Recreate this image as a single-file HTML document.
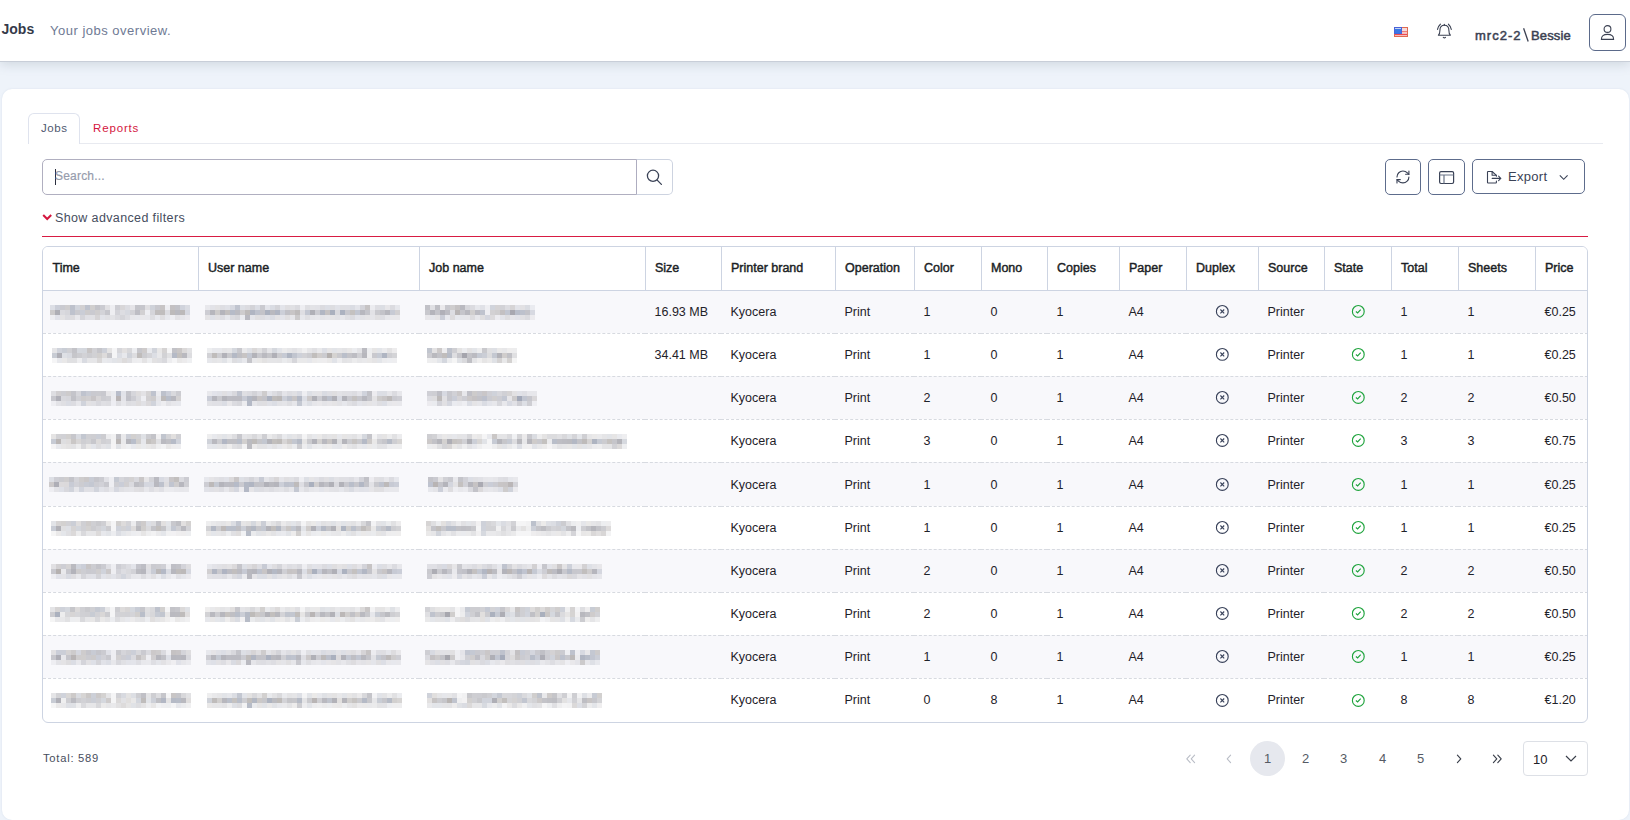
<!DOCTYPE html>
<html><head><meta charset="utf-8">
<style>
*{box-sizing:border-box;margin:0;padding:0}
html,body{width:1630px;height:820px;overflow:hidden}
body{background:#eef3fa;font-family:"Liberation Sans",sans-serif;color:#212529;position:relative}
.hdr{position:absolute;left:0;top:0;width:1630px;height:62px;background:#fff;border-bottom:1px solid #c8ced8;box-shadow:0 3px 10px rgba(110,128,140,.22)}
.abs{position:absolute;white-space:nowrap}
.card{position:absolute;left:2px;top:89px;width:1627px;height:731px;background:#fff;border-radius:10px;box-shadow:0 0 2px rgba(150,170,200,.25)}
.tabline{position:absolute;left:28px;top:143px;width:1575px;height:1px;background:#e8eaf0}
.tab{position:absolute;left:28px;top:113px;width:52px;height:31px;border:1px solid #dfe3ee;border-bottom:none;border-radius:6px 6px 0 0;background:#fff}
.search{position:absolute;left:42px;top:159px;width:595px;height:36px;border:1px solid #b0afc0;border-radius:5px 0 0 5px}
.sbtn{position:absolute;left:636px;top:159px;width:37px;height:36px;border:1px solid #cdd3e0;border-left:1px solid #aeadc0;border-radius:0 5px 5px 0}
.btn{position:absolute;top:159px;height:36px;border:1px solid #5d6c8c;border-radius:5px}
.redline{position:absolute;left:42px;top:236px;width:1546px;height:1px;background:#d81b43}
.tbl{position:absolute;left:42px;top:246px;width:1546px;height:477px;border:1px solid #cdd4e2;border-radius:6px;overflow:hidden}
table{border-collapse:collapse;table-layout:fixed;width:1544px}
th{height:43px;text-align:left;font-weight:normal;-webkit-text-stroke:.45px #1c1f26;font-size:12.5px;color:#1c1f26;padding:0 0 1px 9.5px;border-right:1px solid #cdd4e2;border-bottom:1px solid #cdd4e2;background:#fff}
th:last-child{border-right:none}
td{height:43px;font-size:12.5px;color:#1f2229;padding:1px 0 0 9.5px;border-bottom:1px dashed #d7dae0}
tr:last-child td{border-bottom:none}
tr.odd td{background:#f8f8fb}
tr.tall td{height:44px}
td.ic{padding-left:0;text-align:center}
td.ic svg{display:inline-block;vertical-align:middle;transform:translate(.3px,-.6px)}
.mz{position:absolute;filter:blur(.6px)}
.pg{position:absolute;top:741px;width:35px;height:35px;line-height:35px;text-align:center;font-size:13px;color:#555a64}
</style></head><body>
<div class="hdr">
  <div class="abs" style="left:1.5px;top:21px;font-size:14px;font-weight:bold;color:#353a4a">Jobs</div>
  <div class="abs" style="left:50px;top:23px;font-size:13px;letter-spacing:.5px;color:#6f7a94">Your jobs overview.</div>
  <svg class="abs" style="left:1394px;top:27px" width="14" height="10" viewBox="0 0 14 10">
    <rect x="0" y="0" width="14" height="10" fill="#df6a50"/>
    <rect x="1" y="1" width="12" height="8" fill="#f6dada"/>
    <rect x="1" y="4" width="12" height="1.2" fill="#f07a7a"/><rect x="1" y="6.8" width="12" height="1.4" fill="#ee4a52"/>
    <rect x="0" y="0" width="8" height="7" fill="#4a63d8"/>
    <rect x="1" y="1.5" width="6" height="4.8" fill="#3a78e6"/>
    <rect x="1" y="1" width="6" height="1" fill="#c8d4f2"/>
  </svg>
  <svg class="abs" style="left:1436px;top:23px" width="17" height="17" viewBox="0 0 17 17" fill="none" stroke="#3b4152" stroke-width="1.1" stroke-linecap="round" stroke-linejoin="round">
    <path d="M2.4 12.2C3.8 11 3.9 10 3.9 7.4C3.9 4.3 5.8 2.2 8.4 2.2C11 2.2 12.9 4.3 12.9 7.4C12.9 10 13 11 14.4 12.2Z"/>
    <path d="M8.4 1.2V2.2"/>
    <path d="M7.3 14.4Q8.4 15.4 9.5 14.4"/>
    <path d="M1.5 6.4Q2.2 3 4.4 1.2M15.3 6.4Q14.6 3 12.4 1.2"/>
  </svg>
  <div class="abs" style="left:1475px;top:28px;font-size:13px;-webkit-text-stroke:.5px #3b4152;letter-spacing:1px;color:#3b4152">mrc2-2</div>
  <svg class="abs" style="left:1522px;top:27px" width="8" height="16" viewBox="0 0 8 16"><path d="M1.6 1.3L6.2 14.5" stroke="#3b4152" stroke-width="1.3"/></svg>
  <div class="abs" style="left:1531px;top:28px;font-size:13px;-webkit-text-stroke:.5px #3b4152;letter-spacing:.15px;color:#3b4152">Bessie</div>
  <div class="abs" style="left:1589px;top:14px;width:37px;height:37px;border:1px solid #5b6a8a;border-radius:6px"></div>
  <svg class="abs" style="left:1600px;top:24px" width="16" height="17" viewBox="0 0 16 17" fill="none" stroke="#3b4152" stroke-width="1.1">
    <circle cx="7.5" cy="5" r="3.4"/>
    <path d="M1.4 15.4q0-5 6.1-5t6.1 5z"/>
  </svg>
</div>
<div class="card"></div>
<div class="tabline"></div>
<div class="tab"></div>
<div class="abs" style="left:41px;top:122px;font-size:11.5px;letter-spacing:.6px;color:#4f5870">Jobs</div>
<div class="abs" style="left:93px;top:122px;font-size:11.5px;letter-spacing:.85px;color:#d4163e">Reports</div>

<div class="search"></div>
<div class="abs" style="left:55px;top:169px;width:1px;height:16px;background:#2b2f3f"></div>
<div class="abs" style="left:55px;top:169px;font-size:12px;letter-spacing:.2px;-webkit-text-stroke:.2px #9aa0b0;color:#959bab">Search...</div>
<div class="sbtn"></div>
<svg class="abs" style="left:645px;top:168px" width="18" height="18" viewBox="0 0 18 18" fill="none" stroke="#3a4256" stroke-width="1.3" stroke-linecap="round">
  <circle cx="8" cy="7.8" r="5.6"/><path d="M12.2 12.1L16.4 16.4"/>
</svg>

<div class="btn" style="left:1385px;width:36px"></div>
<svg class="abs" style="left:1395.3px;top:169px" width="15.9" height="15.9" viewBox="0 0 24 24" fill="none" stroke="#3a4256" stroke-width="1.7" stroke-linecap="round" stroke-linejoin="round">
  <path d="M3 12a9 9 0 0 1 9-9 9.75 9.75 0 0 1 6.74 2.74L21 8"/><path d="M21 3v5h-5"/><path d="M21 12a9 9 0 0 1-9 9 9.75 9.75 0 0 1-6.74-2.74L3 16"/><path d="M8 16H3v5"/>
</svg>
<div class="btn" style="left:1428px;width:37px"></div>
<svg class="abs" style="left:1438px;top:170px" width="17" height="16" viewBox="0 0 17 16" fill="none" stroke="#3a4256" stroke-width="1.2">
  <rect x="1.6" y="1.7" width="14" height="11.8" rx="1.4"/><path d="M1.6 5H15.6M6 5V13.5" stroke="#6b7588"/>
</svg>
<div class="btn" style="left:1472px;width:113px;height:35px"></div>
<svg class="abs" style="left:1486px;top:170px" width="16" height="16" viewBox="0 0 16 16" fill="none" stroke="#3a4256" stroke-width="1.1" stroke-linejoin="round" stroke-linecap="round">
  <path d="M10.4 11V12.4Q10.4 13 9.8 13H2.1Q1.5 13 1.5 12.4V2.1Q1.5 1.5 2.1 1.5H6.1L10.4 5.3V6.2"/><path d="M6.1 1.5V5.3H10.4"/><path d="M6.2 8.4H14.8M12.6 6.2L14.8 8.4L12.6 10.6"/>
</svg>
<div class="abs" style="left:1508px;top:169px;font-size:13px;letter-spacing:.3px;color:#3a4256">Export</div>
<svg class="abs" style="left:1558px;top:173px" width="11" height="9" viewBox="0 0 11 9" fill="none" stroke="#3a4256" stroke-width="1.1">
  <path d="M1.8 2.3L5.7 6.3L9.6 2.3"/>
</svg>

<svg class="abs" style="left:42px;top:213px" width="11" height="9" viewBox="0 0 11 9" fill="none" stroke="#d4163e" stroke-width="2">
  <path d="M1.2 2L5.2 6L9.2 2"/>
</svg>
<div class="abs" style="left:55px;top:211px;font-size:12.5px;letter-spacing:.37px;color:#464d5e">Show advanced filters</div>
<div class="redline"></div>

<div class="tbl">
<table>
<thead><tr><th style="width:155px">Time</th><th style="width:221px">User name</th><th style="width:226px">Job name</th><th style="width:76px">Size</th><th style="width:114px">Printer brand</th><th style="width:79px">Operation</th><th style="width:67px">Color</th><th style="width:66px">Mono</th><th style="width:72px">Copies</th><th style="width:67px">Paper</th><th style="width:72px">Duplex</th><th style="width:66px">Source</th><th style="width:67px">State</th><th style="width:67px">Total</th><th style="width:77px">Sheets</th><th style="width:53px">Price</th></tr></thead>
<tbody>
<tr class="odd"><td></td><td></td><td></td><td>16.93 MB</td><td>Kyocera</td><td>Print</td><td>1</td><td>0</td><td>1</td><td>A4</td><td class="ic"><svg width="14" height="14" viewBox="0 0 14 14"><circle cx="7" cy="7" r="5.9" fill="none" stroke="#39425a" stroke-width="1.15"/><path d="M5.1 5.1L8.9 8.9M8.9 5.1L5.1 8.9" stroke="#39425a" stroke-width="1.1"/></svg></td><td>Printer</td><td class="ic"><svg width="14" height="14" viewBox="0 0 14 14"><circle cx="7" cy="7" r="5.9" fill="none" stroke="#1ea33c" stroke-width="1.15"/><path d="M4.6 7.1L6.3 8.5L9.4 5.2" fill="none" stroke="#1ea33c" stroke-width="1.15"/></svg></td><td>1</td><td>1</td><td>€0.25</td></tr>
<tr class=""><td></td><td></td><td></td><td>34.41 MB</td><td>Kyocera</td><td>Print</td><td>1</td><td>0</td><td>1</td><td>A4</td><td class="ic"><svg width="14" height="14" viewBox="0 0 14 14"><circle cx="7" cy="7" r="5.9" fill="none" stroke="#39425a" stroke-width="1.15"/><path d="M5.1 5.1L8.9 8.9M8.9 5.1L5.1 8.9" stroke="#39425a" stroke-width="1.1"/></svg></td><td>Printer</td><td class="ic"><svg width="14" height="14" viewBox="0 0 14 14"><circle cx="7" cy="7" r="5.9" fill="none" stroke="#1ea33c" stroke-width="1.15"/><path d="M4.6 7.1L6.3 8.5L9.4 5.2" fill="none" stroke="#1ea33c" stroke-width="1.15"/></svg></td><td>1</td><td>1</td><td>€0.25</td></tr>
<tr class="odd"><td></td><td></td><td></td><td></td><td>Kyocera</td><td>Print</td><td>2</td><td>0</td><td>1</td><td>A4</td><td class="ic"><svg width="14" height="14" viewBox="0 0 14 14"><circle cx="7" cy="7" r="5.9" fill="none" stroke="#39425a" stroke-width="1.15"/><path d="M5.1 5.1L8.9 8.9M8.9 5.1L5.1 8.9" stroke="#39425a" stroke-width="1.1"/></svg></td><td>Printer</td><td class="ic"><svg width="14" height="14" viewBox="0 0 14 14"><circle cx="7" cy="7" r="5.9" fill="none" stroke="#1ea33c" stroke-width="1.15"/><path d="M4.6 7.1L6.3 8.5L9.4 5.2" fill="none" stroke="#1ea33c" stroke-width="1.15"/></svg></td><td>2</td><td>2</td><td>€0.50</td></tr>
<tr class=""><td></td><td></td><td></td><td></td><td>Kyocera</td><td>Print</td><td>3</td><td>0</td><td>1</td><td>A4</td><td class="ic"><svg width="14" height="14" viewBox="0 0 14 14"><circle cx="7" cy="7" r="5.9" fill="none" stroke="#39425a" stroke-width="1.15"/><path d="M5.1 5.1L8.9 8.9M8.9 5.1L5.1 8.9" stroke="#39425a" stroke-width="1.1"/></svg></td><td>Printer</td><td class="ic"><svg width="14" height="14" viewBox="0 0 14 14"><circle cx="7" cy="7" r="5.9" fill="none" stroke="#1ea33c" stroke-width="1.15"/><path d="M4.6 7.1L6.3 8.5L9.4 5.2" fill="none" stroke="#1ea33c" stroke-width="1.15"/></svg></td><td>3</td><td>3</td><td>€0.75</td></tr>
<tr class="odd tall"><td></td><td></td><td></td><td></td><td>Kyocera</td><td>Print</td><td>1</td><td>0</td><td>1</td><td>A4</td><td class="ic"><svg width="14" height="14" viewBox="0 0 14 14"><circle cx="7" cy="7" r="5.9" fill="none" stroke="#39425a" stroke-width="1.15"/><path d="M5.1 5.1L8.9 8.9M8.9 5.1L5.1 8.9" stroke="#39425a" stroke-width="1.1"/></svg></td><td>Printer</td><td class="ic"><svg width="14" height="14" viewBox="0 0 14 14"><circle cx="7" cy="7" r="5.9" fill="none" stroke="#1ea33c" stroke-width="1.15"/><path d="M4.6 7.1L6.3 8.5L9.4 5.2" fill="none" stroke="#1ea33c" stroke-width="1.15"/></svg></td><td>1</td><td>1</td><td>€0.25</td></tr>
<tr class=""><td></td><td></td><td></td><td></td><td>Kyocera</td><td>Print</td><td>1</td><td>0</td><td>1</td><td>A4</td><td class="ic"><svg width="14" height="14" viewBox="0 0 14 14"><circle cx="7" cy="7" r="5.9" fill="none" stroke="#39425a" stroke-width="1.15"/><path d="M5.1 5.1L8.9 8.9M8.9 5.1L5.1 8.9" stroke="#39425a" stroke-width="1.1"/></svg></td><td>Printer</td><td class="ic"><svg width="14" height="14" viewBox="0 0 14 14"><circle cx="7" cy="7" r="5.9" fill="none" stroke="#1ea33c" stroke-width="1.15"/><path d="M4.6 7.1L6.3 8.5L9.4 5.2" fill="none" stroke="#1ea33c" stroke-width="1.15"/></svg></td><td>1</td><td>1</td><td>€0.25</td></tr>
<tr class="odd"><td></td><td></td><td></td><td></td><td>Kyocera</td><td>Print</td><td>2</td><td>0</td><td>1</td><td>A4</td><td class="ic"><svg width="14" height="14" viewBox="0 0 14 14"><circle cx="7" cy="7" r="5.9" fill="none" stroke="#39425a" stroke-width="1.15"/><path d="M5.1 5.1L8.9 8.9M8.9 5.1L5.1 8.9" stroke="#39425a" stroke-width="1.1"/></svg></td><td>Printer</td><td class="ic"><svg width="14" height="14" viewBox="0 0 14 14"><circle cx="7" cy="7" r="5.9" fill="none" stroke="#1ea33c" stroke-width="1.15"/><path d="M4.6 7.1L6.3 8.5L9.4 5.2" fill="none" stroke="#1ea33c" stroke-width="1.15"/></svg></td><td>2</td><td>2</td><td>€0.50</td></tr>
<tr class=""><td></td><td></td><td></td><td></td><td>Kyocera</td><td>Print</td><td>2</td><td>0</td><td>1</td><td>A4</td><td class="ic"><svg width="14" height="14" viewBox="0 0 14 14"><circle cx="7" cy="7" r="5.9" fill="none" stroke="#39425a" stroke-width="1.15"/><path d="M5.1 5.1L8.9 8.9M8.9 5.1L5.1 8.9" stroke="#39425a" stroke-width="1.1"/></svg></td><td>Printer</td><td class="ic"><svg width="14" height="14" viewBox="0 0 14 14"><circle cx="7" cy="7" r="5.9" fill="none" stroke="#1ea33c" stroke-width="1.15"/><path d="M4.6 7.1L6.3 8.5L9.4 5.2" fill="none" stroke="#1ea33c" stroke-width="1.15"/></svg></td><td>2</td><td>2</td><td>€0.50</td></tr>
<tr class="odd"><td></td><td></td><td></td><td></td><td>Kyocera</td><td>Print</td><td>1</td><td>0</td><td>1</td><td>A4</td><td class="ic"><svg width="14" height="14" viewBox="0 0 14 14"><circle cx="7" cy="7" r="5.9" fill="none" stroke="#39425a" stroke-width="1.15"/><path d="M5.1 5.1L8.9 8.9M8.9 5.1L5.1 8.9" stroke="#39425a" stroke-width="1.1"/></svg></td><td>Printer</td><td class="ic"><svg width="14" height="14" viewBox="0 0 14 14"><circle cx="7" cy="7" r="5.9" fill="none" stroke="#1ea33c" stroke-width="1.15"/><path d="M4.6 7.1L6.3 8.5L9.4 5.2" fill="none" stroke="#1ea33c" stroke-width="1.15"/></svg></td><td>1</td><td>1</td><td>€0.25</td></tr>
<tr class=""><td></td><td></td><td></td><td></td><td>Kyocera</td><td>Print</td><td>0</td><td>8</td><td>1</td><td>A4</td><td class="ic"><svg width="14" height="14" viewBox="0 0 14 14"><circle cx="7" cy="7" r="5.9" fill="none" stroke="#39425a" stroke-width="1.15"/><path d="M5.1 5.1L8.9 8.9M8.9 5.1L5.1 8.9" stroke="#39425a" stroke-width="1.1"/></svg></td><td>Printer</td><td class="ic"><svg width="14" height="14" viewBox="0 0 14 14"><circle cx="7" cy="7" r="5.9" fill="none" stroke="#1ea33c" stroke-width="1.15"/><path d="M4.6 7.1L6.3 8.5L9.4 5.2" fill="none" stroke="#1ea33c" stroke-width="1.15"/></svg></td><td>8</td><td>8</td><td>€1.20</td></tr>
</tbody>
</table>
</div>
<svg class="mz" style="left:50px;top:305px" width="140" height="15"><rect x="0" y="0" width="5" height="5" fill="#dddfe6"/><rect x="5" y="0" width="5" height="5" fill="#cbced8"/><rect x="10" y="0" width="5" height="5" fill="#cacad0"/><rect x="15" y="0" width="5" height="5" fill="#cfcdce"/><rect x="20" y="0" width="5" height="5" fill="#bdc1cc"/><rect x="25" y="0" width="5" height="5" fill="#d1d4dc"/><rect x="30" y="0" width="5" height="5" fill="#d2d0d2"/><rect x="35" y="0" width="5" height="5" fill="#bec2cd"/><rect x="40" y="0" width="5" height="5" fill="#d0cece"/><rect x="45" y="0" width="5" height="5" fill="#c3c3c9"/><rect x="50" y="0" width="5" height="5" fill="#cbcbd1"/><rect x="55" y="0" width="5" height="5" fill="#e1e0e3"/><rect x="60" y="0" width="5" height="5" fill="#eeeef2"/><rect x="65" y="0" width="5" height="5" fill="#cdcdd3"/><rect x="70" y="0" width="5" height="5" fill="#d8d6d8"/><rect x="75" y="0" width="5" height="5" fill="#dcdce1"/><rect x="80" y="0" width="5" height="5" fill="#e5e4e8"/><rect x="85" y="0" width="5" height="5" fill="#c4c4ca"/><rect x="90" y="0" width="5" height="5" fill="#c6c6cc"/><rect x="95" y="0" width="5" height="5" fill="#e0dfe2"/><rect x="100" y="0" width="5" height="5" fill="#cfd2da"/><rect x="105" y="0" width="5" height="5" fill="#c8c8ce"/><rect x="110" y="0" width="5" height="5" fill="#c7c4c5"/><rect x="115" y="0" width="5" height="5" fill="#eeeef2"/><rect x="120" y="0" width="5" height="5" fill="#c4c1c3"/><rect x="125" y="0" width="5" height="5" fill="#c2c2c8"/><rect x="130" y="0" width="5" height="5" fill="#d0d3dc"/><rect x="135" y="0" width="5" height="5" fill="#dadce3"/><rect x="0" y="5" width="5" height="5" fill="#cccacb"/><rect x="5" y="5" width="5" height="5" fill="#aeaeb5"/><rect x="10" y="5" width="5" height="5" fill="#dadadf"/><rect x="15" y="5" width="5" height="5" fill="#d6d6db"/><rect x="20" y="5" width="5" height="5" fill="#bec2cd"/><rect x="25" y="5" width="5" height="5" fill="#cacacf"/><rect x="30" y="5" width="5" height="5" fill="#cacdd6"/><rect x="35" y="5" width="5" height="5" fill="#cdcbcc"/><rect x="40" y="5" width="5" height="5" fill="#cacad0"/><rect x="45" y="5" width="5" height="5" fill="#cfcdce"/><rect x="50" y="5" width="5" height="5" fill="#d3d3d8"/><rect x="55" y="5" width="5" height="5" fill="#c6c6cc"/><rect x="60" y="5" width="5" height="5" fill="#eeeef2"/><rect x="65" y="5" width="5" height="5" fill="#d3d3d9"/><rect x="70" y="5" width="5" height="5" fill="#dddde2"/><rect x="75" y="5" width="5" height="5" fill="#d7d9e0"/><rect x="80" y="5" width="5" height="5" fill="#d2d2d7"/><rect x="85" y="5" width="5" height="5" fill="#bdbdc4"/><rect x="90" y="5" width="5" height="5" fill="#d2d0d2"/><rect x="95" y="5" width="5" height="5" fill="#eeeef2"/><rect x="100" y="5" width="5" height="5" fill="#d5d5da"/><rect x="105" y="5" width="5" height="5" fill="#c0bdbd"/><rect x="110" y="5" width="5" height="5" fill="#c0bdbd"/><rect x="115" y="5" width="5" height="5" fill="#dcdce1"/><rect x="120" y="5" width="5" height="5" fill="#bdbaba"/><rect x="125" y="5" width="5" height="5" fill="#b9b9bf"/><rect x="130" y="5" width="5" height="5" fill="#bcb9b9"/><rect x="135" y="5" width="5" height="5" fill="#d6d8e0"/><rect x="0" y="10" width="5" height="5" fill="#eeeef2"/><rect x="5" y="10" width="5" height="5" fill="#e1e2e9"/><rect x="10" y="10" width="5" height="5" fill="#e3e2e4"/><rect x="15" y="10" width="5" height="5" fill="#dbdbe0"/><rect x="20" y="10" width="5" height="5" fill="#dddcdf"/><rect x="25" y="10" width="5" height="5" fill="#e8e8ec"/><rect x="30" y="10" width="5" height="5" fill="#d5d5da"/><rect x="35" y="10" width="5" height="5" fill="#e0e0e5"/><rect x="40" y="10" width="5" height="5" fill="#e1e1e5"/><rect x="45" y="10" width="5" height="5" fill="#d6d4d6"/><rect x="50" y="10" width="5" height="5" fill="#e2e3e9"/><rect x="55" y="10" width="5" height="5" fill="#e0e0e4"/><rect x="60" y="10" width="5" height="5" fill="#e3e3e7"/><rect x="65" y="10" width="5" height="5" fill="#dbdbe0"/><rect x="70" y="10" width="5" height="5" fill="#d5d5da"/><rect x="75" y="10" width="5" height="5" fill="#dddde2"/><rect x="80" y="10" width="5" height="5" fill="#e7e7eb"/><rect x="85" y="10" width="5" height="5" fill="#e7e8ed"/><rect x="90" y="10" width="5" height="5" fill="#e9e8eb"/><rect x="95" y="10" width="5" height="5" fill="#e8e8ec"/><rect x="100" y="10" width="5" height="5" fill="#dedee2"/><rect x="105" y="10" width="5" height="5" fill="#e8e9ee"/><rect x="110" y="10" width="5" height="5" fill="#dfdee1"/><rect x="115" y="10" width="5" height="5" fill="#e7e8ed"/><rect x="120" y="10" width="5" height="5" fill="#eeeef2"/><rect x="125" y="10" width="5" height="5" fill="#e3e2e5"/><rect x="130" y="10" width="5" height="5" fill="#e6e6ea"/><rect x="135" y="10" width="5" height="5" fill="#ebeaee"/></svg>
<svg class="mz" style="left:205px;top:305px" width="195" height="15"><rect x="0" y="0" width="5" height="5" fill="#e8e8ec"/><rect x="5" y="0" width="5" height="5" fill="#e3e3e8"/><rect x="10" y="0" width="5" height="5" fill="#e3e2e4"/><rect x="15" y="0" width="5" height="5" fill="#dedee3"/><rect x="20" y="0" width="5" height="5" fill="#e0e1e7"/><rect x="25" y="0" width="5" height="5" fill="#d6d8e0"/><rect x="30" y="0" width="5" height="5" fill="#c0c4cf"/><rect x="35" y="0" width="5" height="5" fill="#dddfe5"/><rect x="40" y="0" width="5" height="5" fill="#dbdbe0"/><rect x="45" y="0" width="5" height="5" fill="#d3d3d8"/><rect x="50" y="0" width="5" height="5" fill="#dbdde4"/><rect x="55" y="0" width="5" height="5" fill="#cacad0"/><rect x="60" y="0" width="5" height="5" fill="#e3e4ea"/><rect x="65" y="0" width="5" height="5" fill="#dadce3"/><rect x="70" y="0" width="5" height="5" fill="#d4d4d9"/><rect x="75" y="0" width="5" height="5" fill="#e3e4ea"/><rect x="80" y="0" width="5" height="5" fill="#dfdee1"/><rect x="85" y="0" width="5" height="5" fill="#e0e0e4"/><rect x="90" y="0" width="5" height="5" fill="#dadadf"/><rect x="95" y="0" width="5" height="5" fill="#eeeef2"/><rect x="100" y="0" width="5" height="5" fill="#dfdfe3"/><rect x="105" y="0" width="5" height="5" fill="#e3e3e7"/><rect x="110" y="0" width="5" height="5" fill="#e2e2e7"/><rect x="115" y="0" width="5" height="5" fill="#dbdbe0"/><rect x="120" y="0" width="5" height="5" fill="#dcdee5"/><rect x="125" y="0" width="5" height="5" fill="#dddde1"/><rect x="130" y="0" width="5" height="5" fill="#e1e2e8"/><rect x="135" y="0" width="5" height="5" fill="#dfdfe3"/><rect x="140" y="0" width="5" height="5" fill="#dfdfe4"/><rect x="145" y="0" width="5" height="5" fill="#dadce3"/><rect x="150" y="0" width="5" height="5" fill="#e3e4ea"/><rect x="155" y="0" width="5" height="5" fill="#d3d3d9"/><rect x="160" y="0" width="5" height="5" fill="#c6c3c4"/><rect x="165" y="0" width="5" height="5" fill="#ececf0"/><rect x="170" y="0" width="5" height="5" fill="#dedee3"/><rect x="175" y="0" width="5" height="5" fill="#dcdee4"/><rect x="180" y="0" width="5" height="5" fill="#e7e6e9"/><rect x="185" y="0" width="5" height="5" fill="#dbdbe0"/><rect x="190" y="0" width="5" height="5" fill="#e6e7ec"/><rect x="0" y="5" width="5" height="5" fill="#cdcdd3"/><rect x="5" y="5" width="5" height="5" fill="#b6b6bd"/><rect x="10" y="5" width="5" height="5" fill="#cdcbcb"/><rect x="15" y="5" width="5" height="5" fill="#b4b4bb"/><rect x="20" y="5" width="5" height="5" fill="#c2bfbf"/><rect x="25" y="5" width="5" height="5" fill="#b6bbc8"/><rect x="30" y="5" width="5" height="5" fill="#bbbbc2"/><rect x="35" y="5" width="5" height="5" fill="#cecccd"/><rect x="40" y="5" width="5" height="5" fill="#bebbba"/><rect x="45" y="5" width="5" height="5" fill="#b0b5c2"/><rect x="50" y="5" width="5" height="5" fill="#bec2cd"/><rect x="55" y="5" width="5" height="5" fill="#c3c3c9"/><rect x="60" y="5" width="5" height="5" fill="#abb1bf"/><rect x="65" y="5" width="5" height="5" fill="#b9b9bf"/><rect x="70" y="5" width="5" height="5" fill="#b0b5c2"/><rect x="75" y="5" width="5" height="5" fill="#cccfd8"/><rect x="80" y="5" width="5" height="5" fill="#c1c1c7"/><rect x="85" y="5" width="5" height="5" fill="#c8c5c6"/><rect x="90" y="5" width="5" height="5" fill="#bebbbb"/><rect x="95" y="5" width="5" height="5" fill="#dedee3"/><rect x="100" y="5" width="5" height="5" fill="#c3c7d2"/><rect x="105" y="5" width="5" height="5" fill="#b0b0b7"/><rect x="110" y="5" width="5" height="5" fill="#ccccd2"/><rect x="115" y="5" width="5" height="5" fill="#b1b6c3"/><rect x="120" y="5" width="5" height="5" fill="#c5c2c3"/><rect x="125" y="5" width="5" height="5" fill="#aab0be"/><rect x="130" y="5" width="5" height="5" fill="#d9d9de"/><rect x="135" y="5" width="5" height="5" fill="#acb2c0"/><rect x="140" y="5" width="5" height="5" fill="#c8c8ce"/><rect x="145" y="5" width="5" height="5" fill="#c4c1c0"/><rect x="150" y="5" width="5" height="5" fill="#c2c6d1"/><rect x="155" y="5" width="5" height="5" fill="#b7b7be"/><rect x="160" y="5" width="5" height="5" fill="#c4c4ca"/><rect x="165" y="5" width="5" height="5" fill="#e2e2e6"/><rect x="170" y="5" width="5" height="5" fill="#c9c9ce"/><rect x="175" y="5" width="5" height="5" fill="#c3c3c9"/><rect x="180" y="5" width="5" height="5" fill="#b7b7be"/><rect x="185" y="5" width="5" height="5" fill="#c7cad4"/><rect x="190" y="5" width="5" height="5" fill="#d2d0d2"/><rect x="0" y="10" width="5" height="5" fill="#e4e3e5"/><rect x="5" y="10" width="5" height="5" fill="#dee0e7"/><rect x="10" y="10" width="5" height="5" fill="#e2e1e4"/><rect x="15" y="10" width="5" height="5" fill="#dddde2"/><rect x="20" y="10" width="5" height="5" fill="#e6e7ec"/><rect x="25" y="10" width="5" height="5" fill="#dbdbe0"/><rect x="30" y="10" width="5" height="5" fill="#d7d7dc"/><rect x="35" y="10" width="5" height="5" fill="#ebecf0"/><rect x="40" y="10" width="5" height="5" fill="#b9b9c0"/><rect x="45" y="10" width="5" height="5" fill="#e4e5ea"/><rect x="50" y="10" width="5" height="5" fill="#e0dfe1"/><rect x="55" y="10" width="5" height="5" fill="#dddde2"/><rect x="60" y="10" width="5" height="5" fill="#e0e1e7"/><rect x="65" y="10" width="5" height="5" fill="#dbdde4"/><rect x="70" y="10" width="5" height="5" fill="#e4e3e5"/><rect x="75" y="10" width="5" height="5" fill="#e3e4ea"/><rect x="80" y="10" width="5" height="5" fill="#e0dfe1"/><rect x="85" y="10" width="5" height="5" fill="#e6e6ea"/><rect x="90" y="10" width="5" height="5" fill="#cccacb"/><rect x="95" y="10" width="5" height="5" fill="#e6e7ec"/><rect x="100" y="10" width="5" height="5" fill="#dfdfe3"/><rect x="105" y="10" width="5" height="5" fill="#e6e6ea"/><rect x="110" y="10" width="5" height="5" fill="#e8e8ec"/><rect x="115" y="10" width="5" height="5" fill="#e4e4e8"/><rect x="120" y="10" width="5" height="5" fill="#e6e6ea"/><rect x="125" y="10" width="5" height="5" fill="#e5e4e6"/><rect x="130" y="10" width="5" height="5" fill="#e2e2e6"/><rect x="135" y="10" width="5" height="5" fill="#e7e7eb"/><rect x="140" y="10" width="5" height="5" fill="#e0e0e4"/><rect x="145" y="10" width="5" height="5" fill="#dbdbe0"/><rect x="150" y="10" width="5" height="5" fill="#e3e4ea"/><rect x="155" y="10" width="5" height="5" fill="#e2e2e6"/><rect x="160" y="10" width="5" height="5" fill="#e5e4e6"/><rect x="165" y="10" width="5" height="5" fill="#e5e5e9"/><rect x="170" y="10" width="5" height="5" fill="#e0dfe1"/><rect x="175" y="10" width="5" height="5" fill="#dedee3"/><rect x="180" y="10" width="5" height="5" fill="#e7e7eb"/><rect x="185" y="10" width="5" height="5" fill="#e9e8eb"/><rect x="190" y="10" width="5" height="5" fill="#e9e8eb"/></svg>
<svg class="mz" style="left:425px;top:305px" width="110" height="15"><rect x="0" y="0" width="5" height="5" fill="#c1c1c7"/><rect x="5" y="0" width="5" height="5" fill="#e0e0e4"/><rect x="10" y="0" width="5" height="5" fill="#bfbfc5"/><rect x="15" y="0" width="5" height="5" fill="#eae9ec"/><rect x="20" y="0" width="5" height="5" fill="#c8c8ce"/><rect x="25" y="0" width="5" height="5" fill="#cfcdce"/><rect x="30" y="0" width="5" height="5" fill="#c5c2c3"/><rect x="35" y="0" width="5" height="5" fill="#b9b9c0"/><rect x="40" y="0" width="5" height="5" fill="#d6d6db"/><rect x="45" y="0" width="5" height="5" fill="#dbdbe0"/><rect x="50" y="0" width="5" height="5" fill="#e6e7ec"/><rect x="55" y="0" width="5" height="5" fill="#e0e1e7"/><rect x="60" y="0" width="5" height="5" fill="#eeeef2"/><rect x="65" y="0" width="5" height="5" fill="#d1d4dc"/><rect x="70" y="0" width="5" height="5" fill="#d5d3d5"/><rect x="75" y="0" width="5" height="5" fill="#d2d2d7"/><rect x="80" y="0" width="5" height="5" fill="#dcdce1"/><rect x="85" y="0" width="5" height="5" fill="#d6d4d6"/><rect x="90" y="0" width="5" height="5" fill="#e2e3e9"/><rect x="95" y="0" width="5" height="5" fill="#e2e1e4"/><rect x="100" y="0" width="5" height="5" fill="#dadce2"/><rect x="105" y="0" width="5" height="5" fill="#eaebf0"/><rect x="0" y="5" width="5" height="5" fill="#c8c8cd"/><rect x="5" y="5" width="5" height="5" fill="#b4b4bb"/><rect x="10" y="5" width="5" height="5" fill="#c4c4ca"/><rect x="15" y="5" width="5" height="5" fill="#b0b0b8"/><rect x="20" y="5" width="5" height="5" fill="#bcbcc3"/><rect x="25" y="5" width="5" height="5" fill="#dddde2"/><rect x="30" y="5" width="5" height="5" fill="#b9b5b5"/><rect x="35" y="5" width="5" height="5" fill="#c5c5cb"/><rect x="40" y="5" width="5" height="5" fill="#b8b8bf"/><rect x="45" y="5" width="5" height="5" fill="#d0cece"/><rect x="50" y="5" width="5" height="5" fill="#bbbbc2"/><rect x="55" y="5" width="5" height="5" fill="#bfc3ce"/><rect x="60" y="5" width="5" height="5" fill="#eeeef2"/><rect x="65" y="5" width="5" height="5" fill="#d3d1d3"/><rect x="70" y="5" width="5" height="5" fill="#d0cecf"/><rect x="75" y="5" width="5" height="5" fill="#c3c0c2"/><rect x="80" y="5" width="5" height="5" fill="#c2c6d1"/><rect x="85" y="5" width="5" height="5" fill="#a8a8b0"/><rect x="90" y="5" width="5" height="5" fill="#b9beca"/><rect x="95" y="5" width="5" height="5" fill="#bdc1cc"/><rect x="100" y="5" width="5" height="5" fill="#c3c3c9"/><rect x="105" y="5" width="5" height="5" fill="#d7d9e1"/><rect x="0" y="10" width="5" height="5" fill="#e8e7ea"/><rect x="5" y="10" width="5" height="5" fill="#e5e6eb"/><rect x="10" y="10" width="5" height="5" fill="#e5e4e6"/><rect x="15" y="10" width="5" height="5" fill="#cacdd7"/><rect x="20" y="10" width="5" height="5" fill="#e8e9ee"/><rect x="25" y="10" width="5" height="5" fill="#dddbdd"/><rect x="30" y="10" width="5" height="5" fill="#e7e8ed"/><rect x="35" y="10" width="5" height="5" fill="#e5e6eb"/><rect x="40" y="10" width="5" height="5" fill="#e6e6ea"/><rect x="45" y="10" width="5" height="5" fill="#dddcdf"/><rect x="50" y="10" width="5" height="5" fill="#e7e7eb"/><rect x="55" y="10" width="5" height="5" fill="#dfdee0"/><rect x="60" y="10" width="5" height="5" fill="#d5d7df"/><rect x="65" y="10" width="5" height="5" fill="#dddbdd"/><rect x="70" y="10" width="5" height="5" fill="#edecf0"/><rect x="75" y="10" width="5" height="5" fill="#e3e4ea"/><rect x="80" y="10" width="5" height="5" fill="#dedde0"/><rect x="85" y="10" width="5" height="5" fill="#e5e5e9"/><rect x="90" y="10" width="5" height="5" fill="#e2e3e9"/><rect x="95" y="10" width="5" height="5" fill="#e1e0e3"/><rect x="100" y="10" width="5" height="5" fill="#dbdbdf"/><rect x="105" y="10" width="5" height="5" fill="#ecebee"/></svg>
<svg class="mz" style="left:52px;top:348px" width="140" height="15"><rect x="0" y="0" width="5" height="5" fill="#e5e5e7"/><rect x="5" y="0" width="5" height="5" fill="#d0d3db"/><rect x="10" y="0" width="5" height="5" fill="#c9cdd5"/><rect x="15" y="0" width="5" height="5" fill="#d0d0d4"/><rect x="20" y="0" width="5" height="5" fill="#c3c3c8"/><rect x="25" y="0" width="5" height="5" fill="#d5d8de"/><rect x="30" y="0" width="5" height="5" fill="#d4d7dd"/><rect x="35" y="0" width="5" height="5" fill="#c7c4c4"/><rect x="40" y="0" width="5" height="5" fill="#d1d1d5"/><rect x="45" y="0" width="5" height="5" fill="#c5c5ca"/><rect x="50" y="0" width="5" height="5" fill="#cdd0d8"/><rect x="55" y="0" width="5" height="5" fill="#e4e3e3"/><rect x="60" y="0" width="5" height="5" fill="#f5f5f6"/><rect x="65" y="0" width="5" height="5" fill="#d6d6da"/><rect x="70" y="0" width="5" height="5" fill="#e2e0e0"/><rect x="75" y="0" width="5" height="5" fill="#d7d7da"/><rect x="80" y="0" width="5" height="5" fill="#ecedf0"/><rect x="85" y="0" width="5" height="5" fill="#c6c6cb"/><rect x="90" y="0" width="5" height="5" fill="#cecbcb"/><rect x="95" y="0" width="5" height="5" fill="#e8e9ed"/><rect x="100" y="0" width="5" height="5" fill="#d1d4db"/><rect x="105" y="0" width="5" height="5" fill="#e8e7e7"/><rect x="110" y="0" width="5" height="5" fill="#d5d3d3"/><rect x="115" y="0" width="5" height="5" fill="#f5f5f6"/><rect x="120" y="0" width="5" height="5" fill="#c2c2c7"/><rect x="125" y="0" width="5" height="5" fill="#c9c6c6"/><rect x="130" y="0" width="5" height="5" fill="#dbd9d9"/><rect x="135" y="0" width="5" height="5" fill="#e2e2e4"/><rect x="0" y="5" width="5" height="5" fill="#c8ccd4"/><rect x="5" y="5" width="5" height="5" fill="#afafb6"/><rect x="10" y="5" width="5" height="5" fill="#dee0e5"/><rect x="15" y="5" width="5" height="5" fill="#d9dbe1"/><rect x="20" y="5" width="5" height="5" fill="#c6c6ca"/><rect x="25" y="5" width="5" height="5" fill="#ccccd0"/><rect x="30" y="5" width="5" height="5" fill="#d2d2d6"/><rect x="35" y="5" width="5" height="5" fill="#ccccd0"/><rect x="40" y="5" width="5" height="5" fill="#d1d1d4"/><rect x="45" y="5" width="5" height="5" fill="#d1cfce"/><rect x="50" y="5" width="5" height="5" fill="#dddbdb"/><rect x="55" y="5" width="5" height="5" fill="#c7c7cb"/><rect x="60" y="5" width="5" height="5" fill="#f5f5f6"/><rect x="65" y="5" width="5" height="5" fill="#dcdee4"/><rect x="70" y="5" width="5" height="5" fill="#e7e8ec"/><rect x="75" y="5" width="5" height="5" fill="#cfd2d9"/><rect x="80" y="5" width="5" height="5" fill="#dddde0"/><rect x="85" y="5" width="5" height="5" fill="#bfbcbb"/><rect x="90" y="5" width="5" height="5" fill="#ccccd0"/><rect x="95" y="5" width="5" height="5" fill="#d4d4d8"/><rect x="100" y="5" width="5" height="5" fill="#dcdee4"/><rect x="105" y="5" width="5" height="5" fill="#e8e8ea"/><rect x="110" y="5" width="5" height="5" fill="#d2d2d5"/><rect x="115" y="5" width="5" height="5" fill="#e1e1e3"/><rect x="120" y="5" width="5" height="5" fill="#b5bac6"/><rect x="125" y="5" width="5" height="5" fill="#c3c0be"/><rect x="130" y="5" width="5" height="5" fill="#b9b9bf"/><rect x="135" y="5" width="5" height="5" fill="#dddde0"/><rect x="0" y="10" width="5" height="5" fill="#f5f5f6"/><rect x="5" y="10" width="5" height="5" fill="#e7e8ec"/><rect x="10" y="10" width="5" height="5" fill="#e9e8e8"/><rect x="15" y="10" width="5" height="5" fill="#e0e0e2"/><rect x="20" y="10" width="5" height="5" fill="#e0e0e2"/><rect x="25" y="10" width="5" height="5" fill="#eeeef0"/><rect x="30" y="10" width="5" height="5" fill="#d9dbe1"/><rect x="35" y="10" width="5" height="5" fill="#e6e6e8"/><rect x="40" y="10" width="5" height="5" fill="#e6e6e8"/><rect x="45" y="10" width="5" height="5" fill="#dad8d8"/><rect x="50" y="10" width="5" height="5" fill="#e9eaed"/><rect x="55" y="10" width="5" height="5" fill="#e7e8ec"/><rect x="60" y="10" width="5" height="5" fill="#e2e4e8"/><rect x="65" y="10" width="5" height="5" fill="#e3e3e5"/><rect x="70" y="10" width="5" height="5" fill="#dddbdb"/><rect x="75" y="10" width="5" height="5" fill="#dfdfe2"/><rect x="80" y="10" width="5" height="5" fill="#ededef"/><rect x="85" y="10" width="5" height="5" fill="#eeeef0"/><rect x="90" y="10" width="5" height="5" fill="#e4e3e4"/><rect x="95" y="10" width="5" height="5" fill="#edeef0"/><rect x="100" y="10" width="5" height="5" fill="#e2e1e2"/><rect x="105" y="10" width="5" height="5" fill="#dfdfe2"/><rect x="110" y="10" width="5" height="5" fill="#d9d9dd"/><rect x="115" y="10" width="5" height="5" fill="#ededef"/><rect x="120" y="10" width="5" height="5" fill="#f5f5f6"/><rect x="125" y="10" width="5" height="5" fill="#e9e8e8"/><rect x="130" y="10" width="5" height="5" fill="#ecebec"/><rect x="135" y="10" width="5" height="5" fill="#eff0f2"/></svg>
<svg class="mz" style="left:207px;top:348px" width="190" height="15"><rect x="0" y="0" width="5" height="5" fill="#edeef0"/><rect x="5" y="0" width="5" height="5" fill="#e7e8ec"/><rect x="10" y="0" width="5" height="5" fill="#e7e8ec"/><rect x="15" y="0" width="5" height="5" fill="#e4e4e6"/><rect x="20" y="0" width="5" height="5" fill="#e6e6e8"/><rect x="25" y="0" width="5" height="5" fill="#d5d8de"/><rect x="30" y="0" width="5" height="5" fill="#c8c8cd"/><rect x="35" y="0" width="5" height="5" fill="#e9e9eb"/><rect x="40" y="0" width="5" height="5" fill="#dfe1e6"/><rect x="45" y="0" width="5" height="5" fill="#dad8d8"/><rect x="50" y="0" width="5" height="5" fill="#e1e1e3"/><rect x="55" y="0" width="5" height="5" fill="#d2d2d6"/><rect x="60" y="0" width="5" height="5" fill="#e5e5e8"/><rect x="65" y="0" width="5" height="5" fill="#d5d8de"/><rect x="70" y="0" width="5" height="5" fill="#e2e4e9"/><rect x="75" y="0" width="5" height="5" fill="#ebebec"/><rect x="80" y="0" width="5" height="5" fill="#e6e6e8"/><rect x="85" y="0" width="5" height="5" fill="#e2e2e5"/><rect x="90" y="0" width="5" height="5" fill="#e8e8ea"/><rect x="95" y="0" width="5" height="5" fill="#f0f0f1"/><rect x="100" y="0" width="5" height="5" fill="#e6e6e8"/><rect x="105" y="0" width="5" height="5" fill="#e0e0e3"/><rect x="110" y="0" width="5" height="5" fill="#e9e9eb"/><rect x="115" y="0" width="5" height="5" fill="#dddfe5"/><rect x="120" y="0" width="5" height="5" fill="#e6e5e6"/><rect x="125" y="0" width="5" height="5" fill="#e2e4e8"/><rect x="130" y="0" width="5" height="5" fill="#e6e6e8"/><rect x="135" y="0" width="5" height="5" fill="#e3e3e5"/><rect x="140" y="0" width="5" height="5" fill="#e8e7e7"/><rect x="145" y="0" width="5" height="5" fill="#ebecef"/><rect x="150" y="0" width="5" height="5" fill="#e3e3e6"/><rect x="155" y="0" width="5" height="5" fill="#bbbbc1"/><rect x="160" y="0" width="5" height="5" fill="#edeef0"/><rect x="165" y="0" width="5" height="5" fill="#e6e5e5"/><rect x="170" y="0" width="5" height="5" fill="#e3e5e9"/><rect x="175" y="0" width="5" height="5" fill="#ebebed"/><rect x="180" y="0" width="5" height="5" fill="#e3e2e3"/><rect x="185" y="0" width="5" height="5" fill="#edeced"/><rect x="0" y="5" width="5" height="5" fill="#d2d2d6"/><rect x="5" y="5" width="5" height="5" fill="#bfbcbb"/><rect x="10" y="5" width="5" height="5" fill="#cdcdd1"/><rect x="15" y="5" width="5" height="5" fill="#b2b2b9"/><rect x="20" y="5" width="5" height="5" fill="#c9c9cd"/><rect x="25" y="5" width="5" height="5" fill="#b4b9c5"/><rect x="30" y="5" width="5" height="5" fill="#bfbfc4"/><rect x="35" y="5" width="5" height="5" fill="#c7c4c4"/><rect x="40" y="5" width="5" height="5" fill="#c3c7d1"/><rect x="45" y="5" width="5" height="5" fill="#b3b3b9"/><rect x="50" y="5" width="5" height="5" fill="#c8c8cd"/><rect x="55" y="5" width="5" height="5" fill="#babac0"/><rect x="60" y="5" width="5" height="5" fill="#c5c5c9"/><rect x="65" y="5" width="5" height="5" fill="#b0b0b7"/><rect x="70" y="5" width="5" height="5" fill="#cbcbcf"/><rect x="75" y="5" width="5" height="5" fill="#c6cad4"/><rect x="80" y="5" width="5" height="5" fill="#afb5c2"/><rect x="85" y="5" width="5" height="5" fill="#c1c5cf"/><rect x="90" y="5" width="5" height="5" fill="#ced1d9"/><rect x="95" y="5" width="5" height="5" fill="#d2d2d6"/><rect x="100" y="5" width="5" height="5" fill="#ccccd0"/><rect x="105" y="5" width="5" height="5" fill="#c1bebc"/><rect x="110" y="5" width="5" height="5" fill="#d0cdcc"/><rect x="115" y="5" width="5" height="5" fill="#cbcbcf"/><rect x="120" y="5" width="5" height="5" fill="#b4b0ae"/><rect x="125" y="5" width="5" height="5" fill="#d5d3d1"/><rect x="130" y="5" width="5" height="5" fill="#cacace"/><rect x="135" y="5" width="5" height="5" fill="#babfca"/><rect x="140" y="5" width="5" height="5" fill="#c4c4c9"/><rect x="145" y="5" width="5" height="5" fill="#bdbdc3"/><rect x="150" y="5" width="5" height="5" fill="#d0d0d4"/><rect x="155" y="5" width="5" height="5" fill="#b7b7bd"/><rect x="160" y="5" width="5" height="5" fill="#eeeeef"/><rect x="165" y="5" width="5" height="5" fill="#c9c9ce"/><rect x="170" y="5" width="5" height="5" fill="#c7cbd4"/><rect x="175" y="5" width="5" height="5" fill="#afb5c2"/><rect x="180" y="5" width="5" height="5" fill="#ceced2"/><rect x="185" y="5" width="5" height="5" fill="#d4d4d7"/><rect x="0" y="10" width="5" height="5" fill="#e6e7eb"/><rect x="5" y="10" width="5" height="5" fill="#e5e5e7"/><rect x="10" y="10" width="5" height="5" fill="#e7e7e9"/><rect x="15" y="10" width="5" height="5" fill="#e1e3e7"/><rect x="20" y="10" width="5" height="5" fill="#edeef0"/><rect x="25" y="10" width="5" height="5" fill="#dddde0"/><rect x="30" y="10" width="5" height="5" fill="#dee0e5"/><rect x="35" y="10" width="5" height="5" fill="#e7e8ec"/><rect x="40" y="10" width="5" height="5" fill="#c5c5ca"/><rect x="45" y="10" width="5" height="5" fill="#e9e9eb"/><rect x="50" y="10" width="5" height="5" fill="#e9e8e7"/><rect x="55" y="10" width="5" height="5" fill="#e3e2e2"/><rect x="60" y="10" width="5" height="5" fill="#e5e5e7"/><rect x="65" y="10" width="5" height="5" fill="#e5e5e7"/><rect x="70" y="10" width="5" height="5" fill="#e4e4e6"/><rect x="75" y="10" width="5" height="5" fill="#eaebed"/><rect x="80" y="10" width="5" height="5" fill="#e6e6e8"/><rect x="85" y="10" width="5" height="5" fill="#d6d6da"/><rect x="90" y="10" width="5" height="5" fill="#e9e9ea"/><rect x="95" y="10" width="5" height="5" fill="#e9e9ea"/><rect x="100" y="10" width="5" height="5" fill="#e6e7eb"/><rect x="105" y="10" width="5" height="5" fill="#ecebeb"/><rect x="110" y="10" width="5" height="5" fill="#ededee"/><rect x="115" y="10" width="5" height="5" fill="#eeedee"/><rect x="120" y="10" width="5" height="5" fill="#eae9e9"/><rect x="125" y="10" width="5" height="5" fill="#e1e3e8"/><rect x="130" y="10" width="5" height="5" fill="#eeeef0"/><rect x="135" y="10" width="5" height="5" fill="#e3e3e5"/><rect x="140" y="10" width="5" height="5" fill="#e5e5e7"/><rect x="145" y="10" width="5" height="5" fill="#ececed"/><rect x="150" y="10" width="5" height="5" fill="#e7e7e9"/><rect x="155" y="10" width="5" height="5" fill="#e9e9eb"/><rect x="160" y="10" width="5" height="5" fill="#e9e8e8"/><rect x="165" y="10" width="5" height="5" fill="#e5e4e5"/><rect x="170" y="10" width="5" height="5" fill="#e3e5e9"/><rect x="175" y="10" width="5" height="5" fill="#ececee"/><rect x="180" y="10" width="5" height="5" fill="#edeef1"/><rect x="185" y="10" width="5" height="5" fill="#eeeef0"/></svg>
<svg class="mz" style="left:427px;top:348px" width="90" height="15"><rect x="0" y="0" width="5" height="5" fill="#c1c5ce"/><rect x="5" y="0" width="5" height="5" fill="#e3e2e3"/><rect x="10" y="0" width="5" height="5" fill="#ccc9c9"/><rect x="15" y="0" width="5" height="5" fill="#ededef"/><rect x="20" y="0" width="5" height="5" fill="#bec2cc"/><rect x="25" y="0" width="5" height="5" fill="#cfcfd3"/><rect x="30" y="0" width="5" height="5" fill="#e4e3e3"/><rect x="35" y="0" width="5" height="5" fill="#ebecef"/><rect x="40" y="0" width="5" height="5" fill="#e3e2e3"/><rect x="45" y="0" width="5" height="5" fill="#e3e5e9"/><rect x="50" y="0" width="5" height="5" fill="#ededee"/><rect x="55" y="0" width="5" height="5" fill="#c9c9cd"/><rect x="60" y="0" width="5" height="5" fill="#e0e0e2"/><rect x="65" y="0" width="5" height="5" fill="#dee0e5"/><rect x="70" y="0" width="5" height="5" fill="#eae9e9"/><rect x="75" y="0" width="5" height="5" fill="#e7e7e9"/><rect x="80" y="0" width="5" height="5" fill="#eeeded"/><rect x="85" y="0" width="5" height="5" fill="#ededee"/><rect x="0" y="5" width="5" height="5" fill="#cbcbd0"/><rect x="5" y="5" width="5" height="5" fill="#b9b9be"/><rect x="10" y="5" width="5" height="5" fill="#c2c2c7"/><rect x="15" y="5" width="5" height="5" fill="#c0bdbc"/><rect x="20" y="5" width="5" height="5" fill="#b7bcc7"/><rect x="25" y="5" width="5" height="5" fill="#dedee1"/><rect x="30" y="5" width="5" height="5" fill="#c6c6cb"/><rect x="35" y="5" width="5" height="5" fill="#a5a5ad"/><rect x="40" y="5" width="5" height="5" fill="#c3c3c8"/><rect x="45" y="5" width="5" height="5" fill="#bbbbc1"/><rect x="50" y="5" width="5" height="5" fill="#c6cad3"/><rect x="55" y="5" width="5" height="5" fill="#cbced6"/><rect x="60" y="5" width="5" height="5" fill="#dcdcde"/><rect x="65" y="5" width="5" height="5" fill="#c4c8d1"/><rect x="70" y="5" width="5" height="5" fill="#b2b2b8"/><rect x="75" y="5" width="5" height="5" fill="#d0cdcc"/><rect x="80" y="5" width="5" height="5" fill="#c1c1c6"/><rect x="85" y="5" width="5" height="5" fill="#e0e0e2"/><rect x="0" y="10" width="5" height="5" fill="#eeeeef"/><rect x="5" y="10" width="5" height="5" fill="#ededee"/><rect x="10" y="10" width="5" height="5" fill="#e4e6ea"/><rect x="15" y="10" width="5" height="5" fill="#d4d7de"/><rect x="20" y="10" width="5" height="5" fill="#ecedef"/><rect x="25" y="10" width="5" height="5" fill="#f5f5f5"/><rect x="30" y="10" width="5" height="5" fill="#e0e2e6"/><rect x="35" y="10" width="5" height="5" fill="#d9d9dc"/><rect x="40" y="10" width="5" height="5" fill="#c0c0c5"/><rect x="45" y="10" width="5" height="5" fill="#e5e5e7"/><rect x="50" y="10" width="5" height="5" fill="#f0efef"/><rect x="55" y="10" width="5" height="5" fill="#e6e5e5"/><rect x="60" y="10" width="5" height="5" fill="#ebeaea"/><rect x="65" y="10" width="5" height="5" fill="#dfe1e5"/><rect x="70" y="10" width="5" height="5" fill="#d5d3d3"/><rect x="75" y="10" width="5" height="5" fill="#e8e8e9"/><rect x="80" y="10" width="5" height="5" fill="#d4d2d1"/><rect x="85" y="10" width="5" height="5" fill="#f5f5f5"/></svg>
<svg class="mz" style="left:51px;top:391px" width="130" height="15"><rect x="0" y="0" width="5" height="5" fill="#dedee2"/><rect x="5" y="0" width="5" height="5" fill="#d1cfd1"/><rect x="10" y="0" width="5" height="5" fill="#cdcdd2"/><rect x="15" y="0" width="5" height="5" fill="#cdcbcc"/><rect x="20" y="0" width="5" height="5" fill="#c4c4ca"/><rect x="25" y="0" width="5" height="5" fill="#d6d6db"/><rect x="30" y="0" width="5" height="5" fill="#bfc3ce"/><rect x="35" y="0" width="5" height="5" fill="#c8cbd4"/><rect x="40" y="0" width="5" height="5" fill="#c9c9cf"/><rect x="45" y="0" width="5" height="5" fill="#cacacf"/><rect x="50" y="0" width="5" height="5" fill="#c8c8ce"/><rect x="55" y="0" width="5" height="5" fill="#e7e6e9"/><rect x="60" y="0" width="5" height="5" fill="#eaebef"/><rect x="65" y="0" width="5" height="5" fill="#b8bdca"/><rect x="70" y="0" width="5" height="5" fill="#e2e3e9"/><rect x="75" y="0" width="5" height="5" fill="#c4c4ca"/><rect x="80" y="0" width="5" height="5" fill="#d6d6db"/><rect x="85" y="0" width="5" height="5" fill="#dedcdd"/><rect x="90" y="0" width="5" height="5" fill="#e3e2e5"/><rect x="95" y="0" width="5" height="5" fill="#d5d3d4"/><rect x="100" y="0" width="5" height="5" fill="#bfc3ce"/><rect x="105" y="0" width="5" height="5" fill="#ebebef"/><rect x="110" y="0" width="5" height="5" fill="#bdc1cc"/><rect x="115" y="0" width="5" height="5" fill="#cbced8"/><rect x="120" y="0" width="5" height="5" fill="#d9d9dd"/><rect x="125" y="0" width="5" height="5" fill="#ccccd1"/><rect x="0" y="5" width="5" height="5" fill="#c7c7cd"/><rect x="5" y="5" width="5" height="5" fill="#b0b0b8"/><rect x="10" y="5" width="5" height="5" fill="#d8d8dd"/><rect x="15" y="5" width="5" height="5" fill="#d6d6db"/><rect x="20" y="5" width="5" height="5" fill="#c1c1c7"/><rect x="25" y="5" width="5" height="5" fill="#d0d0d5"/><rect x="30" y="5" width="5" height="5" fill="#cecccd"/><rect x="35" y="5" width="5" height="5" fill="#d1cfd1"/><rect x="40" y="5" width="5" height="5" fill="#c8c5c7"/><rect x="45" y="5" width="5" height="5" fill="#d7d5d7"/><rect x="50" y="5" width="5" height="5" fill="#ccccd1"/><rect x="55" y="5" width="5" height="5" fill="#cfcfd4"/><rect x="60" y="5" width="5" height="5" fill="#ececf0"/><rect x="65" y="5" width="5" height="5" fill="#b8b4b5"/><rect x="70" y="5" width="5" height="5" fill="#e4e4e9"/><rect x="75" y="5" width="5" height="5" fill="#c1c1c8"/><rect x="80" y="5" width="5" height="5" fill="#cdcdd3"/><rect x="85" y="5" width="5" height="5" fill="#dbdbdf"/><rect x="90" y="5" width="5" height="5" fill="#eeeef2"/><rect x="95" y="5" width="5" height="5" fill="#d1cfd1"/><rect x="100" y="5" width="5" height="5" fill="#cecccd"/><rect x="105" y="5" width="5" height="5" fill="#e5e5e9"/><rect x="110" y="5" width="5" height="5" fill="#bdbaba"/><rect x="115" y="5" width="5" height="5" fill="#b8bdc9"/><rect x="120" y="5" width="5" height="5" fill="#b8b8bf"/><rect x="125" y="5" width="5" height="5" fill="#d3d1d2"/><rect x="0" y="10" width="5" height="5" fill="#eeeef2"/><rect x="5" y="10" width="5" height="5" fill="#e3e3e7"/><rect x="10" y="10" width="5" height="5" fill="#dfdfe3"/><rect x="15" y="10" width="5" height="5" fill="#dadce3"/><rect x="20" y="10" width="5" height="5" fill="#dcdce1"/><rect x="25" y="10" width="5" height="5" fill="#e7e7eb"/><rect x="30" y="10" width="5" height="5" fill="#d0d3db"/><rect x="35" y="10" width="5" height="5" fill="#e2e1e3"/><rect x="40" y="10" width="5" height="5" fill="#e0e0e4"/><rect x="45" y="10" width="5" height="5" fill="#d8d8dd"/><rect x="50" y="10" width="5" height="5" fill="#dfdfe3"/><rect x="55" y="10" width="5" height="5" fill="#dddde1"/><rect x="60" y="10" width="5" height="5" fill="#ededf2"/><rect x="65" y="10" width="5" height="5" fill="#dedee2"/><rect x="70" y="10" width="5" height="5" fill="#e7e7eb"/><rect x="75" y="10" width="5" height="5" fill="#dddde1"/><rect x="80" y="10" width="5" height="5" fill="#dfdfe3"/><rect x="85" y="10" width="5" height="5" fill="#dedcdd"/><rect x="90" y="10" width="5" height="5" fill="#e1e1e5"/><rect x="95" y="10" width="5" height="5" fill="#dbd9db"/><rect x="100" y="10" width="5" height="5" fill="#d0d3db"/><rect x="105" y="10" width="5" height="5" fill="#e6e7ec"/><rect x="110" y="10" width="5" height="5" fill="#ededf0"/><rect x="115" y="10" width="5" height="5" fill="#e2e2e6"/><rect x="120" y="10" width="5" height="5" fill="#e7e7eb"/><rect x="125" y="10" width="5" height="5" fill="#e7e8ed"/></svg>
<svg class="mz" style="left:207px;top:391px" width="195" height="15"><rect x="0" y="0" width="5" height="5" fill="#e8e8ec"/><rect x="5" y="0" width="5" height="5" fill="#e2e3ea"/><rect x="10" y="0" width="5" height="5" fill="#e0e1e7"/><rect x="15" y="0" width="5" height="5" fill="#e0dfe2"/><rect x="20" y="0" width="5" height="5" fill="#e0e1e7"/><rect x="25" y="0" width="5" height="5" fill="#d8d8dd"/><rect x="30" y="0" width="5" height="5" fill="#c0c4cf"/><rect x="35" y="0" width="5" height="5" fill="#dfdfe3"/><rect x="40" y="0" width="5" height="5" fill="#dbdbe0"/><rect x="45" y="0" width="5" height="5" fill="#d3d3d8"/><rect x="50" y="0" width="5" height="5" fill="#dddde2"/><rect x="55" y="0" width="5" height="5" fill="#cecccd"/><rect x="60" y="0" width="5" height="5" fill="#e3e4ea"/><rect x="65" y="0" width="5" height="5" fill="#dcdce1"/><rect x="70" y="0" width="5" height="5" fill="#d4d4d9"/><rect x="75" y="0" width="5" height="5" fill="#e4e4e9"/><rect x="80" y="0" width="5" height="5" fill="#dddde2"/><rect x="85" y="0" width="5" height="5" fill="#e0e0e4"/><rect x="90" y="0" width="5" height="5" fill="#d8dae2"/><rect x="95" y="0" width="5" height="5" fill="#eeeef2"/><rect x="100" y="0" width="5" height="5" fill="#dddfe5"/><rect x="105" y="0" width="5" height="5" fill="#e3e3e7"/><rect x="110" y="0" width="5" height="5" fill="#e4e3e6"/><rect x="115" y="0" width="5" height="5" fill="#d9dbe2"/><rect x="120" y="0" width="5" height="5" fill="#dedee3"/><rect x="125" y="0" width="5" height="5" fill="#dfdee0"/><rect x="130" y="0" width="5" height="5" fill="#e2e2e6"/><rect x="135" y="0" width="5" height="5" fill="#dfdfe3"/><rect x="140" y="0" width="5" height="5" fill="#dfdfe4"/><rect x="145" y="0" width="5" height="5" fill="#dcdce1"/><rect x="150" y="0" width="5" height="5" fill="#e4e4e9"/><rect x="155" y="0" width="5" height="5" fill="#d0d3dc"/><rect x="160" y="0" width="5" height="5" fill="#c1c1c7"/><rect x="165" y="0" width="5" height="5" fill="#edecf0"/><rect x="170" y="0" width="5" height="5" fill="#dcdee5"/><rect x="175" y="0" width="5" height="5" fill="#dcdee4"/><rect x="180" y="0" width="5" height="5" fill="#e6e6ea"/><rect x="185" y="0" width="5" height="5" fill="#dbdbe0"/><rect x="190" y="0" width="5" height="5" fill="#e7e7eb"/><rect x="0" y="5" width="5" height="5" fill="#cacdd7"/><rect x="5" y="5" width="5" height="5" fill="#b6b6bd"/><rect x="10" y="5" width="5" height="5" fill="#c9c9ce"/><rect x="15" y="5" width="5" height="5" fill="#b4b4bb"/><rect x="20" y="5" width="5" height="5" fill="#bcbcc3"/><rect x="25" y="5" width="5" height="5" fill="#bbbbc2"/><rect x="30" y="5" width="5" height="5" fill="#bbbbc2"/><rect x="35" y="5" width="5" height="5" fill="#c7cad4"/><rect x="40" y="5" width="5" height="5" fill="#b3b8c4"/><rect x="45" y="5" width="5" height="5" fill="#b5b5bc"/><rect x="50" y="5" width="5" height="5" fill="#c7c4c5"/><rect x="55" y="5" width="5" height="5" fill="#c3c3c9"/><rect x="60" y="5" width="5" height="5" fill="#abb1bf"/><rect x="65" y="5" width="5" height="5" fill="#bfbcbb"/><rect x="70" y="5" width="5" height="5" fill="#bbb8b8"/><rect x="75" y="5" width="5" height="5" fill="#cccfd8"/><rect x="80" y="5" width="5" height="5" fill="#bdc1cc"/><rect x="85" y="5" width="5" height="5" fill="#c8c5c6"/><rect x="90" y="5" width="5" height="5" fill="#b3b8c5"/><rect x="95" y="5" width="5" height="5" fill="#dcdee5"/><rect x="100" y="5" width="5" height="5" fill="#ccc9ca"/><rect x="105" y="5" width="5" height="5" fill="#b0b0b7"/><rect x="110" y="5" width="5" height="5" fill="#ccccd2"/><rect x="115" y="5" width="5" height="5" fill="#b6b6bd"/><rect x="120" y="5" width="5" height="5" fill="#bcc0cb"/><rect x="125" y="5" width="5" height="5" fill="#b0b0b7"/><rect x="130" y="5" width="5" height="5" fill="#d7d9e1"/><rect x="135" y="5" width="5" height="5" fill="#b2b2b9"/><rect x="140" y="5" width="5" height="5" fill="#c8c8ce"/><rect x="145" y="5" width="5" height="5" fill="#c4c1c0"/><rect x="150" y="5" width="5" height="5" fill="#c6c6cc"/><rect x="155" y="5" width="5" height="5" fill="#b7b7be"/><rect x="160" y="5" width="5" height="5" fill="#c4c4ca"/><rect x="165" y="5" width="5" height="5" fill="#e4e3e5"/><rect x="170" y="5" width="5" height="5" fill="#cdcbcb"/><rect x="175" y="5" width="5" height="5" fill="#c8c5c6"/><rect x="180" y="5" width="5" height="5" fill="#bdbaba"/><rect x="185" y="5" width="5" height="5" fill="#cacad0"/><rect x="190" y="5" width="5" height="5" fill="#ceced4"/><rect x="0" y="10" width="5" height="5" fill="#e2e2e6"/><rect x="5" y="10" width="5" height="5" fill="#e0e0e5"/><rect x="10" y="10" width="5" height="5" fill="#e0e0e5"/><rect x="15" y="10" width="5" height="5" fill="#dbdde4"/><rect x="20" y="10" width="5" height="5" fill="#e8e7ea"/><rect x="25" y="10" width="5" height="5" fill="#dbdbe0"/><rect x="30" y="10" width="5" height="5" fill="#d7d7dc"/><rect x="35" y="10" width="5" height="5" fill="#ececef"/><rect x="40" y="10" width="5" height="5" fill="#b4b9c6"/><rect x="45" y="10" width="5" height="5" fill="#e5e5e9"/><rect x="50" y="10" width="5" height="5" fill="#dedee2"/><rect x="55" y="10" width="5" height="5" fill="#dfdee1"/><rect x="60" y="10" width="5" height="5" fill="#e0e1e7"/><rect x="65" y="10" width="5" height="5" fill="#dbdde4"/><rect x="70" y="10" width="5" height="5" fill="#e2e2e6"/><rect x="75" y="10" width="5" height="5" fill="#e4e4e8"/><rect x="80" y="10" width="5" height="5" fill="#dedee2"/><rect x="85" y="10" width="5" height="5" fill="#e6e6ea"/><rect x="90" y="10" width="5" height="5" fill="#c4c8d2"/><rect x="95" y="10" width="5" height="5" fill="#e6e7ec"/><rect x="100" y="10" width="5" height="5" fill="#dddfe5"/><rect x="105" y="10" width="5" height="5" fill="#e6e6ea"/><rect x="110" y="10" width="5" height="5" fill="#e9e8eb"/><rect x="115" y="10" width="5" height="5" fill="#e4e4e8"/><rect x="120" y="10" width="5" height="5" fill="#e7e6e9"/><rect x="125" y="10" width="5" height="5" fill="#e5e4e6"/><rect x="130" y="10" width="5" height="5" fill="#e2e2e6"/><rect x="135" y="10" width="5" height="5" fill="#e6e7ec"/><rect x="140" y="10" width="5" height="5" fill="#e0e0e4"/><rect x="145" y="10" width="5" height="5" fill="#dbdbe0"/><rect x="150" y="10" width="5" height="5" fill="#e3e4ea"/><rect x="155" y="10" width="5" height="5" fill="#e2e2e6"/><rect x="160" y="10" width="5" height="5" fill="#e5e4e6"/><rect x="165" y="10" width="5" height="5" fill="#e5e5e9"/><rect x="170" y="10" width="5" height="5" fill="#dedee2"/><rect x="175" y="10" width="5" height="5" fill="#dcdee5"/><rect x="180" y="10" width="5" height="5" fill="#e7e7eb"/><rect x="185" y="10" width="5" height="5" fill="#e9e8eb"/><rect x="190" y="10" width="5" height="5" fill="#e8e8ec"/></svg>
<svg class="mz" style="left:427px;top:391px" width="110" height="15"><rect x="0" y="0" width="5" height="5" fill="#cfcfd5"/><rect x="5" y="0" width="5" height="5" fill="#ceced3"/><rect x="10" y="0" width="5" height="5" fill="#bebec5"/><rect x="15" y="0" width="5" height="5" fill="#d7d9e1"/><rect x="20" y="0" width="5" height="5" fill="#c8c8ce"/><rect x="25" y="0" width="5" height="5" fill="#d1d1d6"/><rect x="30" y="0" width="5" height="5" fill="#cbc8c9"/><rect x="35" y="0" width="5" height="5" fill="#e7e7eb"/><rect x="40" y="0" width="5" height="5" fill="#c0c0c7"/><rect x="45" y="0" width="5" height="5" fill="#cdcbcb"/><rect x="50" y="0" width="5" height="5" fill="#c9c9cf"/><rect x="55" y="0" width="5" height="5" fill="#c9c6c8"/><rect x="60" y="0" width="5" height="5" fill="#cfcfd5"/><rect x="65" y="0" width="5" height="5" fill="#cfd2da"/><rect x="70" y="0" width="5" height="5" fill="#d7d7dc"/><rect x="75" y="0" width="5" height="5" fill="#d0d0d5"/><rect x="80" y="0" width="5" height="5" fill="#d5d3d4"/><rect x="85" y="0" width="5" height="5" fill="#e2e1e3"/><rect x="90" y="0" width="5" height="5" fill="#e1e2e8"/><rect x="95" y="0" width="5" height="5" fill="#dfdfe4"/><rect x="100" y="0" width="5" height="5" fill="#e7e7eb"/><rect x="105" y="0" width="5" height="5" fill="#e7e7eb"/><rect x="0" y="5" width="5" height="5" fill="#dddde2"/><rect x="5" y="5" width="5" height="5" fill="#dedddf"/><rect x="10" y="5" width="5" height="5" fill="#bdbaba"/><rect x="15" y="5" width="5" height="5" fill="#e1e0e3"/><rect x="20" y="5" width="5" height="5" fill="#c7c7cd"/><rect x="25" y="5" width="5" height="5" fill="#cacdd7"/><rect x="30" y="5" width="5" height="5" fill="#d5d3d6"/><rect x="35" y="5" width="5" height="5" fill="#cdcdd3"/><rect x="40" y="5" width="5" height="5" fill="#cac7c8"/><rect x="45" y="5" width="5" height="5" fill="#c5c2c4"/><rect x="50" y="5" width="5" height="5" fill="#c2c2c8"/><rect x="55" y="5" width="5" height="5" fill="#bcc0cc"/><rect x="60" y="5" width="5" height="5" fill="#cbcbd1"/><rect x="65" y="5" width="5" height="5" fill="#d0cecf"/><rect x="70" y="5" width="5" height="5" fill="#cdcdd3"/><rect x="75" y="5" width="5" height="5" fill="#c3c7d2"/><rect x="80" y="5" width="5" height="5" fill="#e6e5e8"/><rect x="85" y="5" width="5" height="5" fill="#cccacb"/><rect x="90" y="5" width="5" height="5" fill="#a2a8b8"/><rect x="95" y="5" width="5" height="5" fill="#c1c5d0"/><rect x="100" y="5" width="5" height="5" fill="#c7c7cd"/><rect x="105" y="5" width="5" height="5" fill="#d9d7d9"/><rect x="0" y="10" width="5" height="5" fill="#ecebef"/><rect x="5" y="10" width="5" height="5" fill="#eaebef"/><rect x="10" y="10" width="5" height="5" fill="#d3d3d9"/><rect x="15" y="10" width="5" height="5" fill="#e1e0e3"/><rect x="20" y="10" width="5" height="5" fill="#d5d7df"/><rect x="25" y="10" width="5" height="5" fill="#eaebf0"/><rect x="30" y="10" width="5" height="5" fill="#e9e9ed"/><rect x="35" y="10" width="5" height="5" fill="#eeeef2"/><rect x="40" y="10" width="5" height="5" fill="#dbdde4"/><rect x="45" y="10" width="5" height="5" fill="#e5e4e6"/><rect x="50" y="10" width="5" height="5" fill="#e6e6ea"/><rect x="55" y="10" width="5" height="5" fill="#dadce3"/><rect x="60" y="10" width="5" height="5" fill="#e3e4ea"/><rect x="65" y="10" width="5" height="5" fill="#e7e7eb"/><rect x="70" y="10" width="5" height="5" fill="#d7d7dc"/><rect x="75" y="10" width="5" height="5" fill="#e8e8ec"/><rect x="80" y="10" width="5" height="5" fill="#d8dae2"/><rect x="85" y="10" width="5" height="5" fill="#e1e1e6"/><rect x="90" y="10" width="5" height="5" fill="#ceced4"/><rect x="95" y="10" width="5" height="5" fill="#dddfe5"/><rect x="100" y="10" width="5" height="5" fill="#ceced3"/><rect x="105" y="10" width="5" height="5" fill="#eeeef2"/></svg>
<svg class="mz" style="left:51px;top:434px" width="130" height="15"><rect x="0" y="0" width="5" height="5" fill="#e5e4e4"/><rect x="5" y="0" width="5" height="5" fill="#d2d2d5"/><rect x="10" y="0" width="5" height="5" fill="#d1d1d5"/><rect x="15" y="0" width="5" height="5" fill="#d2d0cf"/><rect x="20" y="0" width="5" height="5" fill="#c7c7cc"/><rect x="25" y="0" width="5" height="5" fill="#d9dbe1"/><rect x="30" y="0" width="5" height="5" fill="#c3c7d0"/><rect x="35" y="0" width="5" height="5" fill="#cfcfd3"/><rect x="40" y="0" width="5" height="5" fill="#ceced2"/><rect x="45" y="0" width="5" height="5" fill="#cbced6"/><rect x="50" y="0" width="5" height="5" fill="#ccccd0"/><rect x="55" y="0" width="5" height="5" fill="#ececee"/><rect x="60" y="0" width="5" height="5" fill="#f1f1f2"/><rect x="65" y="0" width="5" height="5" fill="#c1c1c6"/><rect x="70" y="0" width="5" height="5" fill="#e9e9eb"/><rect x="75" y="0" width="5" height="5" fill="#cccfd7"/><rect x="80" y="0" width="5" height="5" fill="#d2d0cf"/><rect x="85" y="0" width="5" height="5" fill="#d2d2d5"/><rect x="90" y="0" width="5" height="5" fill="#dfe1e5"/><rect x="95" y="0" width="5" height="5" fill="#ccccd0"/><rect x="100" y="0" width="5" height="5" fill="#c3c3c8"/><rect x="105" y="0" width="5" height="5" fill="#f1f0f1"/><rect x="110" y="0" width="5" height="5" fill="#c1c5ce"/><rect x="115" y="0" width="5" height="5" fill="#d3d3d6"/><rect x="120" y="0" width="5" height="5" fill="#e1dfde"/><rect x="125" y="0" width="5" height="5" fill="#d0d0d4"/><rect x="0" y="5" width="5" height="5" fill="#c7cbd4"/><rect x="5" y="5" width="5" height="5" fill="#bab6b5"/><rect x="10" y="5" width="5" height="5" fill="#dedee0"/><rect x="15" y="5" width="5" height="5" fill="#dedcdc"/><rect x="20" y="5" width="5" height="5" fill="#cac7c6"/><rect x="25" y="5" width="5" height="5" fill="#d8d6d6"/><rect x="30" y="5" width="5" height="5" fill="#ceced2"/><rect x="35" y="5" width="5" height="5" fill="#d2d2d5"/><rect x="40" y="5" width="5" height="5" fill="#c7c7cc"/><rect x="45" y="5" width="5" height="5" fill="#dcdada"/><rect x="50" y="5" width="5" height="5" fill="#d0d0d4"/><rect x="55" y="5" width="5" height="5" fill="#d3d3d7"/><rect x="60" y="5" width="5" height="5" fill="#f3f3f4"/><rect x="65" y="5" width="5" height="5" fill="#bbb7b6"/><rect x="70" y="5" width="5" height="5" fill="#e9e9eb"/><rect x="75" y="5" width="5" height="5" fill="#b5b5bb"/><rect x="80" y="5" width="5" height="5" fill="#b9beca"/><rect x="85" y="5" width="5" height="5" fill="#d1cfce"/><rect x="90" y="5" width="5" height="5" fill="#e6e7eb"/><rect x="95" y="5" width="5" height="5" fill="#c4c1bf"/><rect x="100" y="5" width="5" height="5" fill="#cbc8c7"/><rect x="105" y="5" width="5" height="5" fill="#e0e0e3"/><rect x="110" y="5" width="5" height="5" fill="#babac0"/><rect x="115" y="5" width="5" height="5" fill="#c0c0c5"/><rect x="120" y="5" width="5" height="5" fill="#b6bbc7"/><rect x="125" y="5" width="5" height="5" fill="#d0d3db"/><rect x="0" y="10" width="5" height="5" fill="#f5f4f5"/><rect x="5" y="10" width="5" height="5" fill="#e8e9ed"/><rect x="10" y="10" width="5" height="5" fill="#e7e6e6"/><rect x="15" y="10" width="5" height="5" fill="#e4e3e3"/><rect x="20" y="10" width="5" height="5" fill="#e2e2e4"/><rect x="25" y="10" width="5" height="5" fill="#ededee"/><rect x="30" y="10" width="5" height="5" fill="#d8d8db"/><rect x="35" y="10" width="5" height="5" fill="#e8e7e7"/><rect x="40" y="10" width="5" height="5" fill="#e3e5ea"/><rect x="45" y="10" width="5" height="5" fill="#dddde0"/><rect x="50" y="10" width="5" height="5" fill="#e4e4e7"/><rect x="55" y="10" width="5" height="5" fill="#e0e2e6"/><rect x="60" y="10" width="5" height="5" fill="#f5f4f5"/><rect x="65" y="10" width="5" height="5" fill="#e1e3e7"/><rect x="70" y="10" width="5" height="5" fill="#eeedee"/><rect x="75" y="10" width="5" height="5" fill="#eff0f2"/><rect x="80" y="10" width="5" height="5" fill="#e8e9ed"/><rect x="85" y="10" width="5" height="5" fill="#eae9e8"/><rect x="90" y="10" width="5" height="5" fill="#eaebed"/><rect x="95" y="10" width="5" height="5" fill="#e9e8e8"/><rect x="100" y="10" width="5" height="5" fill="#e5e4e5"/><rect x="105" y="10" width="5" height="5" fill="#efeff0"/><rect x="110" y="10" width="5" height="5" fill="#f3f3f4"/><rect x="115" y="10" width="5" height="5" fill="#e9e8e8"/><rect x="120" y="10" width="5" height="5" fill="#eeedee"/><rect x="125" y="10" width="5" height="5" fill="#eeeef0"/></svg>
<svg class="mz" style="left:207px;top:434px" width="195" height="15"><rect x="0" y="0" width="5" height="5" fill="#eeeeef"/><rect x="5" y="0" width="5" height="5" fill="#e8e9ed"/><rect x="10" y="0" width="5" height="5" fill="#e6e6e8"/><rect x="15" y="0" width="5" height="5" fill="#e2e4e8"/><rect x="20" y="0" width="5" height="5" fill="#e7e7e9"/><rect x="25" y="0" width="5" height="5" fill="#dddde0"/><rect x="30" y="0" width="5" height="5" fill="#c7c7cc"/><rect x="35" y="0" width="5" height="5" fill="#e4e4e7"/><rect x="40" y="0" width="5" height="5" fill="#e1e1e3"/><rect x="45" y="0" width="5" height="5" fill="#d8d8db"/><rect x="50" y="0" width="5" height="5" fill="#e3e3e5"/><rect x="55" y="0" width="5" height="5" fill="#ceced2"/><rect x="60" y="0" width="5" height="5" fill="#eaeaeb"/><rect x="65" y="0" width="5" height="5" fill="#e2e2e4"/><rect x="70" y="0" width="5" height="5" fill="#d9d9dc"/><rect x="75" y="0" width="5" height="5" fill="#e9eaed"/><rect x="80" y="0" width="5" height="5" fill="#e1e3e7"/><rect x="85" y="0" width="5" height="5" fill="#e5e5e7"/><rect x="90" y="0" width="5" height="5" fill="#dfdfe2"/><rect x="95" y="0" width="5" height="5" fill="#f4f4f5"/><rect x="100" y="0" width="5" height="5" fill="#e4e4e6"/><rect x="105" y="0" width="5" height="5" fill="#e8e9ec"/><rect x="110" y="0" width="5" height="5" fill="#eae9e9"/><rect x="115" y="0" width="5" height="5" fill="#e1e1e3"/><rect x="120" y="0" width="5" height="5" fill="#e4e4e6"/><rect x="125" y="0" width="5" height="5" fill="#e4e3e3"/><rect x="130" y="0" width="5" height="5" fill="#e7e8ec"/><rect x="135" y="0" width="5" height="5" fill="#e6e5e5"/><rect x="140" y="0" width="5" height="5" fill="#e5e5e7"/><rect x="145" y="0" width="5" height="5" fill="#e2e2e4"/><rect x="150" y="0" width="5" height="5" fill="#eaeaec"/><rect x="155" y="0" width="5" height="5" fill="#d5d8de"/><rect x="160" y="0" width="5" height="5" fill="#c4c4c9"/><rect x="165" y="0" width="5" height="5" fill="#f3f3f4"/><rect x="170" y="0" width="5" height="5" fill="#e3e3e6"/><rect x="175" y="0" width="5" height="5" fill="#e5e4e4"/><rect x="180" y="0" width="5" height="5" fill="#ececed"/><rect x="185" y="0" width="5" height="5" fill="#e1e1e3"/><rect x="190" y="0" width="5" height="5" fill="#ececee"/><rect x="0" y="5" width="5" height="5" fill="#cfd2d9"/><rect x="5" y="5" width="5" height="5" fill="#b9b9bf"/><rect x="10" y="5" width="5" height="5" fill="#cdcdd1"/><rect x="15" y="5" width="5" height="5" fill="#b2b7c4"/><rect x="20" y="5" width="5" height="5" fill="#bfbfc4"/><rect x="25" y="5" width="5" height="5" fill="#bfbfc4"/><rect x="30" y="5" width="5" height="5" fill="#b9bec9"/><rect x="35" y="5" width="5" height="5" fill="#d2d0cf"/><rect x="40" y="5" width="5" height="5" fill="#bbbbc0"/><rect x="45" y="5" width="5" height="5" fill="#bebbb9"/><rect x="50" y="5" width="5" height="5" fill="#c6c6ca"/><rect x="55" y="5" width="5" height="5" fill="#c3c7d0"/><rect x="60" y="5" width="5" height="5" fill="#b3b3b9"/><rect x="65" y="5" width="5" height="5" fill="#c2bfbd"/><rect x="70" y="5" width="5" height="5" fill="#bebbb9"/><rect x="75" y="5" width="5" height="5" fill="#d7d5d5"/><rect x="80" y="5" width="5" height="5" fill="#cac7c6"/><rect x="85" y="5" width="5" height="5" fill="#c3c7d0"/><rect x="90" y="5" width="5" height="5" fill="#b6bbc6"/><rect x="95" y="5" width="5" height="5" fill="#e6e5e5"/><rect x="100" y="5" width="5" height="5" fill="#cbcbcf"/><rect x="105" y="5" width="5" height="5" fill="#b2b2b9"/><rect x="110" y="5" width="5" height="5" fill="#d4d2d1"/><rect x="115" y="5" width="5" height="5" fill="#b9b9bf"/><rect x="120" y="5" width="5" height="5" fill="#c9c6c5"/><rect x="125" y="5" width="5" height="5" fill="#b2b2b8"/><rect x="130" y="5" width="5" height="5" fill="#dfdfe1"/><rect x="135" y="5" width="5" height="5" fill="#b5b5bb"/><rect x="140" y="5" width="5" height="5" fill="#ccccd0"/><rect x="145" y="5" width="5" height="5" fill="#c7c4c2"/><rect x="150" y="5" width="5" height="5" fill="#cbcbcf"/><rect x="155" y="5" width="5" height="5" fill="#b5bac6"/><rect x="160" y="5" width="5" height="5" fill="#cdcac9"/><rect x="165" y="5" width="5" height="5" fill="#e9e8e8"/><rect x="170" y="5" width="5" height="5" fill="#cdcdd1"/><rect x="175" y="5" width="5" height="5" fill="#c6c6cb"/><rect x="180" y="5" width="5" height="5" fill="#b6bbc6"/><rect x="185" y="5" width="5" height="5" fill="#ceced2"/><rect x="190" y="5" width="5" height="5" fill="#d7d5d4"/><rect x="0" y="10" width="5" height="5" fill="#e6e7eb"/><rect x="5" y="10" width="5" height="5" fill="#e4e6ea"/><rect x="10" y="10" width="5" height="5" fill="#e6e6e8"/><rect x="15" y="10" width="5" height="5" fill="#e3e3e5"/><rect x="20" y="10" width="5" height="5" fill="#eeeded"/><rect x="25" y="10" width="5" height="5" fill="#e0e0e3"/><rect x="30" y="10" width="5" height="5" fill="#dcdcdf"/><rect x="35" y="10" width="5" height="5" fill="#f2f2f3"/><rect x="40" y="10" width="5" height="5" fill="#bcbcc1"/><rect x="45" y="10" width="5" height="5" fill="#ecebeb"/><rect x="50" y="10" width="5" height="5" fill="#e3e3e5"/><rect x="55" y="10" width="5" height="5" fill="#e3e3e5"/><rect x="60" y="10" width="5" height="5" fill="#e6e7eb"/><rect x="65" y="10" width="5" height="5" fill="#e3e3e5"/><rect x="70" y="10" width="5" height="5" fill="#e7e8ec"/><rect x="75" y="10" width="5" height="5" fill="#ecebeb"/><rect x="80" y="10" width="5" height="5" fill="#e5e4e4"/><rect x="85" y="10" width="5" height="5" fill="#ebecee"/><rect x="90" y="10" width="5" height="5" fill="#cdcdd1"/><rect x="95" y="10" width="5" height="5" fill="#ededef"/><rect x="100" y="10" width="5" height="5" fill="#e2e4e8"/><rect x="105" y="10" width="5" height="5" fill="#ececee"/><rect x="110" y="10" width="5" height="5" fill="#edeef0"/><rect x="115" y="10" width="5" height="5" fill="#eaeaeb"/><rect x="120" y="10" width="5" height="5" fill="#edecec"/><rect x="125" y="10" width="5" height="5" fill="#e7e8ec"/><rect x="130" y="10" width="5" height="5" fill="#e6e7eb"/><rect x="135" y="10" width="5" height="5" fill="#eeeded"/><rect x="140" y="10" width="5" height="5" fill="#e5e5e7"/><rect x="145" y="10" width="5" height="5" fill="#e1e1e3"/><rect x="150" y="10" width="5" height="5" fill="#eaeaec"/><rect x="155" y="10" width="5" height="5" fill="#e7e8ec"/><rect x="160" y="10" width="5" height="5" fill="#ebeaea"/><rect x="165" y="10" width="5" height="5" fill="#eaebed"/><rect x="170" y="10" width="5" height="5" fill="#e3e3e5"/><rect x="175" y="10" width="5" height="5" fill="#e3e3e6"/><rect x="180" y="10" width="5" height="5" fill="#ededef"/><rect x="185" y="10" width="5" height="5" fill="#eeeeef"/><rect x="190" y="10" width="5" height="5" fill="#eeeeef"/></svg>
<svg class="mz" style="left:427px;top:434px" width="200" height="15"><rect x="0" y="0" width="5" height="5" fill="#ceced2"/><rect x="5" y="0" width="5" height="5" fill="#d2d2d5"/><rect x="10" y="0" width="5" height="5" fill="#e3e3e6"/><rect x="15" y="0" width="5" height="5" fill="#e9e8e8"/><rect x="20" y="0" width="5" height="5" fill="#e6e6e8"/><rect x="25" y="0" width="5" height="5" fill="#e6e7eb"/><rect x="30" y="0" width="5" height="5" fill="#e4e4e6"/><rect x="35" y="0" width="5" height="5" fill="#e4e4e7"/><rect x="40" y="0" width="5" height="5" fill="#d7d7da"/><rect x="45" y="0" width="5" height="5" fill="#ecebeb"/><rect x="50" y="0" width="5" height="5" fill="#e9e8e8"/><rect x="55" y="0" width="5" height="5" fill="#f5f5f6"/><rect x="60" y="0" width="5" height="5" fill="#e8e9ed"/><rect x="65" y="0" width="5" height="5" fill="#cac7c6"/><rect x="70" y="0" width="5" height="5" fill="#e4e4e6"/><rect x="75" y="0" width="5" height="5" fill="#e4e4e6"/><rect x="80" y="0" width="5" height="5" fill="#dadadd"/><rect x="85" y="0" width="5" height="5" fill="#f0f1f3"/><rect x="90" y="0" width="5" height="5" fill="#d4d4d7"/><rect x="95" y="0" width="5" height="5" fill="#ebeaeb"/><rect x="100" y="0" width="5" height="5" fill="#c8c8cd"/><rect x="105" y="0" width="5" height="5" fill="#dadce1"/><rect x="110" y="0" width="5" height="5" fill="#ededee"/><rect x="115" y="0" width="5" height="5" fill="#e4e3e3"/><rect x="120" y="0" width="5" height="5" fill="#dcdcdf"/><rect x="125" y="0" width="5" height="5" fill="#dcdcde"/><rect x="130" y="0" width="5" height="5" fill="#e0e0e3"/><rect x="135" y="0" width="5" height="5" fill="#d8d8db"/><rect x="140" y="0" width="5" height="5" fill="#dfe1e5"/><rect x="145" y="0" width="5" height="5" fill="#d4d4d8"/><rect x="150" y="0" width="5" height="5" fill="#e4e6ea"/><rect x="155" y="0" width="5" height="5" fill="#cfcfd3"/><rect x="160" y="0" width="5" height="5" fill="#e6e6e8"/><rect x="165" y="0" width="5" height="5" fill="#eae9e9"/><rect x="170" y="0" width="5" height="5" fill="#eaeaec"/><rect x="175" y="0" width="5" height="5" fill="#e5e5e7"/><rect x="180" y="0" width="5" height="5" fill="#e2e4e8"/><rect x="185" y="0" width="5" height="5" fill="#e6e5e5"/><rect x="190" y="0" width="5" height="5" fill="#e9eaee"/><rect x="195" y="0" width="5" height="5" fill="#eeeef0"/><rect x="0" y="5" width="5" height="5" fill="#ccc9c9"/><rect x="5" y="5" width="5" height="5" fill="#c2c2c7"/><rect x="10" y="5" width="5" height="5" fill="#b5b5bb"/><rect x="15" y="5" width="5" height="5" fill="#d3d1d0"/><rect x="20" y="5" width="5" height="5" fill="#aeaeb5"/><rect x="25" y="5" width="5" height="5" fill="#c6c3c1"/><rect x="30" y="5" width="5" height="5" fill="#c9c6c6"/><rect x="35" y="5" width="5" height="5" fill="#d1d1d5"/><rect x="40" y="5" width="5" height="5" fill="#afafb5"/><rect x="45" y="5" width="5" height="5" fill="#cccfd7"/><rect x="50" y="5" width="5" height="5" fill="#d8d6d5"/><rect x="55" y="5" width="5" height="5" fill="#e1e3e7"/><rect x="60" y="5" width="5" height="5" fill="#f5f5f6"/><rect x="65" y="5" width="5" height="5" fill="#c7cbd4"/><rect x="70" y="5" width="5" height="5" fill="#b5b5bb"/><rect x="75" y="5" width="5" height="5" fill="#c6c6ca"/><rect x="80" y="5" width="5" height="5" fill="#c6cad3"/><rect x="85" y="5" width="5" height="5" fill="#dddde0"/><rect x="90" y="5" width="5" height="5" fill="#b8b8bd"/><rect x="95" y="5" width="5" height="5" fill="#e7e7e9"/><rect x="100" y="5" width="5" height="5" fill="#b6b6bc"/><rect x="105" y="5" width="5" height="5" fill="#cecbca"/><rect x="110" y="5" width="5" height="5" fill="#c9c9ce"/><rect x="115" y="5" width="5" height="5" fill="#c4c1bf"/><rect x="120" y="5" width="5" height="5" fill="#ebebed"/><rect x="125" y="5" width="5" height="5" fill="#b9bec9"/><rect x="130" y="5" width="5" height="5" fill="#bebec4"/><rect x="135" y="5" width="5" height="5" fill="#bcbcc2"/><rect x="140" y="5" width="5" height="5" fill="#bbbbc0"/><rect x="145" y="5" width="5" height="5" fill="#b3b8c4"/><rect x="150" y="5" width="5" height="5" fill="#c3c3c8"/><rect x="155" y="5" width="5" height="5" fill="#bebbba"/><rect x="160" y="5" width="5" height="5" fill="#d5d3d3"/><rect x="165" y="5" width="5" height="5" fill="#aeb4c1"/><rect x="170" y="5" width="5" height="5" fill="#c6cad3"/><rect x="175" y="5" width="5" height="5" fill="#ccccd0"/><rect x="180" y="5" width="5" height="5" fill="#c5c2c0"/><rect x="185" y="5" width="5" height="5" fill="#c5c5ca"/><rect x="190" y="5" width="5" height="5" fill="#b4b4ba"/><rect x="195" y="5" width="5" height="5" fill="#d6d9df"/><rect x="0" y="10" width="5" height="5" fill="#edeef0"/><rect x="5" y="10" width="5" height="5" fill="#edeced"/><rect x="10" y="10" width="5" height="5" fill="#e0e0e2"/><rect x="15" y="10" width="5" height="5" fill="#d3d3d6"/><rect x="20" y="10" width="5" height="5" fill="#d7d5d5"/><rect x="25" y="10" width="5" height="5" fill="#eae9e8"/><rect x="30" y="10" width="5" height="5" fill="#e4e4e6"/><rect x="35" y="10" width="5" height="5" fill="#efeff0"/><rect x="40" y="10" width="5" height="5" fill="#e3e3e6"/><rect x="45" y="10" width="5" height="5" fill="#e8e9ed"/><rect x="50" y="10" width="5" height="5" fill="#efeff0"/><rect x="55" y="10" width="5" height="5" fill="#f5f5f6"/><rect x="60" y="10" width="5" height="5" fill="#f5f5f6"/><rect x="65" y="10" width="5" height="5" fill="#eeeeef"/><rect x="70" y="10" width="5" height="5" fill="#e5e4e4"/><rect x="75" y="10" width="5" height="5" fill="#e1e3e7"/><rect x="80" y="10" width="5" height="5" fill="#e9e9ea"/><rect x="85" y="10" width="5" height="5" fill="#eff0f2"/><rect x="90" y="10" width="5" height="5" fill="#dddfe5"/><rect x="95" y="10" width="5" height="5" fill="#f0f0f1"/><rect x="100" y="10" width="5" height="5" fill="#f1f0f1"/><rect x="105" y="10" width="5" height="5" fill="#e1e3e8"/><rect x="110" y="10" width="5" height="5" fill="#e8e8ea"/><rect x="115" y="10" width="5" height="5" fill="#ecebeb"/><rect x="120" y="10" width="5" height="5" fill="#f5f4f5"/><rect x="125" y="10" width="5" height="5" fill="#ececed"/><rect x="130" y="10" width="5" height="5" fill="#e4e4e6"/><rect x="135" y="10" width="5" height="5" fill="#e6e6e8"/><rect x="140" y="10" width="5" height="5" fill="#e8e7e7"/><rect x="145" y="10" width="5" height="5" fill="#e2e4e8"/><rect x="150" y="10" width="5" height="5" fill="#e4e3e3"/><rect x="155" y="10" width="5" height="5" fill="#e2e4e8"/><rect x="160" y="10" width="5" height="5" fill="#e6e6e8"/><rect x="165" y="10" width="5" height="5" fill="#ececee"/><rect x="170" y="10" width="5" height="5" fill="#eeeeef"/><rect x="175" y="10" width="5" height="5" fill="#e4e4e6"/><rect x="180" y="10" width="5" height="5" fill="#e4e4e6"/><rect x="185" y="10" width="5" height="5" fill="#d1d1d5"/><rect x="190" y="10" width="5" height="5" fill="#dbd9d9"/><rect x="195" y="10" width="5" height="5" fill="#eeeff1"/></svg>
<svg class="mz" style="left:49px;top:477px" width="140" height="15"><rect x="0" y="0" width="5" height="5" fill="#dddfe5"/><rect x="5" y="0" width="5" height="5" fill="#ceced4"/><rect x="10" y="0" width="5" height="5" fill="#cbcbd0"/><rect x="15" y="0" width="5" height="5" fill="#cfcdce"/><rect x="20" y="0" width="5" height="5" fill="#c3c3c9"/><rect x="25" y="0" width="5" height="5" fill="#d4d4d9"/><rect x="30" y="0" width="5" height="5" fill="#cecccd"/><rect x="35" y="0" width="5" height="5" fill="#cac7c8"/><rect x="40" y="0" width="5" height="5" fill="#c8cbd4"/><rect x="45" y="0" width="5" height="5" fill="#c5c5cb"/><rect x="50" y="0" width="5" height="5" fill="#cbcbd1"/><rect x="55" y="0" width="5" height="5" fill="#e1e1e6"/><rect x="60" y="0" width="5" height="5" fill="#eeeef2"/><rect x="65" y="0" width="5" height="5" fill="#c5c9d2"/><rect x="70" y="0" width="5" height="5" fill="#d5d5da"/><rect x="75" y="0" width="5" height="5" fill="#cfcfd4"/><rect x="80" y="0" width="5" height="5" fill="#d3d1d2"/><rect x="85" y="0" width="5" height="5" fill="#d8d8dd"/><rect x="90" y="0" width="5" height="5" fill="#c9c6c7"/><rect x="95" y="0" width="5" height="5" fill="#e6e5e7"/><rect x="100" y="0" width="5" height="5" fill="#d3d3d8"/><rect x="105" y="0" width="5" height="5" fill="#babac1"/><rect x="110" y="0" width="5" height="5" fill="#d8dae2"/><rect x="115" y="0" width="5" height="5" fill="#dfdfe4"/><rect x="120" y="0" width="5" height="5" fill="#c9c6c8"/><rect x="125" y="0" width="5" height="5" fill="#c2bfbe"/><rect x="130" y="0" width="5" height="5" fill="#dadadf"/><rect x="135" y="0" width="5" height="5" fill="#ccccd2"/><rect x="0" y="5" width="5" height="5" fill="#ccc9ca"/><rect x="5" y="5" width="5" height="5" fill="#aeaeb6"/><rect x="10" y="5" width="5" height="5" fill="#dcdadc"/><rect x="15" y="5" width="5" height="5" fill="#dbd9db"/><rect x="20" y="5" width="5" height="5" fill="#c8cbd5"/><rect x="25" y="5" width="5" height="5" fill="#d1d1d7"/><rect x="30" y="5" width="5" height="5" fill="#ccccd1"/><rect x="35" y="5" width="5" height="5" fill="#c8cbd4"/><rect x="40" y="5" width="5" height="5" fill="#c4c8d2"/><rect x="45" y="5" width="5" height="5" fill="#cdcdd3"/><rect x="50" y="5" width="5" height="5" fill="#d1d1d7"/><rect x="55" y="5" width="5" height="5" fill="#c8c8ce"/><rect x="60" y="5" width="5" height="5" fill="#eeeef2"/><rect x="65" y="5" width="5" height="5" fill="#ceced3"/><rect x="70" y="5" width="5" height="5" fill="#cacdd7"/><rect x="75" y="5" width="5" height="5" fill="#d1cfd1"/><rect x="80" y="5" width="5" height="5" fill="#dadadf"/><rect x="85" y="5" width="5" height="5" fill="#bebec4"/><rect x="90" y="5" width="5" height="5" fill="#c3c3c9"/><rect x="95" y="5" width="5" height="5" fill="#d5d7df"/><rect x="100" y="5" width="5" height="5" fill="#d5d7df"/><rect x="105" y="5" width="5" height="5" fill="#b8b8bf"/><rect x="110" y="5" width="5" height="5" fill="#bdc1cc"/><rect x="115" y="5" width="5" height="5" fill="#dddcdf"/><rect x="120" y="5" width="5" height="5" fill="#c1c5d0"/><rect x="125" y="5" width="5" height="5" fill="#cfcdce"/><rect x="130" y="5" width="5" height="5" fill="#b7b7be"/><rect x="135" y="5" width="5" height="5" fill="#cfcfd4"/><rect x="0" y="10" width="5" height="5" fill="#eeeef2"/><rect x="5" y="10" width="5" height="5" fill="#e3e3e7"/><rect x="10" y="10" width="5" height="5" fill="#dee0e7"/><rect x="15" y="10" width="5" height="5" fill="#d8d8dd"/><rect x="20" y="10" width="5" height="5" fill="#d0d3db"/><rect x="25" y="10" width="5" height="5" fill="#e6e6ea"/><rect x="30" y="10" width="5" height="5" fill="#d1d4dd"/><rect x="35" y="10" width="5" height="5" fill="#e0e0e5"/><rect x="40" y="10" width="5" height="5" fill="#e0e0e5"/><rect x="45" y="10" width="5" height="5" fill="#d1d4dc"/><rect x="50" y="10" width="5" height="5" fill="#e1e2e8"/><rect x="55" y="10" width="5" height="5" fill="#dedee3"/><rect x="60" y="10" width="5" height="5" fill="#e7e7eb"/><rect x="65" y="10" width="5" height="5" fill="#d6d8e0"/><rect x="70" y="10" width="5" height="5" fill="#e0e0e4"/><rect x="75" y="10" width="5" height="5" fill="#e3e3e7"/><rect x="80" y="10" width="5" height="5" fill="#e4e4e8"/><rect x="85" y="10" width="5" height="5" fill="#e0dfe2"/><rect x="90" y="10" width="5" height="5" fill="#dedde0"/><rect x="95" y="10" width="5" height="5" fill="#e7e7eb"/><rect x="100" y="10" width="5" height="5" fill="#dedee3"/><rect x="105" y="10" width="5" height="5" fill="#e6e5e8"/><rect x="110" y="10" width="5" height="5" fill="#e0e0e5"/><rect x="115" y="10" width="5" height="5" fill="#ebebee"/><rect x="120" y="10" width="5" height="5" fill="#ebebef"/><rect x="125" y="10" width="5" height="5" fill="#e8e8ec"/><rect x="130" y="10" width="5" height="5" fill="#e7e7eb"/><rect x="135" y="10" width="5" height="5" fill="#e8e8ec"/></svg>
<svg class="mz" style="left:204px;top:477px" width="195" height="15"><rect x="0" y="0" width="5" height="5" fill="#e7e8ed"/><rect x="5" y="0" width="5" height="5" fill="#e5e4e7"/><rect x="10" y="0" width="5" height="5" fill="#e1e1e5"/><rect x="15" y="0" width="5" height="5" fill="#dedee3"/><rect x="20" y="0" width="5" height="5" fill="#e0e1e7"/><rect x="25" y="0" width="5" height="5" fill="#dbd9db"/><rect x="30" y="0" width="5" height="5" fill="#c9c6c7"/><rect x="35" y="0" width="5" height="5" fill="#dddfe5"/><rect x="40" y="0" width="5" height="5" fill="#dbdbe0"/><rect x="45" y="0" width="5" height="5" fill="#d3d3d8"/><rect x="50" y="0" width="5" height="5" fill="#dddde2"/><rect x="55" y="0" width="5" height="5" fill="#c7cad4"/><rect x="60" y="0" width="5" height="5" fill="#e4e4e8"/><rect x="65" y="0" width="5" height="5" fill="#dcdce1"/><rect x="70" y="0" width="5" height="5" fill="#d7d5d7"/><rect x="75" y="0" width="5" height="5" fill="#e4e4e9"/><rect x="80" y="0" width="5" height="5" fill="#dfdee1"/><rect x="85" y="0" width="5" height="5" fill="#e0e0e4"/><rect x="90" y="0" width="5" height="5" fill="#dadadf"/><rect x="95" y="0" width="5" height="5" fill="#eeeef2"/><rect x="100" y="0" width="5" height="5" fill="#dddfe5"/><rect x="105" y="0" width="5" height="5" fill="#e5e4e6"/><rect x="110" y="0" width="5" height="5" fill="#e2e2e7"/><rect x="115" y="0" width="5" height="5" fill="#dbdbe0"/><rect x="120" y="0" width="5" height="5" fill="#e0dfe2"/><rect x="125" y="0" width="5" height="5" fill="#dbdde3"/><rect x="130" y="0" width="5" height="5" fill="#e2e2e6"/><rect x="135" y="0" width="5" height="5" fill="#dfdfe3"/><rect x="140" y="0" width="5" height="5" fill="#dfdfe4"/><rect x="145" y="0" width="5" height="5" fill="#dcdce1"/><rect x="150" y="0" width="5" height="5" fill="#e4e4e9"/><rect x="155" y="0" width="5" height="5" fill="#d3d3d9"/><rect x="160" y="0" width="5" height="5" fill="#c1c1c7"/><rect x="165" y="0" width="5" height="5" fill="#edecf0"/><rect x="170" y="0" width="5" height="5" fill="#e0dfe2"/><rect x="175" y="0" width="5" height="5" fill="#dedee2"/><rect x="180" y="0" width="5" height="5" fill="#e6e6ea"/><rect x="185" y="0" width="5" height="5" fill="#dbdbe0"/><rect x="190" y="0" width="5" height="5" fill="#e6e7ec"/><rect x="0" y="5" width="5" height="5" fill="#cdcdd3"/><rect x="5" y="5" width="5" height="5" fill="#bcb9b9"/><rect x="10" y="5" width="5" height="5" fill="#c5c9d2"/><rect x="15" y="5" width="5" height="5" fill="#b4b4bb"/><rect x="20" y="5" width="5" height="5" fill="#bcbcc3"/><rect x="25" y="5" width="5" height="5" fill="#bbbbc2"/><rect x="30" y="5" width="5" height="5" fill="#b6bbc8"/><rect x="35" y="5" width="5" height="5" fill="#cacad0"/><rect x="40" y="5" width="5" height="5" fill="#b3b8c4"/><rect x="45" y="5" width="5" height="5" fill="#b0b5c2"/><rect x="50" y="5" width="5" height="5" fill="#c2c2c8"/><rect x="55" y="5" width="5" height="5" fill="#c3c3c9"/><rect x="60" y="5" width="5" height="5" fill="#b1b1b8"/><rect x="65" y="5" width="5" height="5" fill="#b9b9bf"/><rect x="70" y="5" width="5" height="5" fill="#b5b5bc"/><rect x="75" y="5" width="5" height="5" fill="#cccfd8"/><rect x="80" y="5" width="5" height="5" fill="#bdc1cc"/><rect x="85" y="5" width="5" height="5" fill="#bfc3ce"/><rect x="90" y="5" width="5" height="5" fill="#bebbbb"/><rect x="95" y="5" width="5" height="5" fill="#dedee3"/><rect x="100" y="5" width="5" height="5" fill="#c7c7cd"/><rect x="105" y="5" width="5" height="5" fill="#aab0be"/><rect x="110" y="5" width="5" height="5" fill="#d0cecf"/><rect x="115" y="5" width="5" height="5" fill="#b6b6bd"/><rect x="120" y="5" width="5" height="5" fill="#c0c0c6"/><rect x="125" y="5" width="5" height="5" fill="#b0b0b7"/><rect x="130" y="5" width="5" height="5" fill="#d9d9de"/><rect x="135" y="5" width="5" height="5" fill="#b2b2b9"/><rect x="140" y="5" width="5" height="5" fill="#c8c8ce"/><rect x="145" y="5" width="5" height="5" fill="#b9beca"/><rect x="150" y="5" width="5" height="5" fill="#c6c6cc"/><rect x="155" y="5" width="5" height="5" fill="#b2b7c4"/><rect x="160" y="5" width="5" height="5" fill="#c4c4ca"/><rect x="165" y="5" width="5" height="5" fill="#e2e2e6"/><rect x="170" y="5" width="5" height="5" fill="#c9c9ce"/><rect x="175" y="5" width="5" height="5" fill="#bfc3ce"/><rect x="180" y="5" width="5" height="5" fill="#bdbaba"/><rect x="185" y="5" width="5" height="5" fill="#c7cad4"/><rect x="190" y="5" width="5" height="5" fill="#cbced8"/><rect x="0" y="10" width="5" height="5" fill="#e1e2e8"/><rect x="5" y="10" width="5" height="5" fill="#e0e0e5"/><rect x="10" y="10" width="5" height="5" fill="#e2e1e4"/><rect x="15" y="10" width="5" height="5" fill="#dddde2"/><rect x="20" y="10" width="5" height="5" fill="#e7e7eb"/><rect x="25" y="10" width="5" height="5" fill="#dddcdf"/><rect x="30" y="10" width="5" height="5" fill="#d5d7df"/><rect x="35" y="10" width="5" height="5" fill="#edecef"/><rect x="40" y="10" width="5" height="5" fill="#b4b9c6"/><rect x="45" y="10" width="5" height="5" fill="#e6e5e8"/><rect x="50" y="10" width="5" height="5" fill="#dcdee4"/><rect x="55" y="10" width="5" height="5" fill="#dddde2"/><rect x="60" y="10" width="5" height="5" fill="#e1e1e5"/><rect x="65" y="10" width="5" height="5" fill="#dddde2"/><rect x="70" y="10" width="5" height="5" fill="#e2e2e6"/><rect x="75" y="10" width="5" height="5" fill="#e4e4e8"/><rect x="80" y="10" width="5" height="5" fill="#dedee2"/><rect x="85" y="10" width="5" height="5" fill="#e6e6ea"/><rect x="90" y="10" width="5" height="5" fill="#c4c8d2"/><rect x="95" y="10" width="5" height="5" fill="#e7e7eb"/><rect x="100" y="10" width="5" height="5" fill="#dfdfe3"/><rect x="105" y="10" width="5" height="5" fill="#e6e6ea"/><rect x="110" y="10" width="5" height="5" fill="#e8e8ec"/><rect x="115" y="10" width="5" height="5" fill="#e3e4ea"/><rect x="120" y="10" width="5" height="5" fill="#e7e6e9"/><rect x="125" y="10" width="5" height="5" fill="#e3e3e7"/><rect x="130" y="10" width="5" height="5" fill="#e2e2e6"/><rect x="135" y="10" width="5" height="5" fill="#e6e7ec"/><rect x="140" y="10" width="5" height="5" fill="#e0e0e4"/><rect x="145" y="10" width="5" height="5" fill="#d9dbe2"/><rect x="150" y="10" width="5" height="5" fill="#e4e4e9"/><rect x="155" y="10" width="5" height="5" fill="#e1e2e8"/><rect x="160" y="10" width="5" height="5" fill="#e2e3e9"/><rect x="165" y="10" width="5" height="5" fill="#e6e5e8"/><rect x="170" y="10" width="5" height="5" fill="#e0dfe1"/><rect x="175" y="10" width="5" height="5" fill="#e0dfe2"/><rect x="180" y="10" width="5" height="5" fill="#e7e7eb"/><rect x="185" y="10" width="5" height="5" fill="#e8e8ec"/><rect x="190" y="10" width="5" height="5" fill="#e8e8ec"/></svg>
<svg class="mz" style="left:428px;top:477px" width="90" height="15"><rect x="0" y="0" width="5" height="5" fill="#c4c4ca"/><rect x="5" y="0" width="5" height="5" fill="#cacad0"/><rect x="10" y="0" width="5" height="5" fill="#e4e3e5"/><rect x="15" y="0" width="5" height="5" fill="#d0d0d5"/><rect x="20" y="0" width="5" height="5" fill="#c9c9cf"/><rect x="25" y="0" width="5" height="5" fill="#e8e8ec"/><rect x="30" y="0" width="5" height="5" fill="#c4c4ca"/><rect x="35" y="0" width="5" height="5" fill="#d1d1d7"/><rect x="40" y="0" width="5" height="5" fill="#dcdee5"/><rect x="45" y="0" width="5" height="5" fill="#dfdfe3"/><rect x="50" y="0" width="5" height="5" fill="#e1e1e6"/><rect x="55" y="0" width="5" height="5" fill="#e6e6ea"/><rect x="60" y="0" width="5" height="5" fill="#e7e7eb"/><rect x="65" y="0" width="5" height="5" fill="#e5e5e9"/><rect x="70" y="0" width="5" height="5" fill="#dedee3"/><rect x="75" y="0" width="5" height="5" fill="#dcdce1"/><rect x="80" y="0" width="5" height="5" fill="#e5e6eb"/><rect x="85" y="0" width="5" height="5" fill="#e8e8ec"/><rect x="0" y="5" width="5" height="5" fill="#bfc3cf"/><rect x="5" y="5" width="5" height="5" fill="#b8b4b4"/><rect x="10" y="5" width="5" height="5" fill="#c4c4ca"/><rect x="15" y="5" width="5" height="5" fill="#b4b4bb"/><rect x="20" y="5" width="5" height="5" fill="#d4d6de"/><rect x="25" y="5" width="5" height="5" fill="#e3e2e4"/><rect x="30" y="5" width="5" height="5" fill="#c4c1c0"/><rect x="35" y="5" width="5" height="5" fill="#d1d1d7"/><rect x="40" y="5" width="5" height="5" fill="#b6b6bd"/><rect x="45" y="5" width="5" height="5" fill="#c6c3c4"/><rect x="50" y="5" width="5" height="5" fill="#aaaab2"/><rect x="55" y="5" width="5" height="5" fill="#ceced3"/><rect x="60" y="5" width="5" height="5" fill="#cacdd7"/><rect x="65" y="5" width="5" height="5" fill="#cbcbd1"/><rect x="70" y="5" width="5" height="5" fill="#c8c5c6"/><rect x="75" y="5" width="5" height="5" fill="#c7c4c5"/><rect x="80" y="5" width="5" height="5" fill="#bab6b7"/><rect x="85" y="5" width="5" height="5" fill="#d4d4d9"/><rect x="0" y="10" width="5" height="5" fill="#e7e8ed"/><rect x="5" y="10" width="5" height="5" fill="#e4e4e8"/><rect x="10" y="10" width="5" height="5" fill="#cccfd9"/><rect x="15" y="10" width="5" height="5" fill="#ebebef"/><rect x="20" y="10" width="5" height="5" fill="#dedde0"/><rect x="25" y="10" width="5" height="5" fill="#eeeef2"/><rect x="30" y="10" width="5" height="5" fill="#e8e8ec"/><rect x="35" y="10" width="5" height="5" fill="#ebebef"/><rect x="40" y="10" width="5" height="5" fill="#dadadf"/><rect x="45" y="10" width="5" height="5" fill="#c3c3c9"/><rect x="50" y="10" width="5" height="5" fill="#dbd9db"/><rect x="55" y="10" width="5" height="5" fill="#e5e5e9"/><rect x="60" y="10" width="5" height="5" fill="#e7e7eb"/><rect x="65" y="10" width="5" height="5" fill="#e4e4e8"/><rect x="70" y="10" width="5" height="5" fill="#dcdee5"/><rect x="75" y="10" width="5" height="5" fill="#cecccc"/><rect x="80" y="10" width="5" height="5" fill="#cfd2da"/><rect x="85" y="10" width="5" height="5" fill="#ecebee"/></svg>
<svg class="mz" style="left:51px;top:521px" width="140" height="15"><rect x="0" y="0" width="5" height="5" fill="#e2e4e8"/><rect x="5" y="0" width="5" height="5" fill="#d6d4d4"/><rect x="10" y="0" width="5" height="5" fill="#d3d1d0"/><rect x="15" y="0" width="5" height="5" fill="#d1d1d5"/><rect x="20" y="0" width="5" height="5" fill="#cbced6"/><rect x="25" y="0" width="5" height="5" fill="#dfdddd"/><rect x="30" y="0" width="5" height="5" fill="#cfcfd3"/><rect x="35" y="0" width="5" height="5" fill="#cecbca"/><rect x="40" y="0" width="5" height="5" fill="#cfcfd3"/><rect x="45" y="0" width="5" height="5" fill="#c9c9cd"/><rect x="50" y="0" width="5" height="5" fill="#cfcfd3"/><rect x="55" y="0" width="5" height="5" fill="#e9e8e8"/><rect x="60" y="0" width="5" height="5" fill="#f5f5f6"/><rect x="65" y="0" width="5" height="5" fill="#d1cfce"/><rect x="70" y="0" width="5" height="5" fill="#dddbdb"/><rect x="75" y="0" width="5" height="5" fill="#d3d3d7"/><rect x="80" y="0" width="5" height="5" fill="#ececee"/><rect x="85" y="0" width="5" height="5" fill="#c7c7cb"/><rect x="90" y="0" width="5" height="5" fill="#cecbcb"/><rect x="95" y="0" width="5" height="5" fill="#dcdee4"/><rect x="100" y="0" width="5" height="5" fill="#dcdcdf"/><rect x="105" y="0" width="5" height="5" fill="#c2c2c7"/><rect x="110" y="0" width="5" height="5" fill="#e2e0e0"/><rect x="115" y="0" width="5" height="5" fill="#e3e5e9"/><rect x="120" y="0" width="5" height="5" fill="#c8c8cd"/><rect x="125" y="0" width="5" height="5" fill="#bfbfc4"/><rect x="130" y="0" width="5" height="5" fill="#e2e0e0"/><rect x="135" y="0" width="5" height="5" fill="#d4d2d1"/><rect x="0" y="5" width="5" height="5" fill="#c8ccd5"/><rect x="5" y="5" width="5" height="5" fill="#b1b1b7"/><rect x="10" y="5" width="5" height="5" fill="#dfdfe1"/><rect x="15" y="5" width="5" height="5" fill="#dee0e5"/><rect x="20" y="5" width="5" height="5" fill="#d6d4d4"/><rect x="25" y="5" width="5" height="5" fill="#d3d6dc"/><rect x="30" y="5" width="5" height="5" fill="#d0d0d4"/><rect x="35" y="5" width="5" height="5" fill="#d3d1d0"/><rect x="40" y="5" width="5" height="5" fill="#ccccd0"/><rect x="45" y="5" width="5" height="5" fill="#d2d2d6"/><rect x="50" y="5" width="5" height="5" fill="#d3d6dc"/><rect x="55" y="5" width="5" height="5" fill="#ccccd0"/><rect x="60" y="5" width="5" height="5" fill="#f5f5f6"/><rect x="65" y="5" width="5" height="5" fill="#cfd2da"/><rect x="70" y="5" width="5" height="5" fill="#d2d2d5"/><rect x="75" y="5" width="5" height="5" fill="#ced1d9"/><rect x="80" y="5" width="5" height="5" fill="#dedcdc"/><rect x="85" y="5" width="5" height="5" fill="#bababf"/><rect x="90" y="5" width="5" height="5" fill="#d0cecd"/><rect x="95" y="5" width="5" height="5" fill="#dadadd"/><rect x="100" y="5" width="5" height="5" fill="#c4c4c9"/><rect x="105" y="5" width="5" height="5" fill="#c2bfbd"/><rect x="110" y="5" width="5" height="5" fill="#c5c5c9"/><rect x="115" y="5" width="5" height="5" fill="#dfe1e5"/><rect x="120" y="5" width="5" height="5" fill="#c4c8d2"/><rect x="125" y="5" width="5" height="5" fill="#d0d0d4"/><rect x="130" y="5" width="5" height="5" fill="#babac0"/><rect x="135" y="5" width="5" height="5" fill="#d3d3d7"/><rect x="0" y="10" width="5" height="5" fill="#f5f5f5"/><rect x="5" y="10" width="5" height="5" fill="#eae9e9"/><rect x="10" y="10" width="5" height="5" fill="#e4e6ea"/><rect x="15" y="10" width="5" height="5" fill="#dfdfe2"/><rect x="20" y="10" width="5" height="5" fill="#dbd9d9"/><rect x="25" y="10" width="5" height="5" fill="#ececed"/><rect x="30" y="10" width="5" height="5" fill="#d9d9dc"/><rect x="35" y="10" width="5" height="5" fill="#e6e6e8"/><rect x="40" y="10" width="5" height="5" fill="#e6e6e8"/><rect x="45" y="10" width="5" height="5" fill="#dcdada"/><rect x="50" y="10" width="5" height="5" fill="#e7e8ec"/><rect x="55" y="10" width="5" height="5" fill="#e2e4e8"/><rect x="60" y="10" width="5" height="5" fill="#ecedf0"/><rect x="65" y="10" width="5" height="5" fill="#dbdde3"/><rect x="70" y="10" width="5" height="5" fill="#e4e6ea"/><rect x="75" y="10" width="5" height="5" fill="#e9e9eb"/><rect x="80" y="10" width="5" height="5" fill="#ecedf0"/><rect x="85" y="10" width="5" height="5" fill="#eeeef0"/><rect x="90" y="10" width="5" height="5" fill="#e6e5e5"/><rect x="95" y="10" width="5" height="5" fill="#eeeeef"/><rect x="100" y="10" width="5" height="5" fill="#f2f2f3"/><rect x="105" y="10" width="5" height="5" fill="#eaeaec"/><rect x="110" y="10" width="5" height="5" fill="#e4e6ea"/><rect x="115" y="10" width="5" height="5" fill="#f1f1f2"/><rect x="120" y="10" width="5" height="5" fill="#f2f1f3"/><rect x="125" y="10" width="5" height="5" fill="#efeeef"/><rect x="130" y="10" width="5" height="5" fill="#eeedee"/><rect x="135" y="10" width="5" height="5" fill="#edeef0"/></svg>
<svg class="mz" style="left:206px;top:521px" width="195" height="15"><rect x="0" y="0" width="5" height="5" fill="#eeeeef"/><rect x="5" y="0" width="5" height="5" fill="#e9e9eb"/><rect x="10" y="0" width="5" height="5" fill="#e6e6e8"/><rect x="15" y="0" width="5" height="5" fill="#e4e4e6"/><rect x="20" y="0" width="5" height="5" fill="#e9e8e8"/><rect x="25" y="0" width="5" height="5" fill="#dbdde3"/><rect x="30" y="0" width="5" height="5" fill="#c3c7d1"/><rect x="35" y="0" width="5" height="5" fill="#e6e5e6"/><rect x="40" y="0" width="5" height="5" fill="#e3e2e2"/><rect x="45" y="0" width="5" height="5" fill="#d5d8de"/><rect x="50" y="0" width="5" height="5" fill="#e5e4e4"/><rect x="55" y="0" width="5" height="5" fill="#cbced6"/><rect x="60" y="0" width="5" height="5" fill="#eaeaeb"/><rect x="65" y="0" width="5" height="5" fill="#e2e2e4"/><rect x="70" y="0" width="5" height="5" fill="#d9d9dc"/><rect x="75" y="0" width="5" height="5" fill="#ebeaeb"/><rect x="80" y="0" width="5" height="5" fill="#e3e3e5"/><rect x="85" y="0" width="5" height="5" fill="#e3e5e9"/><rect x="90" y="0" width="5" height="5" fill="#dfdfe2"/><rect x="95" y="0" width="5" height="5" fill="#f4f4f5"/><rect x="100" y="0" width="5" height="5" fill="#e6e5e5"/><rect x="105" y="0" width="5" height="5" fill="#ebeae9"/><rect x="110" y="0" width="5" height="5" fill="#e7e8ec"/><rect x="115" y="0" width="5" height="5" fill="#e1e1e3"/><rect x="120" y="0" width="5" height="5" fill="#e4e4e6"/><rect x="125" y="0" width="5" height="5" fill="#e0e2e6"/><rect x="130" y="0" width="5" height="5" fill="#e8e8ea"/><rect x="135" y="0" width="5" height="5" fill="#e2e4e8"/><rect x="140" y="0" width="5" height="5" fill="#e5e5e7"/><rect x="145" y="0" width="5" height="5" fill="#e2e2e4"/><rect x="150" y="0" width="5" height="5" fill="#eaeaec"/><rect x="155" y="0" width="5" height="5" fill="#d8d8db"/><rect x="160" y="0" width="5" height="5" fill="#c4c4c9"/><rect x="165" y="0" width="5" height="5" fill="#f3f3f5"/><rect x="170" y="0" width="5" height="5" fill="#e3e3e6"/><rect x="175" y="0" width="5" height="5" fill="#e1e3e7"/><rect x="180" y="0" width="5" height="5" fill="#ebecee"/><rect x="185" y="0" width="5" height="5" fill="#e1e1e3"/><rect x="190" y="0" width="5" height="5" fill="#edeced"/><rect x="0" y="5" width="5" height="5" fill="#d2d2d5"/><rect x="5" y="5" width="5" height="5" fill="#b4b9c5"/><rect x="10" y="5" width="5" height="5" fill="#cdcdd1"/><rect x="15" y="5" width="5" height="5" fill="#bebab9"/><rect x="20" y="5" width="5" height="5" fill="#babfca"/><rect x="25" y="5" width="5" height="5" fill="#babfca"/><rect x="30" y="5" width="5" height="5" fill="#bebec3"/><rect x="35" y="5" width="5" height="5" fill="#cbced6"/><rect x="40" y="5" width="5" height="5" fill="#bbbbc0"/><rect x="45" y="5" width="5" height="5" fill="#b3b8c3"/><rect x="50" y="5" width="5" height="5" fill="#c6c6ca"/><rect x="55" y="5" width="5" height="5" fill="#c3c7d0"/><rect x="60" y="5" width="5" height="5" fill="#b3b3b9"/><rect x="65" y="5" width="5" height="5" fill="#c2bfbd"/><rect x="70" y="5" width="5" height="5" fill="#b3b8c3"/><rect x="75" y="5" width="5" height="5" fill="#d3d3d7"/><rect x="80" y="5" width="5" height="5" fill="#cac7c6"/><rect x="85" y="5" width="5" height="5" fill="#c3c7d0"/><rect x="90" y="5" width="5" height="5" fill="#bbbbc0"/><rect x="95" y="5" width="5" height="5" fill="#e2e4e8"/><rect x="100" y="5" width="5" height="5" fill="#d0cdcc"/><rect x="105" y="5" width="5" height="5" fill="#b2b2b9"/><rect x="110" y="5" width="5" height="5" fill="#cdd0d8"/><rect x="115" y="5" width="5" height="5" fill="#b4b9c5"/><rect x="120" y="5" width="5" height="5" fill="#c4c4c8"/><rect x="125" y="5" width="5" height="5" fill="#b2b2b8"/><rect x="130" y="5" width="5" height="5" fill="#e2e0df"/><rect x="135" y="5" width="5" height="5" fill="#afb5c2"/><rect x="140" y="5" width="5" height="5" fill="#d0cecd"/><rect x="145" y="5" width="5" height="5" fill="#bcc1cc"/><rect x="150" y="5" width="5" height="5" fill="#cbcbcf"/><rect x="155" y="5" width="5" height="5" fill="#c0bdbc"/><rect x="160" y="5" width="5" height="5" fill="#cdcac9"/><rect x="165" y="5" width="5" height="5" fill="#e9e8e8"/><rect x="170" y="5" width="5" height="5" fill="#c9cdd5"/><rect x="175" y="5" width="5" height="5" fill="#c6c6cb"/><rect x="180" y="5" width="5" height="5" fill="#b6bbc6"/><rect x="185" y="5" width="5" height="5" fill="#ceced2"/><rect x="190" y="5" width="5" height="5" fill="#d3d3d6"/><rect x="0" y="10" width="5" height="5" fill="#e9e8e8"/><rect x="5" y="10" width="5" height="5" fill="#e4e6ea"/><rect x="10" y="10" width="5" height="5" fill="#e6e6e8"/><rect x="15" y="10" width="5" height="5" fill="#e3e3e5"/><rect x="20" y="10" width="5" height="5" fill="#ecedef"/><rect x="25" y="10" width="5" height="5" fill="#e0e0e3"/><rect x="30" y="10" width="5" height="5" fill="#dfdddd"/><rect x="35" y="10" width="5" height="5" fill="#f1f2f4"/><rect x="40" y="10" width="5" height="5" fill="#b7bcc7"/><rect x="45" y="10" width="5" height="5" fill="#eaebed"/><rect x="50" y="10" width="5" height="5" fill="#e1e3e7"/><rect x="55" y="10" width="5" height="5" fill="#e3e3e5"/><rect x="60" y="10" width="5" height="5" fill="#e9e8e8"/><rect x="65" y="10" width="5" height="5" fill="#e3e3e5"/><rect x="70" y="10" width="5" height="5" fill="#e7e8ec"/><rect x="75" y="10" width="5" height="5" fill="#e9eaee"/><rect x="80" y="10" width="5" height="5" fill="#e1e3e7"/><rect x="85" y="10" width="5" height="5" fill="#edecec"/><rect x="90" y="10" width="5" height="5" fill="#d1cfce"/><rect x="95" y="10" width="5" height="5" fill="#ecedf0"/><rect x="100" y="10" width="5" height="5" fill="#e6e5e5"/><rect x="105" y="10" width="5" height="5" fill="#ebecef"/><rect x="110" y="10" width="5" height="5" fill="#edeef0"/><rect x="115" y="10" width="5" height="5" fill="#ecebea"/><rect x="120" y="10" width="5" height="5" fill="#ebecee"/><rect x="125" y="10" width="5" height="5" fill="#e8e8ea"/><rect x="130" y="10" width="5" height="5" fill="#e7e7e9"/><rect x="135" y="10" width="5" height="5" fill="#ededee"/><rect x="140" y="10" width="5" height="5" fill="#e3e5e9"/><rect x="145" y="10" width="5" height="5" fill="#e1e1e3"/><rect x="150" y="10" width="5" height="5" fill="#e9eaed"/><rect x="155" y="10" width="5" height="5" fill="#eae9e9"/><rect x="160" y="10" width="5" height="5" fill="#e9e9eb"/><rect x="165" y="10" width="5" height="5" fill="#eaebed"/><rect x="170" y="10" width="5" height="5" fill="#e5e4e4"/><rect x="175" y="10" width="5" height="5" fill="#e3e3e6"/><rect x="180" y="10" width="5" height="5" fill="#eeedee"/><rect x="185" y="10" width="5" height="5" fill="#eeeeef"/><rect x="190" y="10" width="5" height="5" fill="#efeeee"/></svg>
<svg class="mz" style="left:426px;top:521px" width="185" height="15"><rect x="0" y="0" width="5" height="5" fill="#d6d4d4"/><rect x="5" y="0" width="5" height="5" fill="#dfdfe1"/><rect x="10" y="0" width="5" height="5" fill="#ecedef"/><rect x="15" y="0" width="5" height="5" fill="#e3e1e0"/><rect x="20" y="0" width="5" height="5" fill="#d8dae0"/><rect x="25" y="0" width="5" height="5" fill="#e1e1e4"/><rect x="30" y="0" width="5" height="5" fill="#ececee"/><rect x="35" y="0" width="5" height="5" fill="#e1e1e4"/><rect x="40" y="0" width="5" height="5" fill="#e3e5e9"/><rect x="45" y="0" width="5" height="5" fill="#e3e3e6"/><rect x="50" y="0" width="5" height="5" fill="#f2f1f2"/><rect x="55" y="0" width="5" height="5" fill="#ced1d9"/><rect x="60" y="0" width="5" height="5" fill="#d4d4d7"/><rect x="65" y="0" width="5" height="5" fill="#d9d9dc"/><rect x="70" y="0" width="5" height="5" fill="#e4e6ea"/><rect x="75" y="0" width="5" height="5" fill="#dadce2"/><rect x="80" y="0" width="5" height="5" fill="#e1e1e4"/><rect x="85" y="0" width="5" height="5" fill="#d2d2d6"/><rect x="90" y="0" width="5" height="5" fill="#f5f5f6"/><rect x="95" y="0" width="5" height="5" fill="#f5f5f6"/><rect x="100" y="0" width="5" height="5" fill="#f2f2f3"/><rect x="105" y="0" width="5" height="5" fill="#bcc1cc"/><rect x="110" y="0" width="5" height="5" fill="#dfdfe2"/><rect x="115" y="0" width="5" height="5" fill="#ecebea"/><rect x="120" y="0" width="5" height="5" fill="#dee0e5"/><rect x="125" y="0" width="5" height="5" fill="#dbdde3"/><rect x="130" y="0" width="5" height="5" fill="#cfd2da"/><rect x="135" y="0" width="5" height="5" fill="#ccccd0"/><rect x="140" y="0" width="5" height="5" fill="#e0e0e3"/><rect x="145" y="0" width="5" height="5" fill="#ecedef"/><rect x="150" y="0" width="5" height="5" fill="#f0f0f1"/><rect x="155" y="0" width="5" height="5" fill="#e5e6ea"/><rect x="160" y="0" width="5" height="5" fill="#eae9e8"/><rect x="165" y="0" width="5" height="5" fill="#e6e6e8"/><rect x="170" y="0" width="5" height="5" fill="#e3e3e5"/><rect x="175" y="0" width="5" height="5" fill="#edeef0"/><rect x="180" y="0" width="5" height="5" fill="#eeeeef"/><rect x="0" y="5" width="5" height="5" fill="#e2e0df"/><rect x="5" y="5" width="5" height="5" fill="#c4c4c9"/><rect x="10" y="5" width="5" height="5" fill="#c1bebc"/><rect x="15" y="5" width="5" height="5" fill="#c8c8cd"/><rect x="20" y="5" width="5" height="5" fill="#b9bec9"/><rect x="25" y="5" width="5" height="5" fill="#babfca"/><rect x="30" y="5" width="5" height="5" fill="#c2c2c7"/><rect x="35" y="5" width="5" height="5" fill="#bfbfc5"/><rect x="40" y="5" width="5" height="5" fill="#c1c1c6"/><rect x="45" y="5" width="5" height="5" fill="#c9c9cd"/><rect x="50" y="5" width="5" height="5" fill="#f5f5f6"/><rect x="55" y="5" width="5" height="5" fill="#cfd2da"/><rect x="60" y="5" width="5" height="5" fill="#d2d2d5"/><rect x="65" y="5" width="5" height="5" fill="#d2d2d5"/><rect x="70" y="5" width="5" height="5" fill="#f0f0f1"/><rect x="75" y="5" width="5" height="5" fill="#d7d7da"/><rect x="80" y="5" width="5" height="5" fill="#e4e4e7"/><rect x="85" y="5" width="5" height="5" fill="#cbcbcf"/><rect x="90" y="5" width="5" height="5" fill="#e9e9eb"/><rect x="95" y="5" width="5" height="5" fill="#e3e2e2"/><rect x="100" y="5" width="5" height="5" fill="#eeeeef"/><rect x="105" y="5" width="5" height="5" fill="#cdd0d8"/><rect x="110" y="5" width="5" height="5" fill="#c5c5ca"/><rect x="115" y="5" width="5" height="5" fill="#bebec3"/><rect x="120" y="5" width="5" height="5" fill="#cbcbcf"/><rect x="125" y="5" width="5" height="5" fill="#d3d3d7"/><rect x="130" y="5" width="5" height="5" fill="#d0d0d4"/><rect x="135" y="5" width="5" height="5" fill="#d3d6dc"/><rect x="140" y="5" width="5" height="5" fill="#c4c4c9"/><rect x="145" y="5" width="5" height="5" fill="#bababf"/><rect x="150" y="5" width="5" height="5" fill="#eeeff2"/><rect x="155" y="5" width="5" height="5" fill="#ceced2"/><rect x="160" y="5" width="5" height="5" fill="#c3c3c8"/><rect x="165" y="5" width="5" height="5" fill="#b6b6bc"/><rect x="170" y="5" width="5" height="5" fill="#c3c3c8"/><rect x="175" y="5" width="5" height="5" fill="#ccccd0"/><rect x="180" y="5" width="5" height="5" fill="#dddbdb"/><rect x="0" y="10" width="5" height="5" fill="#eae9e9"/><rect x="5" y="10" width="5" height="5" fill="#e6e6e8"/><rect x="10" y="10" width="5" height="5" fill="#d1d4db"/><rect x="15" y="10" width="5" height="5" fill="#e4e4e7"/><rect x="20" y="10" width="5" height="5" fill="#eaeaec"/><rect x="25" y="10" width="5" height="5" fill="#e1e1e4"/><rect x="30" y="10" width="5" height="5" fill="#ebebed"/><rect x="35" y="10" width="5" height="5" fill="#eaebee"/><rect x="40" y="10" width="5" height="5" fill="#ebebec"/><rect x="45" y="10" width="5" height="5" fill="#e3e3e5"/><rect x="50" y="10" width="5" height="5" fill="#f1f0f1"/><rect x="55" y="10" width="5" height="5" fill="#d6d9df"/><rect x="60" y="10" width="5" height="5" fill="#e9e9eb"/><rect x="65" y="10" width="5" height="5" fill="#e9e9eb"/><rect x="70" y="10" width="5" height="5" fill="#e6e6e8"/><rect x="75" y="10" width="5" height="5" fill="#e0e0e2"/><rect x="80" y="10" width="5" height="5" fill="#e6e6e8"/><rect x="85" y="10" width="5" height="5" fill="#eaeaeb"/><rect x="90" y="10" width="5" height="5" fill="#f5f5f6"/><rect x="95" y="10" width="5" height="5" fill="#f5f5f6"/><rect x="100" y="10" width="5" height="5" fill="#f5f5f6"/><rect x="105" y="10" width="5" height="5" fill="#eeedee"/><rect x="110" y="10" width="5" height="5" fill="#ebeaeb"/><rect x="115" y="10" width="5" height="5" fill="#e8e8ea"/><rect x="120" y="10" width="5" height="5" fill="#e4e4e6"/><rect x="125" y="10" width="5" height="5" fill="#e9e9eb"/><rect x="130" y="10" width="5" height="5" fill="#eae9e9"/><rect x="135" y="10" width="5" height="5" fill="#e3e3e5"/><rect x="140" y="10" width="5" height="5" fill="#ededee"/><rect x="145" y="10" width="5" height="5" fill="#d4d4d8"/><rect x="150" y="10" width="5" height="5" fill="#f5f5f6"/><rect x="155" y="10" width="5" height="5" fill="#e8e7e7"/><rect x="160" y="10" width="5" height="5" fill="#eae9e8"/><rect x="165" y="10" width="5" height="5" fill="#dad8d8"/><rect x="170" y="10" width="5" height="5" fill="#e1dfdf"/><rect x="175" y="10" width="5" height="5" fill="#d8d6d6"/><rect x="180" y="10" width="5" height="5" fill="#f3f3f4"/></svg>
<svg class="mz" style="left:51px;top:564px" width="140" height="15"><rect x="0" y="0" width="5" height="5" fill="#e1e0e3"/><rect x="5" y="0" width="5" height="5" fill="#d2d0d2"/><rect x="10" y="0" width="5" height="5" fill="#ceced4"/><rect x="15" y="0" width="5" height="5" fill="#d5d3d4"/><rect x="20" y="0" width="5" height="5" fill="#babac0"/><rect x="25" y="0" width="5" height="5" fill="#d1d4dc"/><rect x="30" y="0" width="5" height="5" fill="#cbced8"/><rect x="35" y="0" width="5" height="5" fill="#c7c4c5"/><rect x="40" y="0" width="5" height="5" fill="#ccccd1"/><rect x="45" y="0" width="5" height="5" fill="#c3c3c9"/><rect x="50" y="0" width="5" height="5" fill="#cbcbd1"/><rect x="55" y="0" width="5" height="5" fill="#dfdfe4"/><rect x="60" y="0" width="5" height="5" fill="#eeeef2"/><rect x="65" y="0" width="5" height="5" fill="#cdcdd3"/><rect x="70" y="0" width="5" height="5" fill="#d5d5da"/><rect x="75" y="0" width="5" height="5" fill="#dcdce1"/><rect x="80" y="0" width="5" height="5" fill="#e3e4ea"/><rect x="85" y="0" width="5" height="5" fill="#c4c4cb"/><rect x="90" y="0" width="5" height="5" fill="#bdbdc4"/><rect x="95" y="0" width="5" height="5" fill="#e0dfe2"/><rect x="100" y="0" width="5" height="5" fill="#cacad0"/><rect x="105" y="0" width="5" height="5" fill="#ccccd1"/><rect x="110" y="0" width="5" height="5" fill="#cfcfd5"/><rect x="115" y="0" width="5" height="5" fill="#eeeef2"/><rect x="120" y="0" width="5" height="5" fill="#bfbfc6"/><rect x="125" y="0" width="5" height="5" fill="#c2c2c8"/><rect x="130" y="0" width="5" height="5" fill="#d3d3d9"/><rect x="135" y="0" width="5" height="5" fill="#dedde0"/><rect x="0" y="5" width="5" height="5" fill="#c8c8ce"/><rect x="5" y="5" width="5" height="5" fill="#b5b1b0"/><rect x="10" y="5" width="5" height="5" fill="#e9e9ec"/><rect x="15" y="5" width="5" height="5" fill="#c7c7cd"/><rect x="20" y="5" width="5" height="5" fill="#b3b3ba"/><rect x="25" y="5" width="5" height="5" fill="#cdcbcc"/><rect x="30" y="5" width="5" height="5" fill="#cdcdd2"/><rect x="35" y="5" width="5" height="5" fill="#c9c9cf"/><rect x="40" y="5" width="5" height="5" fill="#cacad0"/><rect x="45" y="5" width="5" height="5" fill="#cfcdce"/><rect x="50" y="5" width="5" height="5" fill="#d0d3db"/><rect x="55" y="5" width="5" height="5" fill="#cbc8c9"/><rect x="60" y="5" width="5" height="5" fill="#eeeef2"/><rect x="65" y="5" width="5" height="5" fill="#d3d3d9"/><rect x="70" y="5" width="5" height="5" fill="#dddde2"/><rect x="75" y="5" width="5" height="5" fill="#d9d9dd"/><rect x="80" y="5" width="5" height="5" fill="#d2d2d7"/><rect x="85" y="5" width="5" height="5" fill="#babac0"/><rect x="90" y="5" width="5" height="5" fill="#b6b6bd"/><rect x="95" y="5" width="5" height="5" fill="#dedee3"/><rect x="100" y="5" width="5" height="5" fill="#c9ccd5"/><rect x="105" y="5" width="5" height="5" fill="#bbb8b8"/><rect x="110" y="5" width="5" height="5" fill="#b4b9c6"/><rect x="115" y="5" width="5" height="5" fill="#dadce3"/><rect x="120" y="5" width="5" height="5" fill="#b7b7be"/><rect x="125" y="5" width="5" height="5" fill="#bfbcbb"/><rect x="130" y="5" width="5" height="5" fill="#bcb9b9"/><rect x="135" y="5" width="5" height="5" fill="#d6d8e0"/><rect x="0" y="10" width="5" height="5" fill="#eeeef2"/><rect x="5" y="10" width="5" height="5" fill="#e1e2e9"/><rect x="10" y="10" width="5" height="5" fill="#e3e3e7"/><rect x="15" y="10" width="5" height="5" fill="#d9dbe2"/><rect x="20" y="10" width="5" height="5" fill="#dedde0"/><rect x="25" y="10" width="5" height="5" fill="#e8e8ec"/><rect x="30" y="10" width="5" height="5" fill="#d5d5da"/><rect x="35" y="10" width="5" height="5" fill="#e0e0e5"/><rect x="40" y="10" width="5" height="5" fill="#e0e1e7"/><rect x="45" y="10" width="5" height="5" fill="#d3d3d8"/><rect x="50" y="10" width="5" height="5" fill="#e2e3e9"/><rect x="55" y="10" width="5" height="5" fill="#e0e0e4"/><rect x="60" y="10" width="5" height="5" fill="#e2e3e9"/><rect x="65" y="10" width="5" height="5" fill="#dbdbe0"/><rect x="70" y="10" width="5" height="5" fill="#d2d5dd"/><rect x="75" y="10" width="5" height="5" fill="#dddde2"/><rect x="80" y="10" width="5" height="5" fill="#e7e7eb"/><rect x="85" y="10" width="5" height="5" fill="#e8e8ec"/><rect x="90" y="10" width="5" height="5" fill="#dddde1"/><rect x="95" y="10" width="5" height="5" fill="#e7e7eb"/><rect x="100" y="10" width="5" height="5" fill="#e1e0e3"/><rect x="105" y="10" width="5" height="5" fill="#eaebf0"/><rect x="110" y="10" width="5" height="5" fill="#dcdee4"/><rect x="115" y="10" width="5" height="5" fill="#e8e8ec"/><rect x="120" y="10" width="5" height="5" fill="#eeeef2"/><rect x="125" y="10" width="5" height="5" fill="#e1e1e6"/><rect x="130" y="10" width="5" height="5" fill="#e5e6eb"/><rect x="135" y="10" width="5" height="5" fill="#ebeaee"/></svg>
<svg class="mz" style="left:207px;top:564px" width="195" height="15"><rect x="0" y="0" width="5" height="5" fill="#e7e8ed"/><rect x="5" y="0" width="5" height="5" fill="#e3e3e8"/><rect x="10" y="0" width="5" height="5" fill="#e1e1e5"/><rect x="15" y="0" width="5" height="5" fill="#e0dfe2"/><rect x="20" y="0" width="5" height="5" fill="#e3e2e4"/><rect x="25" y="0" width="5" height="5" fill="#dbd9db"/><rect x="30" y="0" width="5" height="5" fill="#c4c4ca"/><rect x="35" y="0" width="5" height="5" fill="#dddfe5"/><rect x="40" y="0" width="5" height="5" fill="#dddcdf"/><rect x="45" y="0" width="5" height="5" fill="#d6d4d6"/><rect x="50" y="0" width="5" height="5" fill="#dddde2"/><rect x="55" y="0" width="5" height="5" fill="#c7cad4"/><rect x="60" y="0" width="5" height="5" fill="#e3e4ea"/><rect x="65" y="0" width="5" height="5" fill="#dedde0"/><rect x="70" y="0" width="5" height="5" fill="#d4d4d9"/><rect x="75" y="0" width="5" height="5" fill="#e5e4e8"/><rect x="80" y="0" width="5" height="5" fill="#dddde2"/><rect x="85" y="0" width="5" height="5" fill="#e0e0e4"/><rect x="90" y="0" width="5" height="5" fill="#dadadf"/><rect x="95" y="0" width="5" height="5" fill="#eeeef2"/><rect x="100" y="0" width="5" height="5" fill="#dfdfe3"/><rect x="105" y="0" width="5" height="5" fill="#e2e3e9"/><rect x="110" y="0" width="5" height="5" fill="#e2e2e7"/><rect x="115" y="0" width="5" height="5" fill="#dbdbe0"/><rect x="120" y="0" width="5" height="5" fill="#dcdee5"/><rect x="125" y="0" width="5" height="5" fill="#dfdee0"/><rect x="130" y="0" width="5" height="5" fill="#e4e3e5"/><rect x="135" y="0" width="5" height="5" fill="#e1e0e2"/><rect x="140" y="0" width="5" height="5" fill="#dddfe6"/><rect x="145" y="0" width="5" height="5" fill="#dedde0"/><rect x="150" y="0" width="5" height="5" fill="#e5e4e8"/><rect x="155" y="0" width="5" height="5" fill="#d3d3d9"/><rect x="160" y="0" width="5" height="5" fill="#c6c3c4"/><rect x="165" y="0" width="5" height="5" fill="#ececf1"/><rect x="170" y="0" width="5" height="5" fill="#dcdee5"/><rect x="175" y="0" width="5" height="5" fill="#dedee2"/><rect x="180" y="0" width="5" height="5" fill="#e6e6ea"/><rect x="185" y="0" width="5" height="5" fill="#dbdbe0"/><rect x="190" y="0" width="5" height="5" fill="#e7e7eb"/><rect x="0" y="5" width="5" height="5" fill="#d1cfd1"/><rect x="5" y="5" width="5" height="5" fill="#b1b6c3"/><rect x="10" y="5" width="5" height="5" fill="#c9c9ce"/><rect x="15" y="5" width="5" height="5" fill="#afb4c2"/><rect x="20" y="5" width="5" height="5" fill="#bcbcc3"/><rect x="25" y="5" width="5" height="5" fill="#c1bebe"/><rect x="30" y="5" width="5" height="5" fill="#bbbbc2"/><rect x="35" y="5" width="5" height="5" fill="#c7cad4"/><rect x="40" y="5" width="5" height="5" fill="#b8b8be"/><rect x="45" y="5" width="5" height="5" fill="#b5b5bc"/><rect x="50" y="5" width="5" height="5" fill="#bec2cd"/><rect x="55" y="5" width="5" height="5" fill="#c8c5c6"/><rect x="60" y="5" width="5" height="5" fill="#b1b1b8"/><rect x="65" y="5" width="5" height="5" fill="#b4b9c5"/><rect x="70" y="5" width="5" height="5" fill="#b5b5bc"/><rect x="75" y="5" width="5" height="5" fill="#cfcfd4"/><rect x="80" y="5" width="5" height="5" fill="#c6c3c4"/><rect x="85" y="5" width="5" height="5" fill="#c8c5c6"/><rect x="90" y="5" width="5" height="5" fill="#b8b8bf"/><rect x="95" y="5" width="5" height="5" fill="#dcdee5"/><rect x="100" y="5" width="5" height="5" fill="#ccc9ca"/><rect x="105" y="5" width="5" height="5" fill="#aab0be"/><rect x="110" y="5" width="5" height="5" fill="#c9ccd6"/><rect x="115" y="5" width="5" height="5" fill="#b6b6bd"/><rect x="120" y="5" width="5" height="5" fill="#c0c0c6"/><rect x="125" y="5" width="5" height="5" fill="#b0b0b7"/><rect x="130" y="5" width="5" height="5" fill="#d7d9e1"/><rect x="135" y="5" width="5" height="5" fill="#acb2c0"/><rect x="140" y="5" width="5" height="5" fill="#c8c8ce"/><rect x="145" y="5" width="5" height="5" fill="#c4c1c0"/><rect x="150" y="5" width="5" height="5" fill="#c2c6d1"/><rect x="155" y="5" width="5" height="5" fill="#b2b7c4"/><rect x="160" y="5" width="5" height="5" fill="#c4c4ca"/><rect x="165" y="5" width="5" height="5" fill="#e4e3e5"/><rect x="170" y="5" width="5" height="5" fill="#c9c9ce"/><rect x="175" y="5" width="5" height="5" fill="#c8c5c6"/><rect x="180" y="5" width="5" height="5" fill="#b7b7be"/><rect x="185" y="5" width="5" height="5" fill="#c7cad4"/><rect x="190" y="5" width="5" height="5" fill="#cbced8"/><rect x="0" y="10" width="5" height="5" fill="#e2e2e6"/><rect x="5" y="10" width="5" height="5" fill="#e0e0e5"/><rect x="10" y="10" width="5" height="5" fill="#e0e0e5"/><rect x="15" y="10" width="5" height="5" fill="#dddde2"/><rect x="20" y="10" width="5" height="5" fill="#e7e7eb"/><rect x="25" y="10" width="5" height="5" fill="#dbdbe0"/><rect x="30" y="10" width="5" height="5" fill="#d5d7df"/><rect x="35" y="10" width="5" height="5" fill="#ececef"/><rect x="40" y="10" width="5" height="5" fill="#b9b9c0"/><rect x="45" y="10" width="5" height="5" fill="#e6e5e8"/><rect x="50" y="10" width="5" height="5" fill="#dcdee4"/><rect x="55" y="10" width="5" height="5" fill="#dbdde4"/><rect x="60" y="10" width="5" height="5" fill="#e3e2e4"/><rect x="65" y="10" width="5" height="5" fill="#dbdde4"/><rect x="70" y="10" width="5" height="5" fill="#e2e2e6"/><rect x="75" y="10" width="5" height="5" fill="#e6e5e7"/><rect x="80" y="10" width="5" height="5" fill="#dedee2"/><rect x="85" y="10" width="5" height="5" fill="#e6e6ea"/><rect x="90" y="10" width="5" height="5" fill="#c8c8ce"/><rect x="95" y="10" width="5" height="5" fill="#e7e7eb"/><rect x="100" y="10" width="5" height="5" fill="#dddfe5"/><rect x="105" y="10" width="5" height="5" fill="#e5e6eb"/><rect x="110" y="10" width="5" height="5" fill="#e8e8ec"/><rect x="115" y="10" width="5" height="5" fill="#e6e5e7"/><rect x="120" y="10" width="5" height="5" fill="#e6e6ea"/><rect x="125" y="10" width="5" height="5" fill="#e5e4e6"/><rect x="130" y="10" width="5" height="5" fill="#e2e2e6"/><rect x="135" y="10" width="5" height="5" fill="#e7e7eb"/><rect x="140" y="10" width="5" height="5" fill="#e0e0e4"/><rect x="145" y="10" width="5" height="5" fill="#dddcdf"/><rect x="150" y="10" width="5" height="5" fill="#e4e4e9"/><rect x="155" y="10" width="5" height="5" fill="#e2e2e6"/><rect x="160" y="10" width="5" height="5" fill="#e3e3e7"/><rect x="165" y="10" width="5" height="5" fill="#e4e5ea"/><rect x="170" y="10" width="5" height="5" fill="#dedee2"/><rect x="175" y="10" width="5" height="5" fill="#dcdee5"/><rect x="180" y="10" width="5" height="5" fill="#e8e7ea"/><rect x="185" y="10" width="5" height="5" fill="#e7e8ed"/><rect x="190" y="10" width="5" height="5" fill="#e8e8ec"/></svg>
<svg class="mz" style="left:427px;top:564px" width="175" height="15"><rect x="0" y="0" width="5" height="5" fill="#e0e0e5"/><rect x="5" y="0" width="5" height="5" fill="#e0e0e5"/><rect x="10" y="0" width="5" height="5" fill="#dadadf"/><rect x="15" y="0" width="5" height="5" fill="#d8dae2"/><rect x="20" y="0" width="5" height="5" fill="#d9d7d9"/><rect x="25" y="0" width="5" height="5" fill="#e6e5e7"/><rect x="30" y="0" width="5" height="5" fill="#c9c9ce"/><rect x="35" y="0" width="5" height="5" fill="#e4e4e8"/><rect x="40" y="0" width="5" height="5" fill="#e1e1e5"/><rect x="45" y="0" width="5" height="5" fill="#dcdce1"/><rect x="50" y="0" width="5" height="5" fill="#e3e2e4"/><rect x="55" y="0" width="5" height="5" fill="#dbdbe0"/><rect x="60" y="0" width="5" height="5" fill="#d5d5da"/><rect x="65" y="0" width="5" height="5" fill="#dfdfe3"/><rect x="70" y="0" width="5" height="5" fill="#e7e8ed"/><rect x="75" y="0" width="5" height="5" fill="#bfc3ce"/><rect x="80" y="0" width="5" height="5" fill="#d2d2d7"/><rect x="85" y="0" width="5" height="5" fill="#e3e2e4"/><rect x="90" y="0" width="5" height="5" fill="#dbdbe0"/><rect x="95" y="0" width="5" height="5" fill="#e1e1e5"/><rect x="100" y="0" width="5" height="5" fill="#e5e5e9"/><rect x="105" y="0" width="5" height="5" fill="#d2d0d2"/><rect x="110" y="0" width="5" height="5" fill="#ededf2"/><rect x="115" y="0" width="5" height="5" fill="#c6c6cc"/><rect x="120" y="0" width="5" height="5" fill="#e1e2e8"/><rect x="125" y="0" width="5" height="5" fill="#e0dfe1"/><rect x="130" y="0" width="5" height="5" fill="#cac7c8"/><rect x="135" y="0" width="5" height="5" fill="#e4e3e5"/><rect x="140" y="0" width="5" height="5" fill="#cdd0d9"/><rect x="145" y="0" width="5" height="5" fill="#e8e8ec"/><rect x="150" y="0" width="5" height="5" fill="#e9e8eb"/><rect x="155" y="0" width="5" height="5" fill="#d3d1d3"/><rect x="160" y="0" width="5" height="5" fill="#dee0e6"/><rect x="165" y="0" width="5" height="5" fill="#e4e4e8"/><rect x="170" y="0" width="5" height="5" fill="#e8e7ea"/><rect x="0" y="5" width="5" height="5" fill="#c9c9ce"/><rect x="5" y="5" width="5" height="5" fill="#adadb4"/><rect x="10" y="5" width="5" height="5" fill="#cbcbd0"/><rect x="15" y="5" width="5" height="5" fill="#b7b7be"/><rect x="20" y="5" width="5" height="5" fill="#c7c7cd"/><rect x="25" y="5" width="5" height="5" fill="#e9e9ed"/><rect x="30" y="5" width="5" height="5" fill="#c4c4cb"/><rect x="35" y="5" width="5" height="5" fill="#c1c1c8"/><rect x="40" y="5" width="5" height="5" fill="#b1b1b8"/><rect x="45" y="5" width="5" height="5" fill="#c3c0c0"/><rect x="50" y="5" width="5" height="5" fill="#c4c8d2"/><rect x="55" y="5" width="5" height="5" fill="#b2b7c4"/><rect x="60" y="5" width="5" height="5" fill="#b7b3b4"/><rect x="65" y="5" width="5" height="5" fill="#bcbcc2"/><rect x="70" y="5" width="5" height="5" fill="#e8e7ea"/><rect x="75" y="5" width="5" height="5" fill="#b3b3ba"/><rect x="80" y="5" width="5" height="5" fill="#bbb7b7"/><rect x="85" y="5" width="5" height="5" fill="#c2c2c8"/><rect x="90" y="5" width="5" height="5" fill="#b2b7c4"/><rect x="95" y="5" width="5" height="5" fill="#c0c4d0"/><rect x="100" y="5" width="5" height="5" fill="#b9b5b5"/><rect x="105" y="5" width="5" height="5" fill="#c5c9d3"/><rect x="110" y="5" width="5" height="5" fill="#dadce3"/><rect x="115" y="5" width="5" height="5" fill="#ceced4"/><rect x="120" y="5" width="5" height="5" fill="#bfbcbc"/><rect x="125" y="5" width="5" height="5" fill="#bcbcc3"/><rect x="130" y="5" width="5" height="5" fill="#ababb2"/><rect x="135" y="5" width="5" height="5" fill="#c8c8ce"/><rect x="140" y="5" width="5" height="5" fill="#b6bbc7"/><rect x="145" y="5" width="5" height="5" fill="#c7c7cd"/><rect x="150" y="5" width="5" height="5" fill="#c8c8ce"/><rect x="155" y="5" width="5" height="5" fill="#c1bebd"/><rect x="160" y="5" width="5" height="5" fill="#cfcdce"/><rect x="165" y="5" width="5" height="5" fill="#b6b6bd"/><rect x="170" y="5" width="5" height="5" fill="#d5d7df"/><rect x="0" y="10" width="5" height="5" fill="#cdcdd3"/><rect x="5" y="10" width="5" height="5" fill="#e4e3e5"/><rect x="10" y="10" width="5" height="5" fill="#e9e8eb"/><rect x="15" y="10" width="5" height="5" fill="#e4e4e8"/><rect x="20" y="10" width="5" height="5" fill="#e2e3e9"/><rect x="25" y="10" width="5" height="5" fill="#edecef"/><rect x="30" y="10" width="5" height="5" fill="#d6d8e0"/><rect x="35" y="10" width="5" height="5" fill="#e5e4e7"/><rect x="40" y="10" width="5" height="5" fill="#dddde2"/><rect x="45" y="10" width="5" height="5" fill="#e5e6eb"/><rect x="50" y="10" width="5" height="5" fill="#e2e2e7"/><rect x="55" y="10" width="5" height="5" fill="#cacdd7"/><rect x="60" y="10" width="5" height="5" fill="#e8e7ea"/><rect x="65" y="10" width="5" height="5" fill="#dcdee4"/><rect x="70" y="10" width="5" height="5" fill="#ededf1"/><rect x="75" y="10" width="5" height="5" fill="#e9e9ed"/><rect x="80" y="10" width="5" height="5" fill="#e2e2e6"/><rect x="85" y="10" width="5" height="5" fill="#dcdce0"/><rect x="90" y="10" width="5" height="5" fill="#cdcdd3"/><rect x="95" y="10" width="5" height="5" fill="#e0e1e7"/><rect x="100" y="10" width="5" height="5" fill="#e6e5e8"/><rect x="105" y="10" width="5" height="5" fill="#e4e5ea"/><rect x="110" y="10" width="5" height="5" fill="#ededf1"/><rect x="115" y="10" width="5" height="5" fill="#dddbdd"/><rect x="120" y="10" width="5" height="5" fill="#e5e5e9"/><rect x="125" y="10" width="5" height="5" fill="#dcdce0"/><rect x="130" y="10" width="5" height="5" fill="#e3e3e8"/><rect x="135" y="10" width="5" height="5" fill="#e1e1e5"/><rect x="140" y="10" width="5" height="5" fill="#dad8da"/><rect x="145" y="10" width="5" height="5" fill="#d9d9de"/><rect x="150" y="10" width="5" height="5" fill="#e5e4e7"/><rect x="155" y="10" width="5" height="5" fill="#e1e1e6"/><rect x="160" y="10" width="5" height="5" fill="#e1e0e2"/><rect x="165" y="10" width="5" height="5" fill="#e4e4e8"/><rect x="170" y="10" width="5" height="5" fill="#e7e7eb"/></svg>
<svg class="mz" style="left:50px;top:607px" width="140" height="15"><rect x="0" y="0" width="5" height="5" fill="#e4e4e6"/><rect x="5" y="0" width="5" height="5" fill="#d6d4d4"/><rect x="10" y="0" width="5" height="5" fill="#cfd2da"/><rect x="15" y="0" width="5" height="5" fill="#d5d8de"/><rect x="20" y="0" width="5" height="5" fill="#c6c6ca"/><rect x="25" y="0" width="5" height="5" fill="#dcdada"/><rect x="30" y="0" width="5" height="5" fill="#cfcfd3"/><rect x="35" y="0" width="5" height="5" fill="#c9c9cd"/><rect x="40" y="0" width="5" height="5" fill="#cfcfd3"/><rect x="45" y="0" width="5" height="5" fill="#c5c9d2"/><rect x="50" y="0" width="5" height="5" fill="#cccfd7"/><rect x="55" y="0" width="5" height="5" fill="#e7e7e9"/><rect x="60" y="0" width="5" height="5" fill="#f5f5f6"/><rect x="65" y="0" width="5" height="5" fill="#cdcdd1"/><rect x="70" y="0" width="5" height="5" fill="#dddbdb"/><rect x="75" y="0" width="5" height="5" fill="#d7d5d5"/><rect x="80" y="0" width="5" height="5" fill="#d5d8de"/><rect x="85" y="0" width="5" height="5" fill="#c8ccd5"/><rect x="90" y="0" width="5" height="5" fill="#c6c6cb"/><rect x="95" y="0" width="5" height="5" fill="#dfdfe1"/><rect x="100" y="0" width="5" height="5" fill="#d9d9dc"/><rect x="105" y="0" width="5" height="5" fill="#bec2cc"/><rect x="110" y="0" width="5" height="5" fill="#d2d0cf"/><rect x="115" y="0" width="5" height="5" fill="#f5f5f6"/><rect x="120" y="0" width="5" height="5" fill="#c3c3c8"/><rect x="125" y="0" width="5" height="5" fill="#c6c6cb"/><rect x="130" y="0" width="5" height="5" fill="#dbd9d9"/><rect x="135" y="0" width="5" height="5" fill="#dfe1e5"/><rect x="0" y="5" width="5" height="5" fill="#ccccd0"/><rect x="5" y="5" width="5" height="5" fill="#abb1be"/><rect x="10" y="5" width="5" height="5" fill="#ededee"/><rect x="15" y="5" width="5" height="5" fill="#d7d7da"/><rect x="20" y="5" width="5" height="5" fill="#d7d5d5"/><rect x="25" y="5" width="5" height="5" fill="#d6d6d9"/><rect x="30" y="5" width="5" height="5" fill="#d0d0d4"/><rect x="35" y="5" width="5" height="5" fill="#cfcfd3"/><rect x="40" y="5" width="5" height="5" fill="#c8ccd4"/><rect x="45" y="5" width="5" height="5" fill="#d2d2d6"/><rect x="50" y="5" width="5" height="5" fill="#d9d7d7"/><rect x="55" y="5" width="5" height="5" fill="#ccccd0"/><rect x="60" y="5" width="5" height="5" fill="#f5f5f6"/><rect x="65" y="5" width="5" height="5" fill="#d2d2d6"/><rect x="70" y="5" width="5" height="5" fill="#d2d2d5"/><rect x="75" y="5" width="5" height="5" fill="#d1d1d5"/><rect x="80" y="5" width="5" height="5" fill="#d4d4d8"/><rect x="85" y="5" width="5" height="5" fill="#d1cfce"/><rect x="90" y="5" width="5" height="5" fill="#b9bec9"/><rect x="95" y="5" width="5" height="5" fill="#dddde0"/><rect x="100" y="5" width="5" height="5" fill="#d7d7da"/><rect x="105" y="5" width="5" height="5" fill="#c6cad3"/><rect x="110" y="5" width="5" height="5" fill="#c2c6cf"/><rect x="115" y="5" width="5" height="5" fill="#e8e7e7"/><rect x="120" y="5" width="5" height="5" fill="#babac0"/><rect x="125" y="5" width="5" height="5" fill="#bbbbc0"/><rect x="130" y="5" width="5" height="5" fill="#bfbcbb"/><rect x="135" y="5" width="5" height="5" fill="#e0dede"/><rect x="0" y="10" width="5" height="5" fill="#f5f5f5"/><rect x="5" y="10" width="5" height="5" fill="#e8e8ea"/><rect x="10" y="10" width="5" height="5" fill="#e8e8ea"/><rect x="15" y="10" width="5" height="5" fill="#e1e1e3"/><rect x="20" y="10" width="5" height="5" fill="#edeef0"/><rect x="25" y="10" width="5" height="5" fill="#eeeeef"/><rect x="30" y="10" width="5" height="5" fill="#d9d9dc"/><rect x="35" y="10" width="5" height="5" fill="#e6e6e8"/><rect x="40" y="10" width="5" height="5" fill="#e8e7e7"/><rect x="45" y="10" width="5" height="5" fill="#d9d9dc"/><rect x="50" y="10" width="5" height="5" fill="#eae9e9"/><rect x="55" y="10" width="5" height="5" fill="#e4e4e6"/><rect x="60" y="10" width="5" height="5" fill="#ecedf0"/><rect x="65" y="10" width="5" height="5" fill="#dddde0"/><rect x="70" y="10" width="5" height="5" fill="#e6e6e8"/><rect x="75" y="10" width="5" height="5" fill="#e8e9ed"/><rect x="80" y="10" width="5" height="5" fill="#ecebec"/><rect x="85" y="10" width="5" height="5" fill="#e5e5e7"/><rect x="90" y="10" width="5" height="5" fill="#e3e3e5"/><rect x="95" y="10" width="5" height="5" fill="#ecedf0"/><rect x="100" y="10" width="5" height="5" fill="#e0dede"/><rect x="105" y="10" width="5" height="5" fill="#e4e4e6"/><rect x="110" y="10" width="5" height="5" fill="#e8e7e7"/><rect x="115" y="10" width="5" height="5" fill="#efeeee"/><rect x="120" y="10" width="5" height="5" fill="#f4f4f5"/><rect x="125" y="10" width="5" height="5" fill="#e9e8e8"/><rect x="130" y="10" width="5" height="5" fill="#ececed"/><rect x="135" y="10" width="5" height="5" fill="#f0f0f1"/></svg>
<svg class="mz" style="left:205px;top:607px" width="195" height="15"><rect x="0" y="0" width="5" height="5" fill="#efeeee"/><rect x="5" y="0" width="5" height="5" fill="#e9e9eb"/><rect x="10" y="0" width="5" height="5" fill="#e8e7e7"/><rect x="15" y="0" width="5" height="5" fill="#e4e4e6"/><rect x="20" y="0" width="5" height="5" fill="#e7e7e9"/><rect x="25" y="0" width="5" height="5" fill="#e0dede"/><rect x="30" y="0" width="5" height="5" fill="#c7c7cc"/><rect x="35" y="0" width="5" height="5" fill="#e4e4e7"/><rect x="40" y="0" width="5" height="5" fill="#e1e1e3"/><rect x="45" y="0" width="5" height="5" fill="#d8d8db"/><rect x="50" y="0" width="5" height="5" fill="#e3e3e5"/><rect x="55" y="0" width="5" height="5" fill="#d2d0cf"/><rect x="60" y="0" width="5" height="5" fill="#e9eaed"/><rect x="65" y="0" width="5" height="5" fill="#e2e2e4"/><rect x="70" y="0" width="5" height="5" fill="#dcdada"/><rect x="75" y="0" width="5" height="5" fill="#eaeaec"/><rect x="80" y="0" width="5" height="5" fill="#e3e3e5"/><rect x="85" y="0" width="5" height="5" fill="#e7e6e6"/><rect x="90" y="0" width="5" height="5" fill="#dfdfe2"/><rect x="95" y="0" width="5" height="5" fill="#f4f4f5"/><rect x="100" y="0" width="5" height="5" fill="#e4e4e6"/><rect x="105" y="0" width="5" height="5" fill="#e9e9ea"/><rect x="110" y="0" width="5" height="5" fill="#eae9e9"/><rect x="115" y="0" width="5" height="5" fill="#dfe1e5"/><rect x="120" y="0" width="5" height="5" fill="#e2e4e8"/><rect x="125" y="0" width="5" height="5" fill="#e2e2e4"/><rect x="130" y="0" width="5" height="5" fill="#e8e8ea"/><rect x="135" y="0" width="5" height="5" fill="#e4e4e6"/><rect x="140" y="0" width="5" height="5" fill="#e5e5e7"/><rect x="145" y="0" width="5" height="5" fill="#e2e2e4"/><rect x="150" y="0" width="5" height="5" fill="#eaeaec"/><rect x="155" y="0" width="5" height="5" fill="#dbd9d9"/><rect x="160" y="0" width="5" height="5" fill="#c9c6c6"/><rect x="165" y="0" width="5" height="5" fill="#f3f3f4"/><rect x="170" y="0" width="5" height="5" fill="#e5e4e5"/><rect x="175" y="0" width="5" height="5" fill="#e5e4e4"/><rect x="180" y="0" width="5" height="5" fill="#ececed"/><rect x="185" y="0" width="5" height="5" fill="#dfe1e5"/><rect x="190" y="0" width="5" height="5" fill="#ececee"/><rect x="0" y="5" width="5" height="5" fill="#d2d2d5"/><rect x="5" y="5" width="5" height="5" fill="#b9b9bf"/><rect x="10" y="5" width="5" height="5" fill="#cdcdd1"/><rect x="15" y="5" width="5" height="5" fill="#b7b7bd"/><rect x="20" y="5" width="5" height="5" fill="#c5c2c0"/><rect x="25" y="5" width="5" height="5" fill="#bfbfc4"/><rect x="30" y="5" width="5" height="5" fill="#b9bec9"/><rect x="35" y="5" width="5" height="5" fill="#cbced6"/><rect x="40" y="5" width="5" height="5" fill="#b6bbc6"/><rect x="45" y="5" width="5" height="5" fill="#bebbb9"/><rect x="50" y="5" width="5" height="5" fill="#cbc8c7"/><rect x="55" y="5" width="5" height="5" fill="#c7c7cb"/><rect x="60" y="5" width="5" height="5" fill="#b3b3b9"/><rect x="65" y="5" width="5" height="5" fill="#c2bfbd"/><rect x="70" y="5" width="5" height="5" fill="#b8b8bd"/><rect x="75" y="5" width="5" height="5" fill="#d3d3d7"/><rect x="80" y="5" width="5" height="5" fill="#c1c5ce"/><rect x="85" y="5" width="5" height="5" fill="#c3c7d0"/><rect x="90" y="5" width="5" height="5" fill="#c1bebc"/><rect x="95" y="5" width="5" height="5" fill="#e6e5e5"/><rect x="100" y="5" width="5" height="5" fill="#cbcbcf"/><rect x="105" y="5" width="5" height="5" fill="#b9b5b5"/><rect x="110" y="5" width="5" height="5" fill="#d0d0d4"/><rect x="115" y="5" width="5" height="5" fill="#b9b9bf"/><rect x="120" y="5" width="5" height="5" fill="#c4c4c8"/><rect x="125" y="5" width="5" height="5" fill="#b2b2b8"/><rect x="130" y="5" width="5" height="5" fill="#dddfe4"/><rect x="135" y="5" width="5" height="5" fill="#bcb8b7"/><rect x="140" y="5" width="5" height="5" fill="#d0cecd"/><rect x="145" y="5" width="5" height="5" fill="#c1c1c6"/><rect x="150" y="5" width="5" height="5" fill="#d0cdcc"/><rect x="155" y="5" width="5" height="5" fill="#babac0"/><rect x="160" y="5" width="5" height="5" fill="#c8c8cc"/><rect x="165" y="5" width="5" height="5" fill="#e6e7eb"/><rect x="170" y="5" width="5" height="5" fill="#c9cdd5"/><rect x="175" y="5" width="5" height="5" fill="#c6c6cb"/><rect x="180" y="5" width="5" height="5" fill="#bbbbc0"/><rect x="185" y="5" width="5" height="5" fill="#ceced2"/><rect x="190" y="5" width="5" height="5" fill="#d3d3d6"/><rect x="0" y="10" width="5" height="5" fill="#e6e7eb"/><rect x="5" y="10" width="5" height="5" fill="#e8e7e7"/><rect x="10" y="10" width="5" height="5" fill="#e4e6ea"/><rect x="15" y="10" width="5" height="5" fill="#e1e3e7"/><rect x="20" y="10" width="5" height="5" fill="#eeeded"/><rect x="25" y="10" width="5" height="5" fill="#e2e1e2"/><rect x="30" y="10" width="5" height="5" fill="#dadce2"/><rect x="35" y="10" width="5" height="5" fill="#f3f2f3"/><rect x="40" y="10" width="5" height="5" fill="#b7bcc7"/><rect x="45" y="10" width="5" height="5" fill="#eaebed"/><rect x="50" y="10" width="5" height="5" fill="#e3e3e5"/><rect x="55" y="10" width="5" height="5" fill="#e1e3e7"/><rect x="60" y="10" width="5" height="5" fill="#e7e7e9"/><rect x="65" y="10" width="5" height="5" fill="#e1e3e7"/><rect x="70" y="10" width="5" height="5" fill="#eae9e9"/><rect x="75" y="10" width="5" height="5" fill="#ecebeb"/><rect x="80" y="10" width="5" height="5" fill="#e3e3e5"/><rect x="85" y="10" width="5" height="5" fill="#ececed"/><rect x="90" y="10" width="5" height="5" fill="#c9cdd5"/><rect x="95" y="10" width="5" height="5" fill="#ecedf0"/><rect x="100" y="10" width="5" height="5" fill="#e4e4e6"/><rect x="105" y="10" width="5" height="5" fill="#edeced"/><rect x="110" y="10" width="5" height="5" fill="#eeeeef"/><rect x="115" y="10" width="5" height="5" fill="#ecebea"/><rect x="120" y="10" width="5" height="5" fill="#ececed"/><rect x="125" y="10" width="5" height="5" fill="#e7e8ec"/><rect x="130" y="10" width="5" height="5" fill="#e9e8e8"/><rect x="135" y="10" width="5" height="5" fill="#ecedef"/><rect x="140" y="10" width="5" height="5" fill="#e5e5e7"/><rect x="145" y="10" width="5" height="5" fill="#e3e2e2"/><rect x="150" y="10" width="5" height="5" fill="#e9eaed"/><rect x="155" y="10" width="5" height="5" fill="#e8e8ea"/><rect x="160" y="10" width="5" height="5" fill="#ebeaea"/><rect x="165" y="10" width="5" height="5" fill="#ecebeb"/><rect x="170" y="10" width="5" height="5" fill="#e5e4e4"/><rect x="175" y="10" width="5" height="5" fill="#e3e3e6"/><rect x="180" y="10" width="5" height="5" fill="#eeedee"/><rect x="185" y="10" width="5" height="5" fill="#edeef0"/><rect x="190" y="10" width="5" height="5" fill="#efeeee"/></svg>
<svg class="mz" style="left:425px;top:607px" width="175" height="15"><rect x="0" y="0" width="5" height="5" fill="#d2d2d6"/><rect x="5" y="0" width="5" height="5" fill="#dfdfe1"/><rect x="10" y="0" width="5" height="5" fill="#e6e5e5"/><rect x="15" y="0" width="5" height="5" fill="#e9e8e8"/><rect x="20" y="0" width="5" height="5" fill="#e9e8e8"/><rect x="25" y="0" width="5" height="5" fill="#e4e4e6"/><rect x="30" y="0" width="5" height="5" fill="#f5f5f6"/><rect x="35" y="0" width="5" height="5" fill="#eaeaec"/><rect x="40" y="0" width="5" height="5" fill="#c6cad3"/><rect x="45" y="0" width="5" height="5" fill="#cdcdd1"/><rect x="50" y="0" width="5" height="5" fill="#cdcdd1"/><rect x="55" y="0" width="5" height="5" fill="#d1d1d5"/><rect x="60" y="0" width="5" height="5" fill="#c5c9d3"/><rect x="65" y="0" width="5" height="5" fill="#d3d3d6"/><rect x="70" y="0" width="5" height="5" fill="#cfd2da"/><rect x="75" y="0" width="5" height="5" fill="#c6c6cb"/><rect x="80" y="0" width="5" height="5" fill="#d9d7d8"/><rect x="85" y="0" width="5" height="5" fill="#e7e7e9"/><rect x="90" y="0" width="5" height="5" fill="#c7c4c4"/><rect x="95" y="0" width="5" height="5" fill="#cfcfd3"/><rect x="100" y="0" width="5" height="5" fill="#cfd2d9"/><rect x="105" y="0" width="5" height="5" fill="#dedcdc"/><rect x="110" y="0" width="5" height="5" fill="#d1cfce"/><rect x="115" y="0" width="5" height="5" fill="#dddbdb"/><rect x="120" y="0" width="5" height="5" fill="#d0cdcc"/><rect x="125" y="0" width="5" height="5" fill="#d5d5d8"/><rect x="130" y="0" width="5" height="5" fill="#d0cece"/><rect x="135" y="0" width="5" height="5" fill="#ced1d9"/><rect x="140" y="0" width="5" height="5" fill="#f0f0f1"/><rect x="145" y="0" width="5" height="5" fill="#d5d3d3"/><rect x="150" y="0" width="5" height="5" fill="#f4f4f6"/><rect x="155" y="0" width="5" height="5" fill="#dedee1"/><rect x="160" y="0" width="5" height="5" fill="#eeedee"/><rect x="165" y="0" width="5" height="5" fill="#c8ccd4"/><rect x="170" y="0" width="5" height="5" fill="#d1cfce"/><rect x="0" y="5" width="5" height="5" fill="#dfdfe2"/><rect x="5" y="5" width="5" height="5" fill="#bfc3cd"/><rect x="10" y="5" width="5" height="5" fill="#ccccd0"/><rect x="15" y="5" width="5" height="5" fill="#c6c6ca"/><rect x="20" y="5" width="5" height="5" fill="#a7a7ae"/><rect x="25" y="5" width="5" height="5" fill="#d0cecd"/><rect x="30" y="5" width="5" height="5" fill="#f5f5f6"/><rect x="35" y="5" width="5" height="5" fill="#ededee"/><rect x="40" y="5" width="5" height="5" fill="#d1d4dc"/><rect x="45" y="5" width="5" height="5" fill="#cfcfd3"/><rect x="50" y="5" width="5" height="5" fill="#c2c2c7"/><rect x="55" y="5" width="5" height="5" fill="#e1dfde"/><rect x="60" y="5" width="5" height="5" fill="#ccccd0"/><rect x="65" y="5" width="5" height="5" fill="#abb1be"/><rect x="70" y="5" width="5" height="5" fill="#c6cad3"/><rect x="75" y="5" width="5" height="5" fill="#adadb4"/><rect x="80" y="5" width="5" height="5" fill="#d7dae0"/><rect x="85" y="5" width="5" height="5" fill="#dddfe4"/><rect x="90" y="5" width="5" height="5" fill="#c6c6ca"/><rect x="95" y="5" width="5" height="5" fill="#cfcfd3"/><rect x="100" y="5" width="5" height="5" fill="#d1d4dc"/><rect x="105" y="5" width="5" height="5" fill="#c0c0c5"/><rect x="110" y="5" width="5" height="5" fill="#d3d1d0"/><rect x="115" y="5" width="5" height="5" fill="#aab0bd"/><rect x="120" y="5" width="5" height="5" fill="#cac7c6"/><rect x="125" y="5" width="5" height="5" fill="#d5d8de"/><rect x="130" y="5" width="5" height="5" fill="#c5c5ca"/><rect x="135" y="5" width="5" height="5" fill="#dbdbde"/><rect x="140" y="5" width="5" height="5" fill="#e6e5e5"/><rect x="145" y="5" width="5" height="5" fill="#d6d4d3"/><rect x="150" y="5" width="5" height="5" fill="#f2f1f2"/><rect x="155" y="5" width="5" height="5" fill="#b8b8be"/><rect x="160" y="5" width="5" height="5" fill="#c0c0c5"/><rect x="165" y="5" width="5" height="5" fill="#cfcccc"/><rect x="170" y="5" width="5" height="5" fill="#d2d2d6"/><rect x="0" y="10" width="5" height="5" fill="#e9e9ea"/><rect x="5" y="10" width="5" height="5" fill="#e4e6ea"/><rect x="10" y="10" width="5" height="5" fill="#e4e4e6"/><rect x="15" y="10" width="5" height="5" fill="#e4e4e6"/><rect x="20" y="10" width="5" height="5" fill="#e0e2e7"/><rect x="25" y="10" width="5" height="5" fill="#ededef"/><rect x="30" y="10" width="5" height="5" fill="#e0e0e2"/><rect x="35" y="10" width="5" height="5" fill="#dfdddd"/><rect x="40" y="10" width="5" height="5" fill="#dadadd"/><rect x="45" y="10" width="5" height="5" fill="#e4e4e6"/><rect x="50" y="10" width="5" height="5" fill="#e5e5e7"/><rect x="55" y="10" width="5" height="5" fill="#e3e1e0"/><rect x="60" y="10" width="5" height="5" fill="#e0e2e7"/><rect x="65" y="10" width="5" height="5" fill="#ededee"/><rect x="70" y="10" width="5" height="5" fill="#eae9e9"/><rect x="75" y="10" width="5" height="5" fill="#eeeef0"/><rect x="80" y="10" width="5" height="5" fill="#e3e3e5"/><rect x="85" y="10" width="5" height="5" fill="#e3e5e9"/><rect x="90" y="10" width="5" height="5" fill="#e3e3e5"/><rect x="95" y="10" width="5" height="5" fill="#e1e3e7"/><rect x="100" y="10" width="5" height="5" fill="#e3e3e5"/><rect x="105" y="10" width="5" height="5" fill="#e4e3e4"/><rect x="110" y="10" width="5" height="5" fill="#e6e5e5"/><rect x="115" y="10" width="5" height="5" fill="#f3f3f5"/><rect x="120" y="10" width="5" height="5" fill="#eeeef0"/><rect x="125" y="10" width="5" height="5" fill="#e5e4e4"/><rect x="130" y="10" width="5" height="5" fill="#e4e4e6"/><rect x="135" y="10" width="5" height="5" fill="#dee0e5"/><rect x="140" y="10" width="5" height="5" fill="#efeff0"/><rect x="145" y="10" width="5" height="5" fill="#d6d9e0"/><rect x="150" y="10" width="5" height="5" fill="#e9eaed"/><rect x="155" y="10" width="5" height="5" fill="#ccccd0"/><rect x="160" y="10" width="5" height="5" fill="#eeeded"/><rect x="165" y="10" width="5" height="5" fill="#e5e5e7"/><rect x="170" y="10" width="5" height="5" fill="#eeeeef"/></svg>
<svg class="mz" style="left:51px;top:650px" width="140" height="15"><rect x="0" y="0" width="5" height="5" fill="#e1e0e2"/><rect x="5" y="0" width="5" height="5" fill="#cbced8"/><rect x="10" y="0" width="5" height="5" fill="#cbced7"/><rect x="15" y="0" width="5" height="5" fill="#d5d3d4"/><rect x="20" y="0" width="5" height="5" fill="#cdcbcc"/><rect x="25" y="0" width="5" height="5" fill="#d5d7df"/><rect x="30" y="0" width="5" height="5" fill="#cecccd"/><rect x="35" y="0" width="5" height="5" fill="#c5c5cb"/><rect x="40" y="0" width="5" height="5" fill="#c8cbd4"/><rect x="45" y="0" width="5" height="5" fill="#c5c5cb"/><rect x="50" y="0" width="5" height="5" fill="#cbcbd1"/><rect x="55" y="0" width="5" height="5" fill="#e0e1e8"/><rect x="60" y="0" width="5" height="5" fill="#eeeef2"/><rect x="65" y="0" width="5" height="5" fill="#c9c9ce"/><rect x="70" y="0" width="5" height="5" fill="#d5d5da"/><rect x="75" y="0" width="5" height="5" fill="#cfcfd4"/><rect x="80" y="0" width="5" height="5" fill="#cccfd8"/><rect x="85" y="0" width="5" height="5" fill="#d8d8dc"/><rect x="90" y="0" width="5" height="5" fill="#cacad0"/><rect x="95" y="0" width="5" height="5" fill="#dadadf"/><rect x="100" y="0" width="5" height="5" fill="#ccc9ca"/><rect x="105" y="0" width="5" height="5" fill="#cecccd"/><rect x="110" y="0" width="5" height="5" fill="#dadadf"/><rect x="115" y="0" width="5" height="5" fill="#eeeef2"/><rect x="120" y="0" width="5" height="5" fill="#c5c2c3"/><rect x="125" y="0" width="5" height="5" fill="#c7c4c6"/><rect x="130" y="0" width="5" height="5" fill="#d4d4d9"/><rect x="135" y="0" width="5" height="5" fill="#dedddf"/><rect x="0" y="5" width="5" height="5" fill="#c7c7cd"/><rect x="5" y="5" width="5" height="5" fill="#aeaeb6"/><rect x="10" y="5" width="5" height="5" fill="#e7e7eb"/><rect x="15" y="5" width="5" height="5" fill="#c5c5cb"/><rect x="20" y="5" width="5" height="5" fill="#b8b4b5"/><rect x="25" y="5" width="5" height="5" fill="#cfcdce"/><rect x="30" y="5" width="5" height="5" fill="#d0cece"/><rect x="35" y="5" width="5" height="5" fill="#cbcbd0"/><rect x="40" y="5" width="5" height="5" fill="#cccacb"/><rect x="45" y="5" width="5" height="5" fill="#cacdd7"/><rect x="50" y="5" width="5" height="5" fill="#d1d1d7"/><rect x="55" y="5" width="5" height="5" fill="#c8c8ce"/><rect x="60" y="5" width="5" height="5" fill="#eeeef2"/><rect x="65" y="5" width="5" height="5" fill="#d2d0d1"/><rect x="70" y="5" width="5" height="5" fill="#cdcdd3"/><rect x="75" y="5" width="5" height="5" fill="#cacdd7"/><rect x="80" y="5" width="5" height="5" fill="#dadadf"/><rect x="85" y="5" width="5" height="5" fill="#c4c1c2"/><rect x="90" y="5" width="5" height="5" fill="#d3d1d2"/><rect x="95" y="5" width="5" height="5" fill="#eeeef2"/><rect x="100" y="5" width="5" height="5" fill="#d0ced0"/><rect x="105" y="5" width="5" height="5" fill="#b6b6bd"/><rect x="110" y="5" width="5" height="5" fill="#c1c1c7"/><rect x="115" y="5" width="5" height="5" fill="#dee0e7"/><rect x="120" y="5" width="5" height="5" fill="#b7b7be"/><rect x="125" y="5" width="5" height="5" fill="#b8b8bf"/><rect x="130" y="5" width="5" height="5" fill="#b6b6bd"/><rect x="135" y="5" width="5" height="5" fill="#d8d8dd"/><rect x="0" y="10" width="5" height="5" fill="#eeeef2"/><rect x="5" y="10" width="5" height="5" fill="#e3e3e7"/><rect x="10" y="10" width="5" height="5" fill="#e4e3e5"/><rect x="15" y="10" width="5" height="5" fill="#dedddf"/><rect x="20" y="10" width="5" height="5" fill="#dbdde4"/><rect x="25" y="10" width="5" height="5" fill="#e8e8ec"/><rect x="30" y="10" width="5" height="5" fill="#d4d4da"/><rect x="35" y="10" width="5" height="5" fill="#e2e1e4"/><rect x="40" y="10" width="5" height="5" fill="#dee0e7"/><rect x="45" y="10" width="5" height="5" fill="#d4d4d9"/><rect x="50" y="10" width="5" height="5" fill="#e1e2e8"/><rect x="55" y="10" width="5" height="5" fill="#dcdee5"/><rect x="60" y="10" width="5" height="5" fill="#e7e7eb"/><rect x="65" y="10" width="5" height="5" fill="#d8d8dd"/><rect x="70" y="10" width="5" height="5" fill="#e0e0e4"/><rect x="75" y="10" width="5" height="5" fill="#e2e3e9"/><rect x="80" y="10" width="5" height="5" fill="#e3e4ea"/><rect x="85" y="10" width="5" height="5" fill="#dedee3"/><rect x="90" y="10" width="5" height="5" fill="#e8e8ec"/><rect x="95" y="10" width="5" height="5" fill="#e9e9ed"/><rect x="100" y="10" width="5" height="5" fill="#dedee3"/><rect x="105" y="10" width="5" height="5" fill="#e4e5ea"/><rect x="110" y="10" width="5" height="5" fill="#e2e1e4"/><rect x="115" y="10" width="5" height="5" fill="#e9e8eb"/><rect x="120" y="10" width="5" height="5" fill="#efeef1"/><rect x="125" y="10" width="5" height="5" fill="#e0e1e8"/><rect x="130" y="10" width="5" height="5" fill="#e6e6ea"/><rect x="135" y="10" width="5" height="5" fill="#eaeaee"/></svg>
<svg class="mz" style="left:206px;top:650px" width="195" height="15"><rect x="0" y="0" width="5" height="5" fill="#e7e8ed"/><rect x="5" y="0" width="5" height="5" fill="#e5e4e7"/><rect x="10" y="0" width="5" height="5" fill="#e0e1e7"/><rect x="15" y="0" width="5" height="5" fill="#dcdee5"/><rect x="20" y="0" width="5" height="5" fill="#e1e1e5"/><rect x="25" y="0" width="5" height="5" fill="#d8d8dd"/><rect x="30" y="0" width="5" height="5" fill="#c4c4ca"/><rect x="35" y="0" width="5" height="5" fill="#dddfe5"/><rect x="40" y="0" width="5" height="5" fill="#dbdbe0"/><rect x="45" y="0" width="5" height="5" fill="#d6d4d6"/><rect x="50" y="0" width="5" height="5" fill="#dfdee1"/><rect x="55" y="0" width="5" height="5" fill="#cecccd"/><rect x="60" y="0" width="5" height="5" fill="#e4e4e8"/><rect x="65" y="0" width="5" height="5" fill="#dedde0"/><rect x="70" y="0" width="5" height="5" fill="#d4d4d9"/><rect x="75" y="0" width="5" height="5" fill="#e4e4e9"/><rect x="80" y="0" width="5" height="5" fill="#dddde2"/><rect x="85" y="0" width="5" height="5" fill="#e2e1e3"/><rect x="90" y="0" width="5" height="5" fill="#dadadf"/><rect x="95" y="0" width="5" height="5" fill="#eeeef2"/><rect x="100" y="0" width="5" height="5" fill="#dfdfe3"/><rect x="105" y="0" width="5" height="5" fill="#e2e3e9"/><rect x="110" y="0" width="5" height="5" fill="#e2e2e7"/><rect x="115" y="0" width="5" height="5" fill="#d9dbe2"/><rect x="120" y="0" width="5" height="5" fill="#dedee3"/><rect x="125" y="0" width="5" height="5" fill="#dbdde3"/><rect x="130" y="0" width="5" height="5" fill="#e2e2e6"/><rect x="135" y="0" width="5" height="5" fill="#dddfe5"/><rect x="140" y="0" width="5" height="5" fill="#e1e0e3"/><rect x="145" y="0" width="5" height="5" fill="#dedde0"/><rect x="150" y="0" width="5" height="5" fill="#e5e4e8"/><rect x="155" y="0" width="5" height="5" fill="#d6d4d7"/><rect x="160" y="0" width="5" height="5" fill="#c6c3c4"/><rect x="165" y="0" width="5" height="5" fill="#ececf0"/><rect x="170" y="0" width="5" height="5" fill="#dedee3"/><rect x="175" y="0" width="5" height="5" fill="#dedee2"/><rect x="180" y="0" width="5" height="5" fill="#e5e6eb"/><rect x="185" y="0" width="5" height="5" fill="#dddcdf"/><rect x="190" y="0" width="5" height="5" fill="#e8e7ea"/><rect x="0" y="5" width="5" height="5" fill="#cdcdd3"/><rect x="5" y="5" width="5" height="5" fill="#b6b6bd"/><rect x="10" y="5" width="5" height="5" fill="#c5c9d2"/><rect x="15" y="5" width="5" height="5" fill="#b4b4bb"/><rect x="20" y="5" width="5" height="5" fill="#bcbcc3"/><rect x="25" y="5" width="5" height="5" fill="#bbbbc2"/><rect x="30" y="5" width="5" height="5" fill="#bbbbc2"/><rect x="35" y="5" width="5" height="5" fill="#cacad0"/><rect x="40" y="5" width="5" height="5" fill="#bebbba"/><rect x="45" y="5" width="5" height="5" fill="#b0b5c2"/><rect x="50" y="5" width="5" height="5" fill="#c2c2c8"/><rect x="55" y="5" width="5" height="5" fill="#c3c3c9"/><rect x="60" y="5" width="5" height="5" fill="#abb1bf"/><rect x="65" y="5" width="5" height="5" fill="#b9b9bf"/><rect x="70" y="5" width="5" height="5" fill="#b5b5bc"/><rect x="75" y="5" width="5" height="5" fill="#cfcfd4"/><rect x="80" y="5" width="5" height="5" fill="#bdc1cc"/><rect x="85" y="5" width="5" height="5" fill="#bfc3ce"/><rect x="90" y="5" width="5" height="5" fill="#b8b8bf"/><rect x="95" y="5" width="5" height="5" fill="#dedee3"/><rect x="100" y="5" width="5" height="5" fill="#ccc9ca"/><rect x="105" y="5" width="5" height="5" fill="#b0b0b7"/><rect x="110" y="5" width="5" height="5" fill="#ccccd2"/><rect x="115" y="5" width="5" height="5" fill="#bcb9b9"/><rect x="120" y="5" width="5" height="5" fill="#bcc0cb"/><rect x="125" y="5" width="5" height="5" fill="#aab0be"/><rect x="130" y="5" width="5" height="5" fill="#dcdadc"/><rect x="135" y="5" width="5" height="5" fill="#b2b2b9"/><rect x="140" y="5" width="5" height="5" fill="#c4c8d2"/><rect x="145" y="5" width="5" height="5" fill="#bebec4"/><rect x="150" y="5" width="5" height="5" fill="#c2c6d1"/><rect x="155" y="5" width="5" height="5" fill="#b7b7be"/><rect x="160" y="5" width="5" height="5" fill="#c4c4ca"/><rect x="165" y="5" width="5" height="5" fill="#e2e2e6"/><rect x="170" y="5" width="5" height="5" fill="#c5c9d2"/><rect x="175" y="5" width="5" height="5" fill="#c3c3c9"/><rect x="180" y="5" width="5" height="5" fill="#bdbaba"/><rect x="185" y="5" width="5" height="5" fill="#cecccd"/><rect x="190" y="5" width="5" height="5" fill="#ceced4"/><rect x="0" y="10" width="5" height="5" fill="#e1e2e8"/><rect x="5" y="10" width="5" height="5" fill="#dee0e7"/><rect x="10" y="10" width="5" height="5" fill="#e2e1e4"/><rect x="15" y="10" width="5" height="5" fill="#dddde2"/><rect x="20" y="10" width="5" height="5" fill="#e8e7ea"/><rect x="25" y="10" width="5" height="5" fill="#d9dbe2"/><rect x="30" y="10" width="5" height="5" fill="#dad8da"/><rect x="35" y="10" width="5" height="5" fill="#ebecf0"/><rect x="40" y="10" width="5" height="5" fill="#b9b9c0"/><rect x="45" y="10" width="5" height="5" fill="#e5e5e9"/><rect x="50" y="10" width="5" height="5" fill="#dedee2"/><rect x="55" y="10" width="5" height="5" fill="#dddde2"/><rect x="60" y="10" width="5" height="5" fill="#e1e1e5"/><rect x="65" y="10" width="5" height="5" fill="#dddde2"/><rect x="70" y="10" width="5" height="5" fill="#e4e3e5"/><rect x="75" y="10" width="5" height="5" fill="#e4e4e8"/><rect x="80" y="10" width="5" height="5" fill="#e0dfe1"/><rect x="85" y="10" width="5" height="5" fill="#e6e6ea"/><rect x="90" y="10" width="5" height="5" fill="#c8c8ce"/><rect x="95" y="10" width="5" height="5" fill="#e6e7ec"/><rect x="100" y="10" width="5" height="5" fill="#dfdfe3"/><rect x="105" y="10" width="5" height="5" fill="#e6e6ea"/><rect x="110" y="10" width="5" height="5" fill="#e8e8ec"/><rect x="115" y="10" width="5" height="5" fill="#e3e4ea"/><rect x="120" y="10" width="5" height="5" fill="#e7e6e9"/><rect x="125" y="10" width="5" height="5" fill="#e5e4e6"/><rect x="130" y="10" width="5" height="5" fill="#e2e2e6"/><rect x="135" y="10" width="5" height="5" fill="#e7e7eb"/><rect x="140" y="10" width="5" height="5" fill="#e0e0e4"/><rect x="145" y="10" width="5" height="5" fill="#dddcdf"/><rect x="150" y="10" width="5" height="5" fill="#e5e4e8"/><rect x="155" y="10" width="5" height="5" fill="#e2e2e6"/><rect x="160" y="10" width="5" height="5" fill="#e5e4e6"/><rect x="165" y="10" width="5" height="5" fill="#e4e5ea"/><rect x="170" y="10" width="5" height="5" fill="#e0dfe1"/><rect x="175" y="10" width="5" height="5" fill="#dcdee5"/><rect x="180" y="10" width="5" height="5" fill="#e7e7eb"/><rect x="185" y="10" width="5" height="5" fill="#e7e8ed"/><rect x="190" y="10" width="5" height="5" fill="#e8e8ec"/></svg>
<svg class="mz" style="left:425px;top:650px" width="175" height="15"><rect x="0" y="0" width="5" height="5" fill="#ceced3"/><rect x="5" y="0" width="5" height="5" fill="#d8dae1"/><rect x="10" y="0" width="5" height="5" fill="#e1e0e2"/><rect x="15" y="0" width="5" height="5" fill="#e1e1e6"/><rect x="20" y="0" width="5" height="5" fill="#e1e1e5"/><rect x="25" y="0" width="5" height="5" fill="#e1e0e2"/><rect x="30" y="0" width="5" height="5" fill="#eeeef2"/><rect x="35" y="0" width="5" height="5" fill="#e4e4e9"/><rect x="40" y="0" width="5" height="5" fill="#c2c6d1"/><rect x="45" y="0" width="5" height="5" fill="#c5c9d3"/><rect x="50" y="0" width="5" height="5" fill="#c9c9cf"/><rect x="55" y="0" width="5" height="5" fill="#cdcdd2"/><rect x="60" y="0" width="5" height="5" fill="#cac7c8"/><rect x="65" y="0" width="5" height="5" fill="#ceced4"/><rect x="70" y="0" width="5" height="5" fill="#ceced3"/><rect x="75" y="0" width="5" height="5" fill="#bec2cd"/><rect x="80" y="0" width="5" height="5" fill="#d2d2d7"/><rect x="85" y="0" width="5" height="5" fill="#e3e2e5"/><rect x="90" y="0" width="5" height="5" fill="#c3c0c2"/><rect x="95" y="0" width="5" height="5" fill="#c8cbd5"/><rect x="100" y="0" width="5" height="5" fill="#cdcdd3"/><rect x="105" y="0" width="5" height="5" fill="#d4d6de"/><rect x="110" y="0" width="5" height="5" fill="#c9c9cf"/><rect x="115" y="0" width="5" height="5" fill="#c0c0c6"/><rect x="120" y="0" width="5" height="5" fill="#ceced3"/><rect x="125" y="0" width="5" height="5" fill="#d4d2d4"/><rect x="130" y="0" width="5" height="5" fill="#cccacb"/><rect x="135" y="0" width="5" height="5" fill="#cbcbd1"/><rect x="140" y="0" width="5" height="5" fill="#eeeef2"/><rect x="145" y="0" width="5" height="5" fill="#bec2cd"/><rect x="150" y="0" width="5" height="5" fill="#eeeef2"/><rect x="155" y="0" width="5" height="5" fill="#d7d9e1"/><rect x="160" y="0" width="5" height="5" fill="#e8e7ea"/><rect x="165" y="0" width="5" height="5" fill="#c4c8d2"/><rect x="170" y="0" width="5" height="5" fill="#cdcbcc"/><rect x="0" y="5" width="5" height="5" fill="#dadadf"/><rect x="5" y="5" width="5" height="5" fill="#c4c1c3"/><rect x="10" y="5" width="5" height="5" fill="#cccacb"/><rect x="15" y="5" width="5" height="5" fill="#c2c2c8"/><rect x="20" y="5" width="5" height="5" fill="#a5a5ad"/><rect x="25" y="5" width="5" height="5" fill="#cccacb"/><rect x="30" y="5" width="5" height="5" fill="#eeeef2"/><rect x="35" y="5" width="5" height="5" fill="#e7e7eb"/><rect x="40" y="5" width="5" height="5" fill="#d0d0d5"/><rect x="45" y="5" width="5" height="5" fill="#cfcdce"/><rect x="50" y="5" width="5" height="5" fill="#bebec5"/><rect x="55" y="5" width="5" height="5" fill="#d8d8dd"/><rect x="60" y="5" width="5" height="5" fill="#cccacb"/><rect x="65" y="5" width="5" height="5" fill="#afafb6"/><rect x="70" y="5" width="5" height="5" fill="#c2c6d1"/><rect x="75" y="5" width="5" height="5" fill="#a5abba"/><rect x="80" y="5" width="5" height="5" fill="#d5d5da"/><rect x="85" y="5" width="5" height="5" fill="#dddbdc"/><rect x="90" y="5" width="5" height="5" fill="#c7c4c5"/><rect x="95" y="5" width="5" height="5" fill="#cbcbd1"/><rect x="100" y="5" width="5" height="5" fill="#cfcfd5"/><rect x="105" y="5" width="5" height="5" fill="#b8bdc9"/><rect x="110" y="5" width="5" height="5" fill="#c8cbd5"/><rect x="115" y="5" width="5" height="5" fill="#adadb5"/><rect x="120" y="5" width="5" height="5" fill="#ccccd2"/><rect x="125" y="5" width="5" height="5" fill="#d0d3db"/><rect x="130" y="5" width="5" height="5" fill="#c9c6c7"/><rect x="135" y="5" width="5" height="5" fill="#bdc1cd"/><rect x="140" y="5" width="5" height="5" fill="#c8c8ce"/><rect x="145" y="5" width="5" height="5" fill="#bcb9b9"/><rect x="150" y="5" width="5" height="5" fill="#ebebee"/><rect x="155" y="5" width="5" height="5" fill="#b0b5c2"/><rect x="160" y="5" width="5" height="5" fill="#b8bdc9"/><rect x="165" y="5" width="5" height="5" fill="#c2c6d1"/><rect x="170" y="5" width="5" height="5" fill="#cbced7"/><rect x="0" y="10" width="5" height="5" fill="#e5e4e6"/><rect x="5" y="10" width="5" height="5" fill="#e0e0e5"/><rect x="10" y="10" width="5" height="5" fill="#dcdee5"/><rect x="15" y="10" width="5" height="5" fill="#e0dfe2"/><rect x="20" y="10" width="5" height="5" fill="#dddde2"/><rect x="25" y="10" width="5" height="5" fill="#e7e7eb"/><rect x="30" y="10" width="5" height="5" fill="#dadadf"/><rect x="35" y="10" width="5" height="5" fill="#d5d7df"/><rect x="40" y="10" width="5" height="5" fill="#d2d5dd"/><rect x="45" y="10" width="5" height="5" fill="#e1e0e2"/><rect x="50" y="10" width="5" height="5" fill="#e0e0e4"/><rect x="55" y="10" width="5" height="5" fill="#dadadf"/><rect x="60" y="10" width="5" height="5" fill="#dbdde4"/><rect x="65" y="10" width="5" height="5" fill="#e6e7ec"/><rect x="70" y="10" width="5" height="5" fill="#e3e3e7"/><rect x="75" y="10" width="5" height="5" fill="#e9e8eb"/><rect x="80" y="10" width="5" height="5" fill="#dfdee1"/><rect x="85" y="10" width="5" height="5" fill="#e0e0e4"/><rect x="90" y="10" width="5" height="5" fill="#dddde2"/><rect x="95" y="10" width="5" height="5" fill="#dfdee1"/><rect x="100" y="10" width="5" height="5" fill="#dcdee4"/><rect x="105" y="10" width="5" height="5" fill="#dddde2"/><rect x="110" y="10" width="5" height="5" fill="#dddfe5"/><rect x="115" y="10" width="5" height="5" fill="#e8e8ec"/><rect x="120" y="10" width="5" height="5" fill="#e3e3e7"/><rect x="125" y="10" width="5" height="5" fill="#dddde2"/><rect x="130" y="10" width="5" height="5" fill="#e5e5e9"/><rect x="135" y="10" width="5" height="5" fill="#e4e3e5"/><rect x="140" y="10" width="5" height="5" fill="#eeeef2"/><rect x="145" y="10" width="5" height="5" fill="#e9e8eb"/><rect x="150" y="10" width="5" height="5" fill="#e4e4e9"/><rect x="155" y="10" width="5" height="5" fill="#cccacb"/><rect x="160" y="10" width="5" height="5" fill="#e7e7eb"/><rect x="165" y="10" width="5" height="5" fill="#dee0e6"/><rect x="170" y="10" width="5" height="5" fill="#e7e8ed"/></svg>
<svg class="mz" style="left:51px;top:693px" width="140" height="15"><rect x="0" y="0" width="5" height="5" fill="#e5e5e7"/><rect x="5" y="0" width="5" height="5" fill="#d3d3d6"/><rect x="10" y="0" width="5" height="5" fill="#d0d3db"/><rect x="15" y="0" width="5" height="5" fill="#d9d7d6"/><rect x="20" y="0" width="5" height="5" fill="#cdcac9"/><rect x="25" y="0" width="5" height="5" fill="#dadce1"/><rect x="30" y="0" width="5" height="5" fill="#d7d5d4"/><rect x="35" y="0" width="5" height="5" fill="#cbc8c7"/><rect x="40" y="0" width="5" height="5" fill="#cdd0d8"/><rect x="45" y="0" width="5" height="5" fill="#ccc9c9"/><rect x="50" y="0" width="5" height="5" fill="#d4d2d1"/><rect x="55" y="0" width="5" height="5" fill="#e5e5e7"/><rect x="60" y="0" width="5" height="5" fill="#f5f5f6"/><rect x="65" y="0" width="5" height="5" fill="#d1d1d5"/><rect x="70" y="0" width="5" height="5" fill="#d8dae0"/><rect x="75" y="0" width="5" height="5" fill="#e4e3e3"/><rect x="80" y="0" width="5" height="5" fill="#dddfe4"/><rect x="85" y="0" width="5" height="5" fill="#ceced2"/><rect x="90" y="0" width="5" height="5" fill="#c0c0c6"/><rect x="95" y="0" width="5" height="5" fill="#e4e4e6"/><rect x="100" y="0" width="5" height="5" fill="#ceced2"/><rect x="105" y="0" width="5" height="5" fill="#dddde0"/><rect x="110" y="0" width="5" height="5" fill="#c6c6cb"/><rect x="115" y="0" width="5" height="5" fill="#f5f5f6"/><rect x="120" y="0" width="5" height="5" fill="#c8c5c5"/><rect x="125" y="0" width="5" height="5" fill="#c5c5ca"/><rect x="130" y="0" width="5" height="5" fill="#d8d8db"/><rect x="135" y="0" width="5" height="5" fill="#e2e2e4"/><rect x="0" y="5" width="5" height="5" fill="#c8ccd4"/><rect x="5" y="5" width="5" height="5" fill="#b0b0b7"/><rect x="10" y="5" width="5" height="5" fill="#efeff0"/><rect x="15" y="5" width="5" height="5" fill="#ceced2"/><rect x="20" y="5" width="5" height="5" fill="#bbbbc1"/><rect x="25" y="5" width="5" height="5" fill="#cdcdd1"/><rect x="30" y="5" width="5" height="5" fill="#d1d1d5"/><rect x="35" y="5" width="5" height="5" fill="#cdcdd1"/><rect x="40" y="5" width="5" height="5" fill="#cbced6"/><rect x="45" y="5" width="5" height="5" fill="#cfcfd3"/><rect x="50" y="5" width="5" height="5" fill="#d5d8de"/><rect x="55" y="5" width="5" height="5" fill="#cecbcb"/><rect x="60" y="5" width="5" height="5" fill="#f5f5f6"/><rect x="65" y="5" width="5" height="5" fill="#dbd9d9"/><rect x="70" y="5" width="5" height="5" fill="#e2e2e5"/><rect x="75" y="5" width="5" height="5" fill="#e1dfde"/><rect x="80" y="5" width="5" height="5" fill="#e9e8e8"/><rect x="85" y="5" width="5" height="5" fill="#d3d6dd"/><rect x="90" y="5" width="5" height="5" fill="#bfbcbb"/><rect x="95" y="5" width="5" height="5" fill="#e2e4e8"/><rect x="100" y="5" width="5" height="5" fill="#cdd0d8"/><rect x="105" y="5" width="5" height="5" fill="#bfbfc4"/><rect x="110" y="5" width="5" height="5" fill="#b2b7c4"/><rect x="115" y="5" width="5" height="5" fill="#e4e3e4"/><rect x="120" y="5" width="5" height="5" fill="#b5bac6"/><rect x="125" y="5" width="5" height="5" fill="#b7bcc7"/><rect x="130" y="5" width="5" height="5" fill="#b9b9bf"/><rect x="135" y="5" width="5" height="5" fill="#e0dede"/><rect x="0" y="10" width="5" height="5" fill="#f5f5f5"/><rect x="5" y="10" width="5" height="5" fill="#eae9e9"/><rect x="10" y="10" width="5" height="5" fill="#e8e8ea"/><rect x="15" y="10" width="5" height="5" fill="#dee0e5"/><rect x="20" y="10" width="5" height="5" fill="#dfe1e5"/><rect x="25" y="10" width="5" height="5" fill="#eeeeef"/><rect x="30" y="10" width="5" height="5" fill="#dadadd"/><rect x="35" y="10" width="5" height="5" fill="#e6e6e8"/><rect x="40" y="10" width="5" height="5" fill="#e6e6e8"/><rect x="45" y="10" width="5" height="5" fill="#d8d8db"/><rect x="50" y="10" width="5" height="5" fill="#ebeaea"/><rect x="55" y="10" width="5" height="5" fill="#e6e6e8"/><rect x="60" y="10" width="5" height="5" fill="#e9e9eb"/><rect x="65" y="10" width="5" height="5" fill="#e2e1e2"/><rect x="70" y="10" width="5" height="5" fill="#dddbdb"/><rect x="75" y="10" width="5" height="5" fill="#e5e4e4"/><rect x="80" y="10" width="5" height="5" fill="#e0e2e6"/><rect x="85" y="10" width="5" height="5" fill="#dddde0"/><rect x="90" y="10" width="5" height="5" fill="#e4e3e4"/><rect x="95" y="10" width="5" height="5" fill="#ededef"/><rect x="100" y="10" width="5" height="5" fill="#e7e6e6"/><rect x="105" y="10" width="5" height="5" fill="#f1f2f4"/><rect x="110" y="10" width="5" height="5" fill="#eeeef0"/><rect x="115" y="10" width="5" height="5" fill="#edeef0"/><rect x="120" y="10" width="5" height="5" fill="#f4f4f5"/><rect x="125" y="10" width="5" height="5" fill="#e6e7eb"/><rect x="130" y="10" width="5" height="5" fill="#ebecee"/><rect x="135" y="10" width="5" height="5" fill="#f0f0f1"/></svg>
<svg class="mz" style="left:207px;top:693px" width="195" height="15"><rect x="0" y="0" width="5" height="5" fill="#eeeeef"/><rect x="5" y="0" width="5" height="5" fill="#e9e9eb"/><rect x="10" y="0" width="5" height="5" fill="#e6e6e8"/><rect x="15" y="0" width="5" height="5" fill="#e2e4e8"/><rect x="20" y="0" width="5" height="5" fill="#e6e7eb"/><rect x="25" y="0" width="5" height="5" fill="#dbdde3"/><rect x="30" y="0" width="5" height="5" fill="#c3c7d1"/><rect x="35" y="0" width="5" height="5" fill="#e2e4e9"/><rect x="40" y="0" width="5" height="5" fill="#e3e2e2"/><rect x="45" y="0" width="5" height="5" fill="#d8d8db"/><rect x="50" y="0" width="5" height="5" fill="#e3e3e5"/><rect x="55" y="0" width="5" height="5" fill="#d2d0cf"/><rect x="60" y="0" width="5" height="5" fill="#e9eaed"/><rect x="65" y="0" width="5" height="5" fill="#e2e2e4"/><rect x="70" y="0" width="5" height="5" fill="#d9d9dc"/><rect x="75" y="0" width="5" height="5" fill="#e9eaed"/><rect x="80" y="0" width="5" height="5" fill="#e3e3e5"/><rect x="85" y="0" width="5" height="5" fill="#e5e5e7"/><rect x="90" y="0" width="5" height="5" fill="#dddfe5"/><rect x="95" y="0" width="5" height="5" fill="#f4f4f5"/><rect x="100" y="0" width="5" height="5" fill="#e2e4e8"/><rect x="105" y="0" width="5" height="5" fill="#ebeae9"/><rect x="110" y="0" width="5" height="5" fill="#e7e8ec"/><rect x="115" y="0" width="5" height="5" fill="#dfe1e5"/><rect x="120" y="0" width="5" height="5" fill="#e4e4e6"/><rect x="125" y="0" width="5" height="5" fill="#e4e3e3"/><rect x="130" y="0" width="5" height="5" fill="#e8e8ea"/><rect x="135" y="0" width="5" height="5" fill="#e2e4e8"/><rect x="140" y="0" width="5" height="5" fill="#e7e6e6"/><rect x="145" y="0" width="5" height="5" fill="#e2e2e4"/><rect x="150" y="0" width="5" height="5" fill="#ebeaeb"/><rect x="155" y="0" width="5" height="5" fill="#d8d8db"/><rect x="160" y="0" width="5" height="5" fill="#c4c4c9"/><rect x="165" y="0" width="5" height="5" fill="#f3f3f5"/><rect x="170" y="0" width="5" height="5" fill="#e1e3e8"/><rect x="175" y="0" width="5" height="5" fill="#e3e3e5"/><rect x="180" y="0" width="5" height="5" fill="#ececed"/><rect x="185" y="0" width="5" height="5" fill="#e1e1e3"/><rect x="190" y="0" width="5" height="5" fill="#ebecef"/><rect x="0" y="5" width="5" height="5" fill="#cfd2d9"/><rect x="5" y="5" width="5" height="5" fill="#bfbcbb"/><rect x="10" y="5" width="5" height="5" fill="#d1cfce"/><rect x="15" y="5" width="5" height="5" fill="#b7b7bd"/><rect x="20" y="5" width="5" height="5" fill="#babfca"/><rect x="25" y="5" width="5" height="5" fill="#c5c2c0"/><rect x="30" y="5" width="5" height="5" fill="#b9bec9"/><rect x="35" y="5" width="5" height="5" fill="#ceced2"/><rect x="40" y="5" width="5" height="5" fill="#c1bebc"/><rect x="45" y="5" width="5" height="5" fill="#b3b8c3"/><rect x="50" y="5" width="5" height="5" fill="#cbc8c7"/><rect x="55" y="5" width="5" height="5" fill="#c7c7cb"/><rect x="60" y="5" width="5" height="5" fill="#adb3c0"/><rect x="65" y="5" width="5" height="5" fill="#bcbcc1"/><rect x="70" y="5" width="5" height="5" fill="#bebbb9"/><rect x="75" y="5" width="5" height="5" fill="#d3d3d7"/><rect x="80" y="5" width="5" height="5" fill="#c5c5c9"/><rect x="85" y="5" width="5" height="5" fill="#c7c7cb"/><rect x="90" y="5" width="5" height="5" fill="#b6bbc6"/><rect x="95" y="5" width="5" height="5" fill="#e4e4e6"/><rect x="100" y="5" width="5" height="5" fill="#cbcbcf"/><rect x="105" y="5" width="5" height="5" fill="#b9b5b5"/><rect x="110" y="5" width="5" height="5" fill="#d0d0d4"/><rect x="115" y="5" width="5" height="5" fill="#b9b9bf"/><rect x="120" y="5" width="5" height="5" fill="#c0c4cd"/><rect x="125" y="5" width="5" height="5" fill="#b2b2b8"/><rect x="130" y="5" width="5" height="5" fill="#e2e0df"/><rect x="135" y="5" width="5" height="5" fill="#b5b5bb"/><rect x="140" y="5" width="5" height="5" fill="#d0cecd"/><rect x="145" y="5" width="5" height="5" fill="#c7c4c2"/><rect x="150" y="5" width="5" height="5" fill="#cbcbcf"/><rect x="155" y="5" width="5" height="5" fill="#b5bac6"/><rect x="160" y="5" width="5" height="5" fill="#c8c8cc"/><rect x="165" y="5" width="5" height="5" fill="#e7e7e9"/><rect x="170" y="5" width="5" height="5" fill="#c9cdd5"/><rect x="175" y="5" width="5" height="5" fill="#c6c6cb"/><rect x="180" y="5" width="5" height="5" fill="#b6bbc6"/><rect x="185" y="5" width="5" height="5" fill="#d2d0cf"/><rect x="190" y="5" width="5" height="5" fill="#d7d5d4"/><rect x="0" y="10" width="5" height="5" fill="#e9e8e8"/><rect x="5" y="10" width="5" height="5" fill="#e6e6e8"/><rect x="10" y="10" width="5" height="5" fill="#e6e6e8"/><rect x="15" y="10" width="5" height="5" fill="#e3e3e5"/><rect x="20" y="10" width="5" height="5" fill="#ededee"/><rect x="25" y="10" width="5" height="5" fill="#dee0e5"/><rect x="30" y="10" width="5" height="5" fill="#dcdcdf"/><rect x="35" y="10" width="5" height="5" fill="#f2f2f3"/><rect x="40" y="10" width="5" height="5" fill="#b7bcc7"/><rect x="45" y="10" width="5" height="5" fill="#eaebed"/><rect x="50" y="10" width="5" height="5" fill="#e5e4e4"/><rect x="55" y="10" width="5" height="5" fill="#e1e3e7"/><rect x="60" y="10" width="5" height="5" fill="#e9e8e8"/><rect x="65" y="10" width="5" height="5" fill="#e1e3e7"/><rect x="70" y="10" width="5" height="5" fill="#e7e8ec"/><rect x="75" y="10" width="5" height="5" fill="#eaeaec"/><rect x="80" y="10" width="5" height="5" fill="#e3e3e5"/><rect x="85" y="10" width="5" height="5" fill="#edecec"/><rect x="90" y="10" width="5" height="5" fill="#cdcdd1"/><rect x="95" y="10" width="5" height="5" fill="#ededef"/><rect x="100" y="10" width="5" height="5" fill="#e2e4e8"/><rect x="105" y="10" width="5" height="5" fill="#ececee"/><rect x="110" y="10" width="5" height="5" fill="#eeeeef"/><rect x="115" y="10" width="5" height="5" fill="#eaeaeb"/><rect x="120" y="10" width="5" height="5" fill="#ebecee"/><rect x="125" y="10" width="5" height="5" fill="#eae9e9"/><rect x="130" y="10" width="5" height="5" fill="#e9e8e8"/><rect x="135" y="10" width="5" height="5" fill="#ecedef"/><rect x="140" y="10" width="5" height="5" fill="#e5e5e7"/><rect x="145" y="10" width="5" height="5" fill="#e3e2e2"/><rect x="150" y="10" width="5" height="5" fill="#ebeaeb"/><rect x="155" y="10" width="5" height="5" fill="#eae9e9"/><rect x="160" y="10" width="5" height="5" fill="#e9e9eb"/><rect x="165" y="10" width="5" height="5" fill="#ebebec"/><rect x="170" y="10" width="5" height="5" fill="#e3e3e5"/><rect x="175" y="10" width="5" height="5" fill="#e3e3e6"/><rect x="180" y="10" width="5" height="5" fill="#ecedf0"/><rect x="185" y="10" width="5" height="5" fill="#eeeeef"/><rect x="190" y="10" width="5" height="5" fill="#eeeeef"/></svg>
<svg class="mz" style="left:427px;top:693px" width="175" height="15"><rect x="0" y="0" width="5" height="5" fill="#cfd2da"/><rect x="5" y="0" width="5" height="5" fill="#e1dfde"/><rect x="10" y="0" width="5" height="5" fill="#e5e5e7"/><rect x="15" y="0" width="5" height="5" fill="#e6e7eb"/><rect x="20" y="0" width="5" height="5" fill="#e7e7e9"/><rect x="25" y="0" width="5" height="5" fill="#e1e1e4"/><rect x="30" y="0" width="5" height="5" fill="#f5f5f6"/><rect x="35" y="0" width="5" height="5" fill="#f1f1f2"/><rect x="40" y="0" width="5" height="5" fill="#c7c7cb"/><rect x="45" y="0" width="5" height="5" fill="#ceced2"/><rect x="50" y="0" width="5" height="5" fill="#cdcdd2"/><rect x="55" y="0" width="5" height="5" fill="#cacace"/><rect x="60" y="0" width="5" height="5" fill="#cfcfd3"/><rect x="65" y="0" width="5" height="5" fill="#d3d6dd"/><rect x="70" y="0" width="5" height="5" fill="#c5c9d2"/><rect x="75" y="0" width="5" height="5" fill="#d8d8db"/><rect x="80" y="0" width="5" height="5" fill="#d7d7db"/><rect x="85" y="0" width="5" height="5" fill="#d4d4d7"/><rect x="90" y="0" width="5" height="5" fill="#ced1d8"/><rect x="95" y="0" width="5" height="5" fill="#dadadd"/><rect x="100" y="0" width="5" height="5" fill="#e0e2e6"/><rect x="105" y="0" width="5" height="5" fill="#d0cecd"/><rect x="110" y="0" width="5" height="5" fill="#bfc3cc"/><rect x="115" y="0" width="5" height="5" fill="#e9e9eb"/><rect x="120" y="0" width="5" height="5" fill="#cecbca"/><rect x="125" y="0" width="5" height="5" fill="#c5c5c9"/><rect x="130" y="0" width="5" height="5" fill="#e0e0e3"/><rect x="135" y="0" width="5" height="5" fill="#cfcfd3"/><rect x="140" y="0" width="5" height="5" fill="#f2f2f3"/><rect x="145" y="0" width="5" height="5" fill="#ceced2"/><rect x="150" y="0" width="5" height="5" fill="#f2f2f3"/><rect x="155" y="0" width="5" height="5" fill="#dee0e5"/><rect x="160" y="0" width="5" height="5" fill="#ececee"/><rect x="165" y="0" width="5" height="5" fill="#c7cbd4"/><rect x="170" y="0" width="5" height="5" fill="#d2d0cf"/><rect x="0" y="5" width="5" height="5" fill="#e2e0e0"/><rect x="5" y="5" width="5" height="5" fill="#c7c4c4"/><rect x="10" y="5" width="5" height="5" fill="#ccccd0"/><rect x="15" y="5" width="5" height="5" fill="#c6c6ca"/><rect x="20" y="5" width="5" height="5" fill="#b8b4b2"/><rect x="25" y="5" width="5" height="5" fill="#c0c4ce"/><rect x="30" y="5" width="5" height="5" fill="#efeff0"/><rect x="35" y="5" width="5" height="5" fill="#f3f2f3"/><rect x="40" y="5" width="5" height="5" fill="#d2d0cf"/><rect x="45" y="5" width="5" height="5" fill="#d0d0d4"/><rect x="50" y="5" width="5" height="5" fill="#c8c8cc"/><rect x="55" y="5" width="5" height="5" fill="#d1d4dc"/><rect x="60" y="5" width="5" height="5" fill="#d1d4dc"/><rect x="65" y="5" width="5" height="5" fill="#afafb6"/><rect x="70" y="5" width="5" height="5" fill="#d1cfce"/><rect x="75" y="5" width="5" height="5" fill="#c2bfbd"/><rect x="80" y="5" width="5" height="5" fill="#d5d5d8"/><rect x="85" y="5" width="5" height="5" fill="#d5d3d3"/><rect x="90" y="5" width="5" height="5" fill="#d0d0d4"/><rect x="95" y="5" width="5" height="5" fill="#c2c6d0"/><rect x="100" y="5" width="5" height="5" fill="#d8d8db"/><rect x="105" y="5" width="5" height="5" fill="#d3d3d6"/><rect x="110" y="5" width="5" height="5" fill="#ccc9c9"/><rect x="115" y="5" width="5" height="5" fill="#c3c3c8"/><rect x="120" y="5" width="5" height="5" fill="#c0c0c5"/><rect x="125" y="5" width="5" height="5" fill="#bebec3"/><rect x="130" y="5" width="5" height="5" fill="#cfcfd3"/><rect x="135" y="5" width="5" height="5" fill="#e3e2e2"/><rect x="140" y="5" width="5" height="5" fill="#e6e7eb"/><rect x="145" y="5" width="5" height="5" fill="#d1d1d5"/><rect x="150" y="5" width="5" height="5" fill="#e6e6e8"/><rect x="155" y="5" width="5" height="5" fill="#bebec3"/><rect x="160" y="5" width="5" height="5" fill="#c8c5c5"/><rect x="165" y="5" width="5" height="5" fill="#c7c7cc"/><rect x="170" y="5" width="5" height="5" fill="#d4d4d7"/><rect x="0" y="10" width="5" height="5" fill="#e9e9eb"/><rect x="5" y="10" width="5" height="5" fill="#e3e5e9"/><rect x="10" y="10" width="5" height="5" fill="#e3e5e9"/><rect x="15" y="10" width="5" height="5" fill="#e4e4e6"/><rect x="20" y="10" width="5" height="5" fill="#e3e3e5"/><rect x="25" y="10" width="5" height="5" fill="#edecec"/><rect x="30" y="10" width="5" height="5" fill="#dfe1e5"/><rect x="35" y="10" width="5" height="5" fill="#dadce2"/><rect x="40" y="10" width="5" height="5" fill="#dbd9d9"/><rect x="45" y="10" width="5" height="5" fill="#e6e6e8"/><rect x="50" y="10" width="5" height="5" fill="#e6e6e8"/><rect x="55" y="10" width="5" height="5" fill="#d7dae0"/><rect x="60" y="10" width="5" height="5" fill="#e7e8ec"/><rect x="65" y="10" width="5" height="5" fill="#ececed"/><rect x="70" y="10" width="5" height="5" fill="#e1e3e7"/><rect x="75" y="10" width="5" height="5" fill="#f3f3f4"/><rect x="80" y="10" width="5" height="5" fill="#e9e8e8"/><rect x="85" y="10" width="5" height="5" fill="#dcdcdf"/><rect x="90" y="10" width="5" height="5" fill="#e9e8e8"/><rect x="95" y="10" width="5" height="5" fill="#f0f0f1"/><rect x="100" y="10" width="5" height="5" fill="#e3e5e9"/><rect x="105" y="10" width="5" height="5" fill="#e0e0e3"/><rect x="110" y="10" width="5" height="5" fill="#e3e3e5"/><rect x="115" y="10" width="5" height="5" fill="#f5f5f6"/><rect x="120" y="10" width="5" height="5" fill="#edeef0"/><rect x="125" y="10" width="5" height="5" fill="#e0e0e3"/><rect x="130" y="10" width="5" height="5" fill="#eeeeef"/><rect x="135" y="10" width="5" height="5" fill="#f4f4f5"/><rect x="140" y="10" width="5" height="5" fill="#f2f2f3"/><rect x="145" y="10" width="5" height="5" fill="#dbd9d9"/><rect x="150" y="10" width="5" height="5" fill="#dddfe5"/><rect x="155" y="10" width="5" height="5" fill="#d4d4d7"/><rect x="160" y="10" width="5" height="5" fill="#ececed"/><rect x="165" y="10" width="5" height="5" fill="#e3e5e9"/><rect x="170" y="10" width="5" height="5" fill="#efeeef"/></svg>

<div class="abs" style="left:43px;top:752px;font-size:11.2px;letter-spacing:.75px;color:#474d5c">Total: 589</div>

<svg class="abs" style="left:1185px;top:754px" width="12" height="10" viewBox="0 0 12 10" fill="none" stroke="#b9bdc6" stroke-width="1.1" stroke-linecap="round" stroke-linejoin="round"><path d="M5.2 1.2L1.8 4.9L5.2 8.6M9.6 1.2L6.2 4.9L9.6 8.6"/></svg>
<svg class="abs" style="left:1225px;top:754px" width="8" height="10" viewBox="0 0 8 10" fill="none" stroke="#b9bdc6" stroke-width="1.1" stroke-linecap="round" stroke-linejoin="round"><path d="M5.6 1.2L2.2 4.9L5.6 8.6"/></svg>
<div class="pg" style="left:1250px;background:#e6e8ee;border-radius:50%">1</div>
<div class="pg" style="left:1288px">2</div>
<div class="pg" style="left:1326px">3</div>
<div class="pg" style="left:1365px">4</div>
<div class="pg" style="left:1403px">5</div>
<svg class="abs" style="left:1455px;top:754px" width="8" height="10" viewBox="0 0 8 10" fill="none" stroke="#3a3f4a" stroke-width="1.15" stroke-linecap="round" stroke-linejoin="round"><path d="M2.4 1.2L5.8 4.9L2.4 8.6"/></svg>
<svg class="abs" style="left:1491px;top:754px" width="12" height="10" viewBox="0 0 12 10" fill="none" stroke="#3a3f4a" stroke-width="1.15" stroke-linecap="round" stroke-linejoin="round"><path d="M2.4 1.2L5.8 4.9L2.4 8.6M6.8 1.2L10.2 4.9L6.8 8.6"/></svg>
<div class="abs" style="left:1523px;top:741px;width:65px;height:35px;border:1px solid #dde0e6;border-radius:4px"></div>
<div class="abs" style="left:1533px;top:752px;font-size:13px;color:#1f2229">10</div>
<svg class="abs" style="left:1565px;top:754px" width="12" height="9" viewBox="0 0 12 9" fill="none" stroke="#3a3f4a" stroke-width="1.2">
  <path d="M1 2L6 7L11 2"/>
</svg>
</body></html>
